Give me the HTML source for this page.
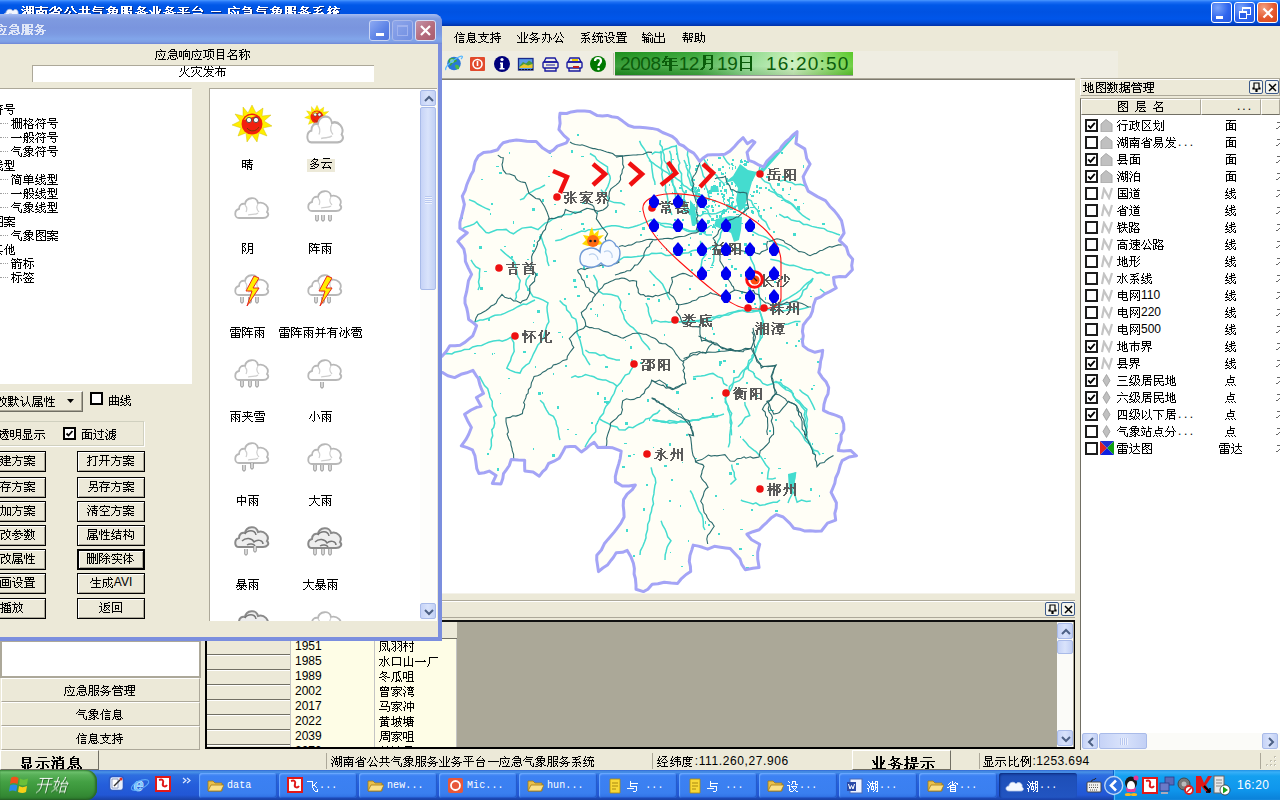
<!DOCTYPE html>
<html><head><meta charset="utf-8">
<style>
*{margin:0;padding:0;box-sizing:border-box}
html,body{width:1280px;height:800px;overflow:hidden;background:#ECE9D8;font-family:"Liberation Sans",sans-serif;font-size:12px;color:#000}
.a{position:absolute}
.t{white-space:nowrap;line-height:14px}
/* main title */
#mtitle{left:0;top:0;width:1280px;height:26px;background:linear-gradient(#4a98ff 0px,#1e70f4 2px,#0058e8 5px,#0052e2 12px,#0056ea 19px,#0048d0 23px,#0030a8 26px)}
#mtitle .tx .g{filter:drop-shadow(1px 1px 0 #0a2a80)}
.xpbtn{width:21px;height:21px;border:1px solid #fff;border-radius:3px;background:radial-gradient(circle at 30% 25%,#7aa4fa,#2f66ee 55%,#2358e0)}
.xpclose{background:radial-gradient(circle at 30% 25%,#f4a080,#e45a30 55%,#d44418)}
#menubar{left:442px;top:26px;width:838px;height:25px;background:#ECE9D8}
#toolbar{left:442px;top:51px;width:676px;height:27px;background:#EFEDE2}
#map{left:442px;top:79px;width:633px;height:515px;background:#fff;border-top:1px solid #7d7a6e;border-bottom:1px solid #f4f2ea}
#rpanel{left:1080px;top:78px;width:200px;height:672px;background:#ECE9D8}
#status{left:0;top:750px;width:1280px;height:20px;background:#ECE9D8}
#taskbar{left:0;top:770px;width:1280px;height:30px;background:linear-gradient(#3168d5 0px,#4993e6 2px,#2e6ee0 5px,#245edb 15px,#2257d5 25px,#1941a5 30px)}
/* dialog */
#dlg{left:-4px;top:14px;width:446px;height:627px;background:#7e96db;border-radius:7px 7px 0 0}
#dlgtitle{left:0;top:14px;width:442px;height:30px;background:linear-gradient(#a6bcf2 0px,#94adea 2px,#7e9ae0 5px,#7a95de 14px,#7c9ae2 20px,#82a6ea 25px,#7e9ee4 28px,#6e86d6 30px);border-radius:0 8px 0 0}
#dlgbody{left:0;top:44px;width:438px;height:593px;background:#ECE9D8}
.btn{border:1px solid #000;background:#ECE9D8;text-align:center;line-height:14px;padding-top:1px;font-size:12px;box-shadow:inset 1px 1px #fff,inset -1px -1px #aca899}
.sbbtn{background:linear-gradient(90deg,#c6d3f7,#d9e3fb 50%,#c2d0f5);border:1px solid #a9bbe9;border-radius:2px}
.pinb{width:14px;height:14px;border:1px solid #3c5a8a;border-radius:2px;background:#f4f4ee}
.hdr{background:#ECE9D8;border:1px solid;border-color:#fff #aca899 #716f64 #fff}
.cb{width:13px;height:13px;border:2px solid #1c1c1c;background:#fff}
.lbtn{width:199px;height:24px;border:1px solid;border-color:#fff #aca899 #aca899 #fff;text-align:center;line-height:14px;padding-top:4px;padding-right:2px}
.sunk{border-top:1px solid #aca899;border-left:1px solid #aca899;border-right:1px solid #fff;border-bottom:1px solid #fff}
.g{display:inline-block;vertical-align:top;fill:currentColor;overflow:visible}
</style></head><body>
<svg width="0" height="0" style="position:absolute;left:0;top:0"><defs><path id="g0" d="M1 2h2v1h-2zM8 2h5v1h-5zM2 3h2v1h-2zM5 2h2v3h-2zM8 3h2v2h-2zM11 3h2v2h-2zM0 5h2v1h-2zM3 5h10v1h-10zM1 6h2v1h-2zM5 6h2v1h-2zM8 6h2v1h-2zM3 7h7v1h-7zM11 6h2v2h-2zM2 8h3v1h-3zM6 8h7v1h-7zM1 9h4v1h-4zM6 9h4v1h-4zM0 10h10v1h-10zM1 11h4v1h-4zM6 11h4v1h-4zM7 12h2v1h-2zM11 9h2v4h-2zM1 12h2v2h-2zM6 13h2v1h-2zM10 13h3v1h-3z"/><path id="g1" d="M5 2h2v1h-2zM0 3h13v1h-13zM5 4h2v2h-2zM1 6h11v1h-11zM1 7h4v1h-4zM7 7h2v1h-2zM1 8h2v1h-2zM4 8h4v1h-4zM1 9h8v1h-8zM1 10h2v1h-2zM5 10h2v1h-2zM1 11h8v1h-8zM10 7h2v6h-2zM1 12h2v2h-2zM5 12h2v2h-2zM8 13h4v1h-4z"/><path id="g2" d="M5 2h2v1h-2zM3 3h4v1h-4zM9 3h2v1h-2zM2 4h2v1h-2zM5 4h2v1h-2zM8 4h4v1h-4zM1 5h2v1h-2zM5 5h4v1h-4zM0 6h2v1h-2zM5 6h3v1h-3zM11 5h2v2h-2zM4 7h7v1h-7zM2 8h3v1h-3zM9 8h2v1h-2zM0 9h11v1h-11zM3 10h2v1h-2zM9 10h2v1h-2zM3 11h8v1h-8zM3 12h2v1h-2zM9 12h2v1h-2zM3 13h8v1h-8z"/><path id="g3" d="M7 2h2v2h-2zM3 3h2v2h-2zM8 4h2v2h-2zM2 5h2v2h-2zM9 6h2v1h-2zM1 7h2v1h-2zM10 7h2v1h-2zM0 8h2v1h-2zM5 7h2v2h-2zM11 8h2v1h-2zM4 9h2v2h-2zM7 10h2v1h-2zM3 11h2v1h-2zM8 11h2v1h-2zM2 12h9v1h-9zM3 13h2v1h-2zM9 13h2v1h-2z"/><path id="g4" d="M4 2h2v3h-2zM8 2h2v3h-2zM1 5h11v1h-11zM4 6h2v3h-2zM8 6h2v3h-2zM0 9h13v1h-13zM4 11h2v1h-2zM8 11h2v1h-2zM3 12h2v1h-2zM9 12h2v1h-2zM1 13h3v1h-3zM10 13h3v1h-3z"/><path id="g5" d="M2 2h2v1h-2zM2 3h10v1h-10zM1 4h2v1h-2zM1 5h9v1h-9zM0 6h2v1h-2zM1 7h9v1h-9zM8 8h2v3h-2zM11 10h2v1h-2zM9 11h4v2h-4zM10 13h3v1h-3z"/><path id="g6" d="M4 2h2v1h-2zM3 3h7v1h-7zM2 4h2v1h-2zM7 4h2v1h-2zM0 5h12v1h-12zM2 6h2v1h-2zM6 6h2v1h-2zM10 6h2v1h-2zM2 7h10v1h-10zM3 8h2v1h-2zM6 8h2v1h-2zM10 8h2v1h-2zM1 9h3v1h-3zM5 9h6v1h-6zM3 10h7v1h-7zM1 11h3v1h-3zM5 11h6v1h-6zM3 12h3v1h-3zM7 12h2v1h-2zM10 12h3v1h-3zM0 13h4v1h-4zM5 13h3v1h-3z"/><path id="g7" d="M1 2h11v1h-11zM1 3h2v2h-2zM4 3h4v2h-4zM10 3h2v2h-2zM1 5h7v1h-7zM9 5h3v1h-3zM4 6h4v1h-4zM1 6h2v2h-2zM4 7h8v1h-8zM1 8h7v1h-7zM4 9h5v1h-5zM10 8h2v2h-2zM4 10h8v1h-8zM1 9h2v3h-2zM4 11h4v1h-4zM9 11h2v1h-2zM4 12h8v1h-8zM0 12h2v2h-2zM3 13h6v1h-6zM11 13h2v1h-2z"/><path id="g8" d="M4 2h2v1h-2zM3 3h8v1h-8zM3 4h2v1h-2zM8 4h2v1h-2zM2 5h4v1h-4zM7 5h2v1h-2zM5 6h3v1h-3zM3 7h3v1h-3zM7 7h3v1h-3zM0 8h4v1h-4zM5 8h2v1h-2zM9 8h4v1h-4zM2 9h9v1h-9zM5 10h2v1h-2zM4 11h2v1h-2zM9 10h2v2h-2zM3 12h2v1h-2zM7 12h4v1h-4zM2 13h2v1h-2zM8 13h2v1h-2z"/><path id="g9" d="M0 6h2v1h-2zM7 2h2v5h-2zM10 5h2v2h-2zM1 7h2v1h-2zM4 2h2v6h-2zM7 7h4v2h-4zM2 8h4v2h-4zM7 9h3v1h-3zM4 10h2v3h-2zM7 10h2v3h-2zM0 13h13v1h-13z"/><path id="g10" d="M1 3h11v1h-11zM2 5h2v1h-2zM5 4h2v2h-2zM9 5h2v1h-2zM3 6h4v1h-4zM8 6h2v1h-2zM5 7h2v1h-2zM0 8h13v1h-13zM5 9h2v5h-2z"/><path id="g11" d="M5 2h2v1h-2zM4 3h2v1h-2zM3 4h2v1h-2zM8 4h2v1h-2zM2 5h2v1h-2zM9 5h2v1h-2zM1 6h11v1h-11zM10 7h2v1h-2zM2 9h9v1h-9zM2 10h2v2h-2zM9 10h2v2h-2zM2 12h9v1h-9zM2 13h2v1h-2zM9 13h2v1h-2z"/><path id="g12" d="M2 7h10v1h-10z"/><path id="g13" d="M6 2h2v1h-2zM7 3h2v1h-2zM1 4h12v1h-12zM5 6h2v1h-2zM1 5h2v3h-2zM6 7h2v1h-2zM1 8h4v1h-4zM4 9h2v1h-2zM7 8h2v2h-2zM10 7h2v3h-2zM1 9h2v3h-2zM5 10h2v2h-2zM9 10h2v2h-2zM0 12h2v1h-2zM8 12h2v1h-2zM0 13h13v1h-13z"/><path id="g14" d="M3 2h2v1h-2zM3 3h7v1h-7zM2 4h2v1h-2zM7 4h2v1h-2zM1 5h10v1h-10zM9 6h2v1h-2zM3 7h8v1h-8zM9 8h2v1h-2zM3 9h8v1h-8zM5 10h2v1h-2zM6 11h2v1h-2zM9 11h2v1h-2zM1 11h4v2h-4zM8 12h4v1h-4zM0 13h2v1h-2zM4 13h8v1h-8z"/><path id="g15" d="M7 2h5v1h-5zM1 3h7v1h-7zM5 4h2v1h-2zM4 5h2v1h-2zM8 5h2v1h-2zM2 6h7v1h-7zM5 7h2v1h-2zM4 8h2v1h-2zM9 8h2v1h-2zM1 9h11v1h-11zM6 10h2v1h-2zM10 10h2v1h-2zM3 11h2v1h-2zM6 11h4v1h-4zM2 12h2v1h-2zM6 12h2v1h-2zM9 12h2v1h-2zM1 13h2v1h-2zM5 13h3v1h-3zM10 13h2v1h-2z"/><path id="g16" d="M7 2h2v1h-2zM2 2h2v2h-2zM8 3h2v1h-2zM1 4h2v1h-2zM4 4h9v1h-9zM1 5h4v1h-4zM7 5h2v1h-2zM0 6h4v1h-4zM6 6h2v1h-2zM9 6h2v1h-2zM2 7h2v1h-2zM5 7h7v1h-7zM1 8h4v1h-4zM6 8h6v1h-6zM0 9h4v1h-4zM6 9h4v2h-4zM2 11h5v1h-5zM0 12h3v1h-3zM5 12h2v1h-2zM8 11h2v2h-2zM11 11h2v2h-2zM4 13h2v1h-2zM9 13h4v1h-4z"/><path id="g17" d="M6 2h1v1h-1zM3 2h1v2h-1zM7 3h1v1h-1zM4 4h7v1h-7zM2 4h1v2h-1zM1 6h2v1h-2zM5 6h5v1h-5zM0 7h1v1h-1zM5 8h5v1h-5zM5 10h5v1h-5zM5 11h1v1h-1zM9 11h1v1h-1zM2 7h1v6h-1zM5 12h5v1h-5z"/><path id="g18" d="M4 2h1v1h-1zM2 3h7v1h-7zM2 4h1v1h-1zM8 4h1v1h-1zM2 5h7v1h-7zM2 6h1v1h-1zM8 6h1v1h-1zM2 7h7v1h-7zM2 8h1v1h-1zM8 8h1v1h-1zM2 9h7v1h-7zM5 10h1v1h-1zM9 10h1v1h-1zM1 10h1v2h-1zM3 10h1v2h-1zM6 11h1v1h-1zM8 11h1v1h-1zM10 11h1v1h-1zM0 12h1v1h-1zM4 12h5v1h-5z"/><path id="g19" d="M5 2h1v2h-1zM0 4h11v1h-11zM5 5h1v1h-1zM2 6h7v1h-7zM3 7h1v2h-1zM7 7h1v2h-1zM4 9h1v1h-1zM6 9h1v1h-1zM5 10h1v1h-1zM3 11h2v1h-2zM6 11h2v1h-2zM0 12h3v1h-3zM8 12h3v1h-3z"/><path id="g20" d="M7 2h1v1h-1zM2 2h1v2h-1zM5 3h5v1h-5zM0 4h5v1h-5zM7 4h1v2h-1zM2 5h1v2h-1zM4 6h7v1h-7zM2 7h2v1h-2zM8 7h1v1h-1zM1 8h2v1h-2zM4 8h7v1h-7zM0 9h1v1h-1zM5 9h1v1h-1zM6 10h1v1h-1zM2 9h1v3h-1zM8 9h1v3h-1zM0 12h3v1h-3zM7 12h2v1h-2z"/><path id="g21" d="M0 5h1v1h-1zM10 4h1v2h-1zM1 6h1v1h-1zM7 2h1v6h-1zM9 6h1v2h-1zM2 7h1v2h-1zM7 8h2v1h-2zM4 2h1v10h-1zM7 9h1v3h-1zM0 12h11v1h-11z"/><path id="g22" d="M3 2h1v1h-1zM3 3h6v1h-6zM2 4h2v1h-2zM7 4h1v1h-1zM1 5h1v1h-1zM4 5h1v1h-1zM6 5h1v1h-1zM5 6h1v1h-1zM3 7h2v1h-2zM6 7h2v1h-2zM0 8h3v1h-3zM5 8h1v1h-1zM8 8h3v1h-3zM2 9h7v1h-7zM4 10h1v1h-1zM3 11h1v1h-1zM8 10h1v2h-1zM1 12h2v1h-2zM6 12h2v1h-2z"/><path id="g23" d="M4 2h1v2h-1zM1 4h8v1h-8zM8 5h1v2h-1zM8 7h2v1h-2zM2 7h1v2h-1zM4 5h1v4h-1zM1 9h1v1h-1zM10 8h1v2h-1zM3 9h1v2h-1zM2 11h1v1h-1zM6 11h1v1h-1zM8 8h1v4h-1zM1 12h1v1h-1zM7 12h1v1h-1z"/><path id="g24" d="M7 2h1v2h-1zM3 3h1v2h-1zM8 4h1v2h-1zM2 5h1v2h-1zM9 6h1v1h-1zM1 7h1v1h-1zM5 6h1v2h-1zM10 7h1v1h-1zM0 8h1v1h-1zM4 8h1v2h-1zM7 9h1v1h-1zM3 10h1v1h-1zM8 10h1v1h-1zM2 11h8v1h-8zM3 12h1v1h-1zM9 12h1v1h-1z"/><path id="g25" d="M7 2h3v1h-3zM1 3h6v1h-6zM4 4h1v1h-1zM8 4h1v1h-1zM2 5h6v1h-6zM5 6h1v1h-1zM4 7h1v1h-1zM8 7h1v1h-1zM1 8h9v1h-9zM9 9h1v1h-1zM3 10h1v1h-1zM7 10h1v1h-1zM2 11h1v1h-1zM5 9h1v3h-1zM8 11h1v1h-1zM1 12h1v1h-1zM4 12h2v1h-2zM9 12h1v1h-1z"/><path id="g26" d="M7 2h1v1h-1zM2 2h1v2h-1zM4 3h7v1h-7zM6 4h1v1h-1zM1 4h1v2h-1zM3 5h1v1h-1zM5 5h1v1h-1zM9 5h1v1h-1zM0 6h3v1h-3zM4 6h7v1h-7zM2 7h1v1h-1zM10 7h1v1h-1zM1 8h1v1h-1zM0 9h4v1h-4zM6 7h1v4h-1zM2 11h2v1h-2zM5 11h1v1h-1zM8 7h1v5h-1zM10 10h1v2h-1zM0 12h2v1h-2zM4 12h1v1h-1zM8 12h3v1h-3z"/><path id="g27" d="M1 2h1v1h-1zM5 2h4v1h-4zM2 3h1v1h-1zM5 3h1v2h-1zM8 3h1v2h-1zM4 5h1v1h-1zM8 5h3v1h-3zM0 6h3v1h-3zM4 7h6v1h-6zM5 8h1v1h-1zM9 8h1v1h-1zM2 7h1v3h-1zM6 9h1v1h-1zM8 9h1v1h-1zM2 10h2v1h-2zM7 10h1v1h-1zM2 11h1v1h-1zM6 11h1v1h-1zM8 11h1v1h-1zM3 12h3v1h-3zM9 12h2v1h-2z"/><path id="g28" d="M1 2h9v1h-9zM1 3h1v1h-1zM4 3h1v1h-1zM6 3h1v1h-1zM9 3h1v1h-1zM1 4h9v1h-9zM5 5h1v1h-1zM0 6h11v1h-11zM2 7h1v1h-1zM8 7h1v1h-1zM2 8h7v1h-7zM2 9h1v1h-1zM8 9h1v1h-1zM2 10h7v1h-7zM2 11h1v1h-1zM8 11h1v1h-1zM0 12h11v1h-11z"/><path id="g29" d="M7 2h1v1h-1zM1 2h1v2h-1zM6 3h1v1h-1zM8 3h1v1h-1zM0 4h4v1h-4zM5 4h1v1h-1zM9 4h1v1h-1zM1 5h1v1h-1zM4 5h1v1h-1zM6 5h3v1h-3zM10 5h1v1h-1zM0 6h1v1h-1zM2 6h1v1h-1zM0 7h7v1h-7zM2 8h1v1h-1zM4 8h1v1h-1zM6 8h1v1h-1zM2 9h5v1h-5zM0 10h3v1h-3zM4 10h1v1h-1zM6 10h1v1h-1zM4 11h3v1h-3zM8 8h1v4h-1zM10 7h1v5h-1zM2 11h1v2h-1zM4 12h1v1h-1zM6 12h1v1h-1zM9 12h2v1h-2z"/><path id="g30" d="M1 3h1v3h-1zM5 2h1v4h-1zM9 3h1v3h-1zM1 6h9v1h-9zM0 8h1v4h-1zM5 7h1v5h-1zM10 8h1v4h-1zM0 12h11v1h-11z"/><path id="g31" d="M3 2h1v1h-1zM1 3h5v1h-5zM7 3h4v1h-4zM3 4h1v1h-1zM10 4h1v1h-1zM1 5h5v1h-5zM9 5h1v1h-1zM3 6h1v1h-1zM7 4h1v3h-1zM10 6h1v1h-1zM0 7h6v1h-6zM7 7h4v1h-4zM2 8h1v1h-1zM5 8h1v1h-1zM7 8h1v1h-1zM1 9h9v1h-9zM9 10h1v1h-1zM2 10h1v2h-1zM8 11h2v1h-2zM5 10h1v3h-1z"/><path id="g32" d="M1 3h4v1h-4zM7 2h1v3h-1zM1 4h1v2h-1zM4 4h1v2h-1zM6 5h5v1h-5zM1 6h4v1h-4zM1 7h1v1h-1zM4 7h1v1h-1zM1 8h4v1h-4zM4 9h1v1h-1zM7 6h1v4h-1zM1 9h1v2h-1zM3 10h4v1h-4zM0 11h3v1h-3zM6 11h1v1h-1zM8 11h1v1h-1zM10 6h1v6h-1zM5 12h1v1h-1zM9 12h1v1h-1z"/><path id="g33" d="M4 4h3v1h-3zM4 5h2v1h-2zM3 6h13v1h-13zM3 7h2v1h-2zM2 8h2v1h-2zM8 7h3v2h-3zM1 9h15v1h-15zM1 10h2v1h-2zM4 10h2v3h-2zM8 10h3v3h-3zM1 13h16v1h-16zM8 14h3v5h-3z"/><path id="g34" d="M4 3h10v1h-10zM4 4h3v3h-3zM12 4h2v3h-2zM4 7h10v1h-10zM4 8h3v3h-3zM12 8h2v3h-2zM4 11h10v1h-10zM4 12h3v1h-3zM4 13h2v2h-2zM3 15h3v1h-3zM12 12h2v4h-2zM2 16h3v1h-3zM11 16h3v1h-3zM1 17h3v1h-3zM10 17h3v1h-3z"/><path id="g35" d="M3 4h12v1h-12zM3 5h2v5h-2zM13 5h2v5h-2zM3 10h12v1h-12zM3 11h2v5h-2zM13 11h2v5h-2zM3 16h12v1h-12zM3 17h2v2h-2zM13 17h2v2h-2z"/><path id="g36" d="M2 2h1v3h-1zM7 2h1v3h-1zM9 4h1v1h-1zM0 5h4v1h-4zM5 3h1v3h-1zM7 5h3v1h-3zM5 6h3v1h-3zM4 7h2v1h-2zM7 7h1v2h-1zM9 6h1v3h-1zM2 6h1v4h-1zM7 9h3v1h-3zM2 10h2v1h-2zM7 10h1v1h-1zM0 11h2v1h-2zM5 8h1v4h-1zM10 10h1v2h-1zM6 12h5v1h-5z"/><path id="g37" d="M1 2h10v1h-10zM4 3h1v1h-1zM4 4h5v1h-5zM1 3h1v3h-1zM3 5h2v1h-2zM7 5h1v1h-1zM1 6h2v1h-2zM5 6h2v1h-2zM1 7h1v1h-1zM4 7h1v1h-1zM7 7h1v1h-1zM10 3h1v5h-1zM1 8h3v1h-3zM5 8h1v1h-1zM8 8h3v1h-3zM6 9h1v1h-1zM5 10h1v1h-1zM1 9h1v3h-1zM6 11h1v1h-1zM10 9h1v3h-1zM1 12h10v1h-10z"/><path id="g38" d="M0 2h1v1h-1zM3 2h1v1h-1zM5 2h1v1h-1zM1 3h1v1h-1zM3 3h2v1h-2zM7 2h1v2h-1zM0 4h6v1h-6zM7 4h4v1h-4zM2 5h2v1h-2zM6 5h2v1h-2zM1 6h1v1h-1zM3 6h2v1h-2zM0 7h1v1h-1zM3 7h1v1h-1zM5 7h1v1h-1zM0 8h6v1h-6zM2 9h1v1h-1zM7 6h1v4h-1zM9 5h1v5h-1zM1 10h2v1h-2zM4 9h1v2h-1zM8 10h1v1h-1zM3 11h1v1h-1zM7 11h1v1h-1zM9 11h1v1h-1zM0 12h3v1h-3zM4 12h3v1h-3zM10 12h1v1h-1z"/><path id="g39" d="M5 2h6v1h-6zM2 2h1v2h-1zM5 3h1v1h-1zM0 4h6v1h-6zM10 3h1v2h-1zM5 5h6v1h-6zM2 5h1v2h-1zM4 6h2v1h-2zM8 6h1v1h-1zM2 7h2v1h-2zM5 7h6v1h-6zM1 8h2v1h-2zM5 8h1v1h-1zM8 8h1v1h-1zM0 9h1v1h-1zM5 9h6v1h-6zM4 10h3v1h-3zM0 11h1v1h-1zM2 9h1v3h-1zM4 11h1v1h-1zM6 11h1v1h-1zM10 10h1v2h-1zM1 12h1v1h-1zM3 12h1v1h-1zM6 12h5v1h-5z"/><path id="g40" d="M2 2h1v1h-1zM7 2h1v1h-1zM2 3h4v1h-4zM7 3h4v1h-4zM1 4h1v1h-1zM3 4h1v1h-1zM6 4h1v1h-1zM8 4h1v1h-1zM0 5h11v1h-11zM0 6h1v1h-1zM10 6h1v1h-1zM2 7h7v1h-7zM2 8h1v1h-1zM8 8h1v1h-1zM2 9h8v1h-8zM2 10h1v2h-1zM9 10h1v2h-1zM2 12h8v1h-8z"/><path id="g41" d="M4 2h7v1h-7zM0 3h5v1h-5zM7 3h1v1h-1zM10 3h1v1h-1zM4 4h7v1h-7zM2 4h1v3h-1zM4 5h1v2h-1zM7 5h1v2h-1zM10 5h1v2h-1zM0 7h11v1h-11zM7 8h1v1h-1zM2 8h1v2h-1zM5 9h5v1h-5zM2 10h2v1h-2zM0 11h2v1h-2zM7 10h1v2h-1zM4 12h7v1h-7z"/><path id="g42" d="M2 2h8v1h-8zM2 3h1v1h-1zM9 3h1v1h-1zM2 4h8v1h-8zM4 6h6v1h-6zM2 5h1v3h-1zM2 8h9v1h-9zM6 9h1v1h-1zM2 9h1v2h-1zM5 10h1v1h-1zM8 10h1v1h-1zM1 11h1v1h-1zM4 11h1v1h-1zM9 11h1v1h-1zM0 12h1v1h-1zM4 12h7v1h-7z"/><path id="g43" d="M3 2h1v1h-1zM3 3h7v1h-7zM3 4h1v1h-1zM8 4h1v1h-1zM2 5h1v1h-1zM4 5h1v1h-1zM7 5h1v1h-1zM1 6h1v1h-1zM5 6h2v1h-2zM5 7h1v1h-1zM3 8h7v1h-7zM0 9h4v1h-4zM3 10h1v2h-1zM9 9h1v3h-1zM3 12h7v1h-7z"/><path id="g44" d="M2 2h1v1h-1zM5 2h5v1h-5zM1 3h1v1h-1zM0 4h1v1h-1zM3 5h1v1h-1zM2 6h1v1h-1zM4 6h7v1h-7zM1 7h2v1h-2zM0 8h1v1h-1zM8 7h1v5h-1zM2 8h1v5h-1zM6 12h3v1h-3z"/><path id="g45" d="M0 3h6v1h-6zM7 2h1v2h-1zM7 4h4v1h-4zM3 4h1v2h-1zM6 5h2v1h-2zM3 6h3v1h-3zM7 6h1v3h-1zM9 5h1v4h-1zM3 7h1v3h-1zM1 6h1v5h-1zM3 10h3v1h-3zM8 9h1v2h-1zM0 11h3v1h-3zM7 11h1v1h-1zM9 11h1v1h-1zM5 12h2v1h-2zM10 12h1v1h-1z"/><path id="g46" d="M1 2h9v1h-9zM3 4h1v1h-1zM4 5h1v1h-1zM8 4h1v2h-1zM5 6h1v1h-1zM7 6h1v1h-1zM6 7h1v1h-1zM5 8h1v1h-1zM7 8h1v1h-1zM4 9h1v1h-1zM3 10h1v1h-1zM8 9h1v2h-1zM1 3h1v9h-1zM1 12h10v1h-10z"/><path id="g47" d="M4 2h1v1h-1zM5 3h1v1h-1zM2 2h1v3h-1zM0 5h7v1h-7zM5 7h1v1h-1zM2 6h1v3h-1zM4 8h1v1h-1zM3 9h1v1h-1zM8 4h1v6h-1zM2 10h2v1h-2zM1 11h1v1h-1zM4 11h1v1h-1zM6 10h1v2h-1zM10 2h1v10h-1zM0 12h1v1h-1zM5 12h2v1h-2zM8 12h3v1h-3z"/><path id="g48" d="M1 2h10v1h-10zM5 3h1v1h-1zM4 4h1v1h-1zM1 5h10v1h-10zM4 6h1v1h-1zM7 6h1v1h-1zM4 7h4v1h-4zM4 8h1v1h-1zM7 8h1v1h-1zM4 9h4v1h-4zM1 6h1v5h-1zM4 10h1v1h-1zM7 10h1v1h-1zM10 6h1v5h-1zM1 11h10v1h-10zM1 12h1v1h-1zM10 12h1v1h-1z"/><path id="g49" d="M7 2h1v2h-1zM1 4h10v1h-10zM6 5h2v1h-2zM5 6h1v1h-1zM4 7h1v1h-1zM3 8h1v1h-1zM2 9h1v1h-1zM0 10h2v1h-2zM5 11h1v1h-1zM7 6h1v6h-1zM6 12h1v1h-1z"/><path id="g50" d="M1 2h1v1h-1zM8 2h3v1h-3zM2 3h1v1h-1zM5 2h1v2h-1zM8 3h1v1h-1zM3 4h6v1h-6zM10 3h1v2h-1zM0 5h1v1h-1zM8 5h3v1h-3zM1 6h1v1h-1zM3 5h1v2h-1zM5 5h1v2h-1zM4 7h3v1h-3zM8 6h1v2h-1zM10 6h1v2h-1zM2 7h1v2h-1zM8 8h3v1h-3zM0 9h2v1h-2zM4 8h1v2h-1zM6 8h1v2h-1zM4 10h3v1h-3zM8 9h1v2h-1zM7 11h1v1h-1zM10 9h1v3h-1zM1 10h1v3h-1zM6 12h1v1h-1zM9 12h2v1h-2z"/><path id="g51" d="M5 2h1v1h-1zM0 3h11v1h-11zM5 4h1v1h-1zM1 5h9v1h-9zM3 6h1v1h-1zM7 6h1v1h-1zM1 6h1v2h-1zM4 7h1v1h-1zM6 7h1v1h-1zM9 6h1v2h-1zM1 8h9v1h-9zM1 9h1v1h-1zM5 9h1v1h-1zM9 9h1v1h-1zM1 10h9v1h-9zM9 11h1v1h-1zM1 11h1v2h-1zM5 11h1v2h-1zM8 12h2v1h-2z"/><path id="g52" d="M3 3h1v1h-1zM8 3h1v1h-1zM2 4h1v1h-1zM5 2h1v3h-1zM7 4h1v1h-1zM9 4h2v1h-2zM1 5h1v1h-1zM5 5h2v1h-2zM10 5h1v1h-1zM3 6h6v1h-6zM2 7h2v1h-2zM8 7h1v1h-1zM0 8h2v1h-2zM3 8h6v1h-6zM3 9h1v1h-1zM8 9h1v1h-1zM3 10h6v1h-6zM3 11h1v1h-1zM8 11h1v1h-1zM3 12h6v1h-6z"/><path id="g53" d="M2 2h7v1h-7zM2 3h1v1h-1zM8 3h1v1h-1zM2 4h7v1h-7zM2 5h1v1h-1zM8 5h1v1h-1zM2 6h7v1h-7zM2 7h1v1h-1zM2 8h8v1h-8zM1 9h1v1h-1zM4 9h1v1h-1zM0 10h1v1h-1zM3 10h1v1h-1zM6 9h1v2h-1zM2 11h1v1h-1zM5 11h1v1h-1zM9 9h1v3h-1zM1 12h1v1h-1zM4 12h1v1h-1zM7 12h2v1h-2z"/><path id="g54" d="M8 2h1v1h-1zM2 2h1v2h-1zM9 3h1v1h-1zM1 4h1v1h-1zM5 2h1v3h-1zM1 5h10v1h-10zM4 6h1v1h-1zM4 7h5v1h-5zM4 8h1v1h-1zM8 8h1v1h-1zM3 9h1v1h-1zM5 9h1v1h-1zM7 9h1v1h-1zM2 10h1v1h-1zM6 10h1v1h-1zM1 11h1v1h-1zM5 11h1v1h-1zM7 11h2v1h-2zM0 12h1v1h-1zM3 12h2v1h-2zM9 12h2v1h-2z"/><path id="g55" d="M2 2h7v1h-7zM2 3h1v1h-1zM8 3h1v1h-1zM2 4h7v1h-7zM2 5h1v1h-1zM8 5h1v1h-1zM2 6h7v1h-7zM2 7h1v1h-1zM8 7h1v1h-1zM0 8h11v1h-11zM4 9h1v1h-1zM3 10h1v1h-1zM8 10h1v1h-1zM1 11h9v1h-9zM2 12h1v1h-1zM9 12h1v1h-1z"/><path id="g56" d="M1 2h1v1h-1zM7 2h1v1h-1zM2 3h1v1h-1zM6 3h1v1h-1zM0 4h1v1h-1zM5 4h6v1h-6zM1 5h1v1h-1zM3 5h1v2h-1zM5 5h1v2h-1zM10 5h1v2h-1zM5 7h6v1h-6zM2 7h1v2h-1zM0 9h2v1h-2zM5 8h1v3h-1zM10 8h1v3h-1zM5 11h6v1h-6zM1 10h1v3h-1zM5 12h1v1h-1zM10 12h1v1h-1z"/><path id="g57" d="M1 2h10v1h-10zM3 4h6v1h-6zM5 5h1v2h-1zM3 7h6v1h-6zM7 8h1v1h-1zM1 3h1v7h-1zM5 8h1v2h-1zM8 9h1v1h-1zM10 3h1v7h-1zM1 10h10v1h-10zM1 11h1v1h-1zM10 11h1v1h-1zM1 12h10v1h-10z"/><path id="g58" d="M1 2h1v1h-1zM5 2h1v1h-1zM9 2h1v1h-1zM6 3h1v1h-1zM8 3h1v1h-1zM2 3h1v2h-1zM4 4h7v1h-7zM7 5h1v1h-1zM0 6h3v1h-3zM5 6h5v1h-5zM5 7h1v1h-1zM9 7h1v1h-1zM5 8h5v1h-5zM5 9h1v1h-1zM9 9h1v1h-1zM2 7h1v4h-1zM5 10h5v1h-5zM1 11h1v1h-1zM3 11h1v1h-1zM0 12h1v1h-1zM4 12h7v1h-7z"/><path id="g59" d="M8 2h1v1h-1zM2 2h1v2h-1zM6 2h1v2h-1zM9 3h1v1h-1zM6 4h4v1h-4zM1 4h1v2h-1zM4 5h3v1h-3zM0 6h3v1h-3zM6 6h5v1h-5zM2 7h1v1h-1zM4 7h3v1h-3zM1 8h1v1h-1zM9 8h1v1h-1zM0 9h4v1h-4zM6 8h1v2h-1zM8 9h1v1h-1zM4 10h1v1h-1zM7 10h1v1h-1zM2 11h2v1h-2zM6 11h1v1h-1zM8 11h1v1h-1zM10 10h1v2h-1zM0 12h2v1h-2zM4 12h2v1h-2zM9 12h2v1h-2z"/><path id="g60" d="M1 2h1v1h-1zM1 3h3v1h-3zM5 2h1v2h-1zM7 2h1v2h-1zM1 4h1v1h-1zM5 4h5v1h-5zM1 5h4v1h-4zM0 6h1v1h-1zM7 5h1v2h-1zM2 6h1v2h-1zM4 7h7v1h-7zM0 8h4v1h-4zM7 8h1v1h-1zM2 9h1v2h-1zM4 10h1v1h-1zM6 9h1v2h-1zM8 9h1v2h-1zM2 11h2v1h-2zM5 11h1v1h-1zM9 11h1v1h-1zM2 12h1v1h-1zM4 12h1v1h-1zM10 12h1v1h-1z"/><path id="g61" d="M0 2h4v1h-4zM5 2h1v1h-1zM5 3h5v1h-5zM3 3h1v2h-1zM5 4h1v1h-1zM9 4h1v1h-1zM0 3h1v3h-1zM3 5h2v1h-2zM6 5h1v1h-1zM8 5h1v1h-1zM0 6h4v1h-4zM7 6h1v1h-1zM2 7h1v1h-1zM6 7h1v1h-1zM8 7h1v1h-1zM2 8h2v1h-2zM5 8h1v1h-1zM9 8h1v1h-1zM4 9h7v1h-7zM2 9h1v2h-1zM0 8h1v4h-1zM2 11h2v1h-2zM5 10h1v2h-1zM9 10h1v2h-1zM0 12h2v1h-2zM5 12h5v1h-5z"/><path id="g62" d="M5 2h1v1h-1zM0 3h11v1h-11zM3 5h5v1h-5zM3 6h1v1h-1zM7 6h1v1h-1zM1 7h9v1h-9zM3 9h5v1h-5zM3 10h1v1h-1zM7 10h1v1h-1zM3 11h5v1h-5zM9 8h1v4h-1zM1 8h1v5h-1zM8 12h2v1h-2z"/><path id="g63" d="M1 2h1v1h-1zM7 2h1v1h-1zM2 3h9v1h-9zM2 4h1v1h-1zM7 4h1v1h-1zM4 5h7v1h-7zM0 6h3v1h-3zM4 6h1v1h-1zM7 6h1v1h-1zM10 6h1v1h-1zM4 7h7v1h-7zM6 8h3v1h-3zM5 9h1v1h-1zM9 9h1v1h-1zM2 7h1v4h-1zM4 10h1v1h-1zM10 10h1v1h-1zM1 11h1v1h-1zM3 11h1v1h-1zM7 9h1v3h-1zM0 12h1v1h-1zM4 12h7v1h-7z"/><path id="g64" d="M1 2h6v1h-6zM10 2h1v1h-1zM9 3h1v1h-1zM8 4h1v1h-1zM2 3h1v3h-1zM5 3h1v3h-1zM10 5h1v1h-1zM0 6h7v1h-7zM9 6h1v1h-1zM8 7h1v1h-1zM7 8h1v1h-1zM10 9h1v1h-1zM2 7h1v4h-1zM9 10h1v1h-1zM1 11h1v1h-1zM5 7h1v5h-1zM8 11h1v1h-1zM0 12h1v1h-1zM5 12h3v1h-3z"/><path id="g65" d="M5 2h1v3h-1zM9 4h1v1h-1zM0 5h4v1h-4zM5 5h2v1h-2zM8 5h1v1h-1zM3 6h1v2h-1zM7 6h1v2h-1zM2 8h1v2h-1zM8 8h1v2h-1zM1 10h1v1h-1zM9 10h1v1h-1zM0 11h1v1h-1zM3 11h1v1h-1zM5 6h1v6h-1zM10 11h1v1h-1zM4 12h1v1h-1z"/><path id="g66" d="M5 2h1v2h-1zM1 4h9v1h-9zM1 5h1v1h-1zM5 5h1v1h-1zM9 5h1v1h-1zM1 6h9v1h-9zM1 7h1v2h-1zM5 7h1v2h-1zM9 7h1v2h-1zM1 9h9v1h-9zM5 10h1v2h-1zM10 10h1v2h-1zM6 12h5v1h-5z"/><path id="g67" d="M1 2h10v1h-10zM1 3h1v2h-1zM1 5h2v1h-2zM4 4h1v2h-1zM6 5h1v1h-1zM8 4h1v2h-1zM3 6h1v1h-1zM4 7h1v1h-1zM7 6h1v2h-1zM1 6h1v3h-1zM3 8h1v1h-1zM5 8h2v1h-2zM1 9h2v1h-2zM6 9h1v1h-1zM8 8h1v2h-1zM5 10h1v1h-1zM10 3h1v9h-1zM1 10h1v3h-1zM8 12h3v1h-3z"/><path id="g68" d="M5 2h1v2h-1zM0 4h11v1h-11zM5 5h1v1h-1zM2 6h8v1h-8zM7 10h1v1h-1zM9 7h1v4h-1zM2 7h1v5h-1zM8 11h1v1h-1zM5 7h1v6h-1z"/><path id="g69" d="M1 2h9v1h-9zM1 3h1v1h-1zM5 3h1v1h-1zM9 3h1v1h-1zM1 4h9v1h-9zM1 5h1v1h-1zM5 5h1v1h-1zM9 5h1v1h-1zM1 6h9v1h-9zM4 7h1v1h-1zM6 7h1v1h-1zM2 8h2v1h-2zM7 8h2v1h-2zM0 9h2v1h-2zM9 9h2v1h-2zM3 9h1v2h-1zM2 11h1v1h-1zM1 12h1v1h-1zM7 9h1v4h-1z"/><path id="g70" d="M1 3h9v1h-9zM2 7h7v1h-7zM0 12h11v1h-11z"/><path id="g71" d="M4 2h6v1h-6zM2 2h1v2h-1zM4 4h1v1h-1zM9 3h1v2h-1zM1 4h1v2h-1zM3 5h1v1h-1zM8 5h1v1h-1zM0 6h3v1h-3zM8 6h3v1h-3zM2 7h1v1h-1zM1 8h1v1h-1zM6 3h1v6h-1zM10 7h1v2h-1zM0 9h4v1h-4zM5 9h1v1h-1zM7 9h1v1h-1zM9 9h1v1h-1zM4 10h2v1h-2zM8 10h1v1h-1zM2 11h2v1h-2zM5 11h1v1h-1zM7 11h1v1h-1zM9 11h1v1h-1zM0 12h2v1h-2zM4 12h1v1h-1zM6 12h1v1h-1zM10 12h1v1h-1z"/><path id="g72" d="M2 2h8v1h-8zM2 3h1v1h-1zM9 3h1v1h-1zM2 4h8v1h-8zM2 5h1v1h-1zM6 5h1v1h-1zM2 6h9v1h-9zM6 7h1v1h-1zM4 8h6v1h-6zM2 7h1v4h-1zM4 9h1v2h-1zM9 9h1v2h-1zM1 11h1v1h-1zM4 11h6v1h-6zM0 12h1v1h-1zM4 12h1v1h-1zM9 12h1v1h-1z"/><path id="g73" d="M1 2h9v1h-9zM1 3h1v2h-1zM9 3h1v2h-1zM1 5h9v1h-9zM1 6h1v2h-1zM5 6h1v2h-1zM1 8h10v1h-10zM4 10h1v1h-1zM6 9h1v2h-1zM1 9h1v3h-1zM3 11h1v1h-1zM7 11h1v1h-1zM10 10h1v2h-1zM1 12h2v1h-2zM8 12h3v1h-3z"/><path id="g74" d="M5 2h1v2h-1zM5 4h5v1h-5zM5 5h1v1h-1zM2 6h7v1h-7zM2 7h1v2h-1zM8 7h1v2h-1zM2 9h7v1h-7zM1 11h1v1h-1zM3 11h1v1h-1zM6 11h1v1h-1zM9 11h1v1h-1zM0 12h1v1h-1zM4 12h1v1h-1zM7 12h1v1h-1zM10 12h1v1h-1z"/><path id="g75" d="M4 2h1v1h-1zM5 3h1v1h-1zM0 5h11v1h-11zM7 8h1v1h-1zM3 8h1v2h-1zM8 9h1v1h-1zM2 10h1v1h-1zM9 10h1v1h-1zM1 11h1v1h-1zM0 12h1v1h-1zM10 11h1v2h-1z"/><path id="g76" d="M1 3h9v1h-9zM4 4h1v4h-1zM6 4h1v4h-1zM9 4h1v4h-1zM1 4h1v5h-1zM3 8h1v1h-1zM6 8h4v1h-4zM1 9h2v1h-2zM1 10h1v1h-1zM9 9h1v2h-1zM1 11h9v1h-9zM1 12h1v1h-1zM9 12h1v1h-1z"/><path id="g77" d="M4 4h1v1h-1zM5 5h1v2h-1zM4 8h1v1h-1zM1 3h1v7h-1zM3 9h1v1h-1zM8 2h1v8h-1zM1 10h2v1h-2zM7 10h1v1h-1zM9 10h1v1h-1zM1 11h1v1h-1zM6 11h1v1h-1zM4 12h2v1h-2zM10 11h1v2h-1z"/><path id="g78" d="M0 3h11v1h-11zM5 4h1v2h-1zM5 6h2v1h-2zM7 7h1v1h-1zM8 8h1v2h-1zM5 7h1v6h-1z"/><path id="g79" d="M3 2h1v1h-1zM3 3h7v1h-7zM2 4h1v1h-1zM1 5h1v1h-1zM3 5h6v1h-6zM0 6h1v1h-1zM2 7h6v1h-6zM7 8h1v3h-1zM8 11h1v1h-1zM10 9h1v3h-1zM9 12h2v1h-2z"/><path id="g80" d="M3 2h5v1h-5zM2 3h1v1h-1zM6 3h1v1h-1zM1 4h9v1h-9zM0 5h1v1h-1zM2 5h1v1h-1zM5 5h1v1h-1zM9 5h1v1h-1zM2 6h8v1h-8zM3 7h1v1h-1zM5 7h1v1h-1zM9 7h1v1h-1zM1 8h2v1h-2zM4 8h3v1h-3zM8 8h1v1h-1zM3 9h1v1h-1zM6 9h2v1h-2zM1 10h2v1h-2zM5 10h2v1h-2zM8 10h1v1h-1zM3 11h2v1h-2zM6 11h1v1h-1zM9 11h2v1h-2zM0 12h3v1h-3zM5 12h2v1h-2z"/><path id="g81" d="M1 2h1v1h-1zM2 3h1v1h-1zM7 2h1v2h-1zM0 4h5v1h-5zM7 4h4v1h-4zM0 6h1v1h-1zM7 5h1v2h-1zM5 7h5v1h-5zM1 7h1v2h-1zM3 6h1v3h-1zM2 9h1v1h-1zM2 10h2v1h-2zM0 11h2v1h-2zM5 8h1v4h-1zM9 8h1v4h-1zM5 12h5v1h-5z"/><path id="g82" d="M3 2h1v2h-1zM7 2h1v2h-1zM2 4h1v2h-1zM8 4h1v2h-1zM1 6h1v1h-1zM9 6h1v1h-1zM0 7h1v1h-1zM2 7h7v1h-7zM10 7h1v1h-1zM4 8h1v2h-1zM3 10h1v1h-1zM2 11h1v1h-1zM8 8h1v4h-1zM0 12h2v1h-2zM6 12h2v1h-2z"/><path id="g83" d="M1 2h9v1h-9zM5 3h1v1h-1zM0 4h11v1h-11zM0 5h1v2h-1zM2 6h2v1h-2zM7 6h2v1h-2zM10 5h1v2h-1zM5 5h1v3h-1zM1 8h9v1h-9zM1 9h1v1h-1zM5 9h1v1h-1zM9 9h1v1h-1zM1 10h9v1h-9zM1 11h1v1h-1zM5 11h1v1h-1zM9 11h1v1h-1zM1 12h9v1h-9z"/><path id="g84" d="M1 2h1v1h-1zM2 3h1v2h-1zM7 2h1v3h-1zM4 5h7v1h-7zM0 6h3v1h-3zM7 6h1v2h-1zM6 8h1v1h-1zM8 8h1v1h-1zM5 9h1v1h-1zM9 9h1v1h-1zM2 7h1v4h-1zM4 10h1v1h-1zM10 10h1v1h-1zM1 11h1v1h-1zM3 11h1v1h-1zM0 12h1v1h-1zM4 12h7v1h-7z"/><path id="g85" d="M1 2h8v1h-8zM3 4h4v1h-4zM3 6h1v1h-1zM4 7h1v1h-1zM6 5h1v3h-1zM5 8h1v2h-1zM4 10h1v1h-1zM8 3h1v8h-1zM10 9h1v2h-1zM1 3h1v9h-1zM3 11h1v1h-1zM6 10h1v2h-1zM9 11h2v1h-2zM0 12h1v1h-1zM10 12h1v1h-1z"/><path id="g86" d="M0 2h5v1h-5zM6 2h5v1h-5zM1 4h1v1h-1zM7 4h1v1h-1zM2 5h1v1h-1zM8 5h1v1h-1zM10 3h1v3h-1zM4 3h1v4h-1zM9 6h2v1h-2zM3 7h2v1h-2zM8 7h1v1h-1zM2 8h1v1h-1zM7 8h1v1h-1zM1 9h1v1h-1zM6 9h1v1h-1zM0 10h1v1h-1zM2 11h1v1h-1zM4 8h1v4h-1zM8 11h1v1h-1zM10 7h1v5h-1zM3 12h1v1h-1zM9 12h1v1h-1z"/><path id="g87" d="M2 2h1v2h-1zM9 2h1v2h-1zM0 4h5v1h-5zM6 4h5v1h-5zM2 5h1v1h-1zM1 6h3v1h-3zM6 6h1v1h-1zM1 7h2v1h-2zM4 7h1v1h-1zM0 8h1v1h-1zM7 7h1v2h-1zM9 5h1v7h-1zM2 8h1v5h-1zM7 12h3v1h-3z"/><path id="g88" d="M1 3h9v1h-9zM1 4h1v6h-1zM9 4h1v6h-1zM1 10h9v1h-9zM1 11h1v1h-1zM9 11h1v1h-1z"/><path id="g89" d="M1 4h1v7h-1zM5 2h1v9h-1zM9 4h1v7h-1zM1 11h9v1h-9zM1 12h1v1h-1zM9 12h1v1h-1z"/><path id="g90" d="M9 6h1v1h-1zM0 7h11v1h-11z"/><path id="g91" d="M2 3h9v1h-9zM2 4h1v6h-1zM1 10h1v2h-1zM0 12h1v1h-1z"/><path id="g92" d="M3 2h1v1h-1zM3 3h5v1h-5zM2 4h2v1h-2zM7 4h1v1h-1zM1 5h1v1h-1zM4 5h1v1h-1zM6 5h1v1h-1zM5 6h1v1h-1zM3 7h2v1h-2zM6 7h2v1h-2zM0 8h3v1h-3zM5 8h1v1h-1zM8 8h3v1h-3zM6 9h1v1h-1zM3 10h2v1h-2zM5 11h1v1h-1zM6 12h1v1h-1z"/><path id="g93" d="M7 2h3v1h-3zM2 3h6v1h-6zM7 4h1v3h-1zM8 7h1v2h-1zM2 4h1v6h-1zM5 4h1v7h-1zM7 10h1v1h-1zM9 9h1v2h-1zM1 10h1v2h-1zM5 11h4v1h-4zM0 12h1v1h-1zM4 12h2v1h-2zM8 12h1v1h-1zM10 11h1v2h-1z"/><path id="g94" d="M5 2h5v1h-5zM0 3h4v1h-4zM5 3h1v2h-1zM9 3h1v2h-1zM5 5h5v1h-5zM0 4h1v4h-1zM3 4h1v4h-1zM5 6h1v2h-1zM9 6h1v2h-1zM0 8h4v1h-4zM5 8h5v1h-5zM0 9h1v1h-1zM3 9h1v1h-1zM5 9h1v3h-1zM9 9h1v3h-1zM3 12h8v1h-8z"/><path id="g95" d="M3 2h1v1h-1zM6 2h1v1h-1zM1 3h9v1h-9zM1 4h2v1h-2zM8 4h2v1h-2zM1 5h1v1h-1zM3 5h1v1h-1zM5 4h1v2h-1zM7 5h1v1h-1zM9 5h1v1h-1zM1 6h9v1h-9zM2 8h7v1h-7zM2 9h1v1h-1zM8 9h1v1h-1zM2 10h7v1h-7zM2 11h1v1h-1zM8 11h1v1h-1zM2 12h7v1h-7z"/><path id="g96" d="M5 2h1v1h-1zM0 3h11v1h-11zM0 4h1v2h-1zM2 5h7v1h-7zM10 4h1v2h-1zM3 6h1v1h-1zM5 6h1v1h-1zM9 6h1v1h-1zM2 7h1v1h-1zM4 7h1v1h-1zM6 7h1v1h-1zM8 7h1v1h-1zM3 8h1v1h-1zM6 8h2v1h-2zM1 9h2v1h-2zM4 9h3v1h-3zM8 9h1v1h-1zM3 10h1v1h-1zM9 10h1v1h-1zM1 11h2v1h-2zM6 10h1v2h-1zM10 11h1v1h-1zM4 12h2v1h-2z"/><path id="g97" d="M1 2h1v1h-1zM7 2h1v1h-1zM2 3h1v1h-1zM4 3h7v1h-7zM5 4h2v1h-2zM8 4h2v1h-2zM0 5h1v1h-1zM4 5h1v1h-1zM6 5h1v1h-1zM8 5h1v1h-1zM10 5h1v1h-1zM1 6h1v1h-1zM5 6h5v1h-5zM9 7h1v1h-1zM2 7h1v2h-1zM5 8h5v1h-5zM0 9h2v1h-2zM5 9h1v1h-1zM5 10h6v1h-6zM10 11h1v1h-1zM1 10h1v3h-1zM8 12h2v1h-2z"/><path id="g98" d="M1 2h8v1h-8zM8 3h1v2h-1zM3 4h1v2h-1zM2 6h1v1h-1zM7 5h1v2h-1zM2 7h9v1h-9zM0 10h8v1h-8zM10 8h1v4h-1zM8 12h2v1h-2z"/><path id="g99" d="M1 2h1v1h-1zM7 2h1v2h-1zM2 3h1v2h-1zM4 4h7v1h-7zM2 6h1v2h-1zM4 5h1v3h-1zM7 5h1v3h-1zM10 5h1v3h-1zM0 8h2v1h-2zM4 8h7v1h-7zM4 9h1v1h-1zM10 9h1v1h-1zM1 9h1v3h-1zM7 9h1v4h-1z"/><path id="g100" d="M3 2h1v1h-1zM7 2h1v1h-1zM1 3h9v1h-9zM3 4h1v1h-1zM7 4h1v1h-1zM0 5h11v1h-11zM5 6h1v1h-1zM2 7h7v1h-7zM2 8h1v1h-1zM5 8h1v1h-1zM8 8h1v1h-1zM2 9h7v1h-7zM2 10h1v1h-1zM5 10h1v1h-1zM8 10h1v1h-1zM2 11h7v1h-7zM1 12h2v1h-2zM8 12h2v1h-2z"/><path id="g101" d="M8 2h1v2h-1zM2 2h1v3h-1zM5 4h6v1h-6zM0 5h6v1h-6zM10 5h1v1h-1zM5 6h1v1h-1zM8 5h1v2h-1zM5 7h5v1h-5zM2 6h1v3h-1zM4 8h2v1h-2zM2 9h2v1h-2zM7 8h1v2h-1zM9 8h1v2h-1zM0 10h3v1h-3zM5 9h1v2h-1zM8 10h1v1h-1zM4 11h1v1h-1zM7 11h1v1h-1zM9 11h1v1h-1zM3 12h1v1h-1zM5 12h2v1h-2zM10 12h1v1h-1z"/><path id="g102" d="M7 2h1v1h-1zM4 3h7v1h-7zM1 2h1v3h-1zM4 4h1v1h-1zM7 4h1v1h-1zM0 5h10v1h-10zM4 6h1v1h-1zM7 6h1v1h-1zM9 6h1v1h-1zM1 6h1v2h-1zM4 7h7v1h-7zM1 8h4v1h-4zM7 8h1v1h-1zM9 8h1v1h-1zM0 9h2v1h-2zM4 9h6v1h-6zM4 10h2v1h-2zM9 10h1v1h-1zM3 11h1v1h-1zM5 11h5v1h-5zM2 12h1v1h-1zM5 12h1v1h-1zM9 12h1v1h-1z"/><path id="g103" d="M2 2h9v1h-9zM6 3h1v1h-1zM4 4h5v1h-5zM2 3h1v3h-1zM6 5h1v1h-1zM10 3h1v3h-1zM2 6h9v1h-9zM4 8h5v1h-5zM2 7h1v3h-1zM4 9h1v1h-1zM8 9h1v1h-1zM4 10h5v1h-5zM1 10h1v2h-1zM10 7h1v5h-1zM0 12h1v1h-1zM9 12h2v1h-2z"/><path id="g104" d="M8 2h1v1h-1zM7 3h1v1h-1zM6 4h1v1h-1zM3 2h1v4h-1zM5 5h1v1h-1zM3 6h2v1h-2zM1 7h10v1h-10zM5 8h1v1h-1zM6 9h1v1h-1zM7 10h1v1h-1zM3 8h1v4h-1zM5 11h1v1h-1zM8 11h1v1h-1zM3 12h2v1h-2zM9 12h2v1h-2z"/><path id="g105" d="M2 2h7v1h-7zM7 3h1v1h-1zM6 4h1v1h-1zM5 5h1v2h-1zM0 7h11v1h-11zM3 11h1v1h-1zM5 8h1v4h-1zM4 12h1v1h-1z"/><path id="g106" d="M5 2h1v1h-1zM6 3h1v1h-1zM1 4h10v1h-10zM5 6h1v1h-1zM3 7h1v1h-1zM6 7h1v2h-1zM9 6h1v3h-1zM4 8h1v2h-1zM1 5h1v6h-1zM8 9h1v2h-1zM7 11h1v1h-1zM0 11h1v2h-1zM3 12h8v1h-8z"/><path id="g107" d="M4 2h4v1h-4zM3 3h1v1h-1zM7 3h1v1h-1zM2 4h8v1h-8zM1 5h1v1h-1zM9 5h1v1h-1zM3 6h7v1h-7zM9 7h1v1h-1zM2 8h8v1h-8zM5 9h1v1h-1zM9 9h1v1h-1zM6 10h1v1h-1zM1 10h1v2h-1zM3 9h1v3h-1zM8 11h1v1h-1zM10 10h1v2h-1zM0 12h1v1h-1zM4 12h5v1h-5z"/><path id="g108" d="M1 2h4v1h-4zM6 2h5v1h-5zM1 3h1v2h-1zM4 3h1v2h-1zM10 3h1v2h-1zM1 5h4v1h-4zM8 5h3v1h-3zM6 3h1v4h-1zM1 6h1v2h-1zM4 6h1v2h-1zM6 7h5v1h-5zM1 8h4v1h-4zM10 8h1v1h-1zM8 9h2v1h-2zM1 9h1v2h-1zM9 10h1v1h-1zM4 9h1v3h-1zM6 8h1v4h-1zM8 11h1v1h-1zM0 11h1v2h-1zM3 12h2v1h-2zM6 12h2v1h-2zM10 11h1v2h-1z"/><path id="g109" d="M3 3h9v1h-9zM3 4h2v1h-2zM10 4h2v1h-2zM3 5h9v1h-9zM3 6h2v2h-2zM10 6h2v2h-2zM3 8h9v1h-9zM3 9h2v1h-2zM10 9h2v1h-2zM2 11h2v1h-2zM5 10h2v2h-2zM8 10h2v3h-2zM11 11h2v2h-2zM3 12h4v2h-4zM8 13h4v1h-4zM5 14h2v1h-2zM8 14h2v1h-2zM0 15h15v1h-15z"/><path id="g110" d="M3 3h9v1h-9zM0 7h15v1h-15zM10 10h2v1h-2zM3 10h2v2h-2zM11 11h2v1h-2zM2 12h2v1h-2zM1 13h2v1h-2zM7 8h2v6h-2zM12 12h2v2h-2zM5 14h4v1h-4zM6 15h2v1h-2z"/><path id="g111" d="M1 2h2v1h-2zM5 3h2v1h-2zM8 2h2v2h-2zM11 3h2v1h-2zM2 3h2v2h-2zM6 4h6v1h-6zM8 5h2v1h-2zM0 6h2v1h-2zM3 6h10v1h-10zM1 7h6v1h-6zM5 8h2v1h-2zM11 7h2v2h-2zM5 9h8v1h-8zM2 8h2v3h-2zM5 10h2v1h-2zM11 10h2v1h-2zM0 11h3v1h-3zM5 11h8v1h-8zM11 12h2v2h-2zM9 14h4v1h-4zM1 12h2v4h-2zM5 12h2v4h-2zM10 15h2v1h-2z"/><path id="g112" d="M6 2h2v1h-2zM5 3h2v1h-2zM3 4h9v1h-9zM3 5h2v1h-2zM10 5h2v1h-2zM3 6h9v1h-9zM3 7h2v1h-2zM10 7h2v1h-2zM3 8h9v1h-9zM3 9h2v1h-2zM10 9h2v1h-2zM3 10h9v1h-9zM6 11h2v1h-2zM11 11h2v1h-2zM2 12h4v1h-4zM12 12h2v1h-2zM1 13h2v1h-2zM7 12h2v2h-2zM0 14h2v1h-2zM4 13h2v2h-2zM10 13h2v2h-2zM13 13h2v2h-2zM5 15h7v1h-7z"/><path id="g113" d="M3 2h1v2h-1zM7 2h1v2h-1zM1 4h9v1h-9zM3 5h1v3h-1zM7 5h1v3h-1zM0 8h11v1h-11zM3 10h1v1h-1zM7 10h1v1h-1zM2 11h1v1h-1zM8 11h1v1h-1zM1 12h1v1h-1zM9 12h1v1h-1z"/><path id="g114" d="M1 2h9v1h-9zM2 4h1v1h-1zM8 4h1v1h-1zM3 5h1v1h-1zM7 5h1v1h-1zM5 3h1v4h-1zM0 7h11v1h-11zM5 8h1v5h-1z"/><path id="g115" d="M5 2h1v1h-1zM4 3h1v1h-1zM3 4h1v1h-1zM7 4h1v1h-1zM2 5h1v1h-1zM8 5h1v1h-1zM1 6h9v1h-9zM9 7h1v1h-1zM2 8h7v1h-7zM2 9h1v3h-1zM8 9h1v3h-1zM2 12h7v1h-7z"/><path id="g116" d="M1 7h11v1h-11z"/><path id="g117" d="M5 2h5v1h-5zM2 2h1v2h-1zM8 3h1v1h-1zM4 4h1v1h-1zM7 4h1v1h-1zM1 4h1v2h-1zM3 5h1v1h-1zM6 5h1v1h-1zM8 5h1v1h-1zM0 6h3v1h-3zM5 6h1v1h-1zM9 6h1v1h-1zM2 7h1v1h-1zM4 7h1v1h-1zM10 7h1v1h-1zM1 8h1v1h-1zM5 8h5v1h-5zM0 9h4v1h-4zM2 11h2v1h-2zM7 9h1v3h-1zM0 12h2v1h-2zM4 12h7v1h-7z"/><path id="g118" d="M7 2h1v1h-1zM2 2h1v2h-1zM5 3h6v1h-6zM4 4h1v1h-1zM7 4h1v1h-1zM1 4h1v2h-1zM3 5h1v1h-1zM5 5h5v1h-5zM0 6h3v1h-3zM7 6h1v1h-1zM2 7h1v1h-1zM4 7h7v1h-7zM1 8h1v1h-1zM0 9h4v1h-4zM10 8h1v2h-1zM4 10h1v1h-1zM9 10h2v1h-2zM2 11h2v1h-2zM0 12h2v1h-2zM7 8h1v5h-1z"/><path id="g119" d="M5 2h1v1h-1zM1 3h10v1h-10zM1 4h1v1h-1zM4 4h1v1h-1zM7 4h1v1h-1zM1 5h9v1h-9zM4 6h1v1h-1zM7 6h1v1h-1zM4 7h4v1h-4zM3 9h6v1h-6zM1 6h1v5h-1zM4 10h1v1h-1zM7 10h1v1h-1zM5 11h2v1h-2zM0 11h1v2h-1zM2 12h3v1h-3zM7 12h3v1h-3z"/><path id="g120" d="M0 6h2v1h-2zM8 2h2v6h-2zM11 6h2v2h-2zM1 7h2v2h-2zM4 2h2v7h-2zM8 8h4v2h-4zM2 9h4v2h-4zM8 10h3v1h-3zM4 11h2v3h-2zM8 11h2v3h-2zM0 14h14v1h-14z"/><path id="g121" d="M4 2h2v2h-2zM4 4h8v1h-8zM3 5h3v1h-3zM9 5h2v1h-2zM2 6h2v1h-2zM5 6h2v1h-2zM8 6h2v1h-2zM6 7h3v1h-3zM5 8h2v1h-2zM8 8h3v1h-3zM3 9h5v1h-5zM10 9h3v1h-3zM0 10h4v1h-4zM6 10h2v1h-2zM12 10h3v1h-3zM3 11h9v1h-9zM5 12h2v2h-2zM10 12h2v2h-2zM4 14h2v1h-2zM8 14h4v1h-4zM2 15h3v1h-3zM9 15h2v1h-2z"/><path id="g122" d="M7 3h6v1h-6zM2 2h2v3h-2zM7 4h2v1h-2zM11 4h2v1h-2zM0 5h6v1h-6zM7 5h6v1h-6zM7 6h2v1h-2zM11 6h2v1h-2zM2 6h2v2h-2zM7 7h6v1h-6zM2 8h3v1h-3zM2 9h13v1h-13zM1 10h3v1h-3zM0 11h4v1h-4zM9 10h2v2h-2zM6 11h2v2h-2zM9 12h5v1h-5zM2 12h2v2h-2zM6 13h5v1h-5zM0 14h4v1h-4zM5 14h2v1h-2zM8 14h3v1h-3zM1 15h2v1h-2zM4 15h2v1h-2zM9 15h6v1h-6z"/><path id="g123" d="M2 2h7v1h-7zM2 3h1v1h-1zM8 3h1v1h-1zM2 4h7v1h-7zM2 5h1v1h-1zM8 5h1v1h-1zM2 6h7v1h-7zM1 8h1v1h-1zM9 8h1v2h-1zM2 9h1v2h-1zM8 10h1v1h-1zM4 7h1v5h-1zM6 7h1v5h-1zM0 12h11v1h-11z"/><path id="g124" d="M1 3h9v1h-9zM0 6h11v1h-11zM8 8h1v1h-1zM2 8h1v2h-1zM9 9h1v1h-1zM1 10h1v1h-1zM0 11h1v1h-1zM5 7h1v5h-1zM10 10h1v2h-1zM4 12h2v1h-2z"/><path id="g125" d="M9 4h1v1h-1zM1 2h1v4h-1zM6 2h1v4h-1zM8 5h1v1h-1zM1 6h4v1h-4zM6 6h2v1h-2zM1 7h1v4h-1zM3 10h2v1h-2zM1 11h2v1h-2zM6 7h1v5h-1zM10 10h1v2h-1zM1 12h1v1h-1zM7 12h4v1h-4z"/><path id="g126" d="M2 2h6v1h-6zM2 3h1v2h-1zM5 3h1v2h-1zM8 4h1v1h-1zM6 5h3v1h-3zM1 5h2v2h-2zM4 5h1v2h-1zM7 6h2v1h-2zM0 7h1v1h-1zM2 7h3v1h-3zM6 7h1v1h-1zM5 8h2v1h-2zM6 9h1v1h-1zM8 7h1v3h-1zM5 10h1v1h-1zM2 8h1v4h-1zM4 11h1v1h-1zM10 2h1v10h-1zM2 12h2v1h-2zM9 12h2v1h-2z"/><path id="g127" d="M1 3h13v1h-13zM4 4h1v5h-1zM10 4h1v5h-1zM0 9h15v1h-15zM4 10h1v4h-1zM3 14h1v2h-1zM2 16h1v1h-1zM1 17h1v1h-1zM10 10h1v8h-1z"/><path id="g128" d="M10 2h1v3h-1zM3 2h1v4h-1zM0 6h6v1h-6zM9 5h1v2h-1zM12 6h1v1h-1zM8 7h1v1h-1zM13 7h1v1h-1zM7 8h8v1h-8zM8 9h1v1h-1zM14 9h1v1h-1zM2 7h1v4h-1zM5 7h1v4h-1zM1 11h1v1h-1zM8 11h6v1h-6zM2 12h1v1h-1zM4 11h1v2h-1zM3 13h1v1h-1zM2 14h1v1h-1zM4 14h1v1h-1zM1 15h1v1h-1zM5 15h1v1h-1zM8 12h1v4h-1zM13 12h1v4h-1zM0 16h1v1h-1zM8 16h6v1h-6zM8 17h1v1h-1zM13 17h1v1h-1z"/><path id="g129" d="M0 2h6v1h-6zM9 3h1v1h-1zM8 4h1v1h-1zM5 3h1v3h-1zM7 5h1v1h-1zM5 6h3v1h-3zM8 7h1v1h-1zM5 7h1v2h-1zM9 8h1v1h-1zM6 9h1v2h-1zM7 11h1v1h-1zM10 10h1v2h-1zM8 12h3v1h-3z"/><path id="g130" d="M3 2h1v2h-1zM3 4h8v1h-8zM3 5h1v2h-1zM3 7h7v1h-7zM0 9h7v1h-7zM9 8h1v4h-1zM6 12h3v1h-3z"/><path id="g131" d="M5 2h2v1h-2zM6 3h2v1h-2zM1 4h11v1h-11zM1 5h2v2h-2zM5 6h2v1h-2zM1 7h4v1h-4zM6 7h2v1h-2zM4 8h4v1h-4zM9 6h2v3h-2zM4 9h2v1h-2zM1 8h2v3h-2zM8 9h2v2h-2zM7 11h2v1h-2zM0 11h2v2h-2zM3 12h9v1h-9z"/><path id="g132" d="M4 2h5v1h-5zM3 3h2v1h-2zM7 3h2v1h-2zM2 4h9v1h-9zM1 5h2v1h-2zM9 5h2v1h-2zM3 6h8v1h-8zM9 7h2v1h-2zM2 8h9v1h-9zM3 9h4v1h-4zM9 9h2v1h-2zM6 10h2v1h-2zM10 10h2v1h-2zM1 10h4v2h-4zM8 11h4v1h-4zM0 12h2v1h-2zM4 12h6v1h-6z"/><path id="g133" d="M1 2h11v1h-11zM1 3h2v2h-2zM4 3h4v2h-4zM10 3h2v2h-2zM1 5h11v1h-11zM4 6h4v1h-4zM1 6h2v2h-2zM4 7h8v1h-8zM1 8h7v1h-7zM10 8h2v1h-2zM4 9h7v1h-7zM1 9h2v2h-2zM4 10h4v1h-4zM9 10h2v1h-2zM4 11h8v1h-8zM0 11h2v2h-2zM3 12h6v1h-6zM10 12h2v1h-2z"/><path id="g134" d="M3 2h2v1h-2zM3 3h7v1h-7zM2 4h3v1h-3zM7 4h2v1h-2zM1 5h2v1h-2zM4 5h4v1h-4zM5 6h2v1h-2zM3 7h6v1h-6zM0 8h4v1h-4zM5 8h2v1h-2zM8 8h4v1h-4zM2 9h8v1h-8zM4 10h2v1h-2zM3 11h2v1h-2zM8 10h2v2h-2zM1 12h3v1h-3zM6 12h3v1h-3z"/><path id="g135" d="M7 2h1v1h-1zM6 3h1v1h-1zM0 4h3v1h-3zM4 4h7v1h-7zM6 6h3v1h-3zM0 5h1v4h-1zM2 5h1v4h-1zM6 7h1v2h-1zM8 7h1v2h-1zM0 9h3v1h-3zM6 9h3v1h-3zM10 5h1v7h-1zM4 5h1v8h-1zM9 12h2v1h-2z"/><path id="g136" d="M5 2h6v1h-6zM0 3h5v1h-5zM7 3h1v1h-1zM5 4h6v1h-6zM2 4h1v5h-1zM5 5h1v4h-1zM2 9h4v1h-4zM7 6h1v4h-1zM10 5h1v5h-1zM0 10h2v1h-2zM7 10h2v1h-2zM6 11h1v1h-1zM9 11h1v1h-1zM4 12h2v1h-2zM10 12h1v1h-1z"/><path id="g137" d="M2 2h7v1h-7zM2 3h1v2h-1zM8 3h1v2h-1zM2 5h7v1h-7zM2 6h1v2h-1zM8 6h1v2h-1zM2 8h7v1h-7zM2 9h1v2h-1zM8 9h1v2h-1zM2 11h7v1h-7zM2 12h1v1h-1zM8 12h1v1h-1z"/><path id="g138" d="M3 2h2v1h-2zM0 3h3v1h-3zM6 2h1v2h-1zM2 4h1v1h-1zM5 4h6v1h-6zM0 5h5v1h-5zM10 5h1v1h-1zM2 6h1v1h-1zM1 7h3v1h-3zM1 8h2v1h-2zM5 7h1v2h-1zM9 7h1v2h-1zM0 9h1v1h-1zM2 9h1v1h-1zM4 9h1v1h-1zM2 10h2v1h-2zM10 9h1v2h-1zM7 5h1v7h-1zM2 11h1v2h-1zM6 12h2v1h-2z"/><path id="g139" d="M9 4h1v1h-1zM8 5h1v1h-1zM2 4h1v3h-1zM7 6h1v1h-1zM1 7h1v1h-1zM5 2h1v6h-1zM4 8h1v2h-1zM6 8h1v2h-1zM3 10h1v1h-1zM7 10h1v1h-1zM2 11h1v1h-1zM8 11h1v1h-1zM0 12h2v1h-2zM9 12h2v1h-2z"/><path id="g140" d="M5 2h1v1h-1zM0 3h11v1h-11zM0 4h1v1h-1zM10 4h1v1h-1zM2 6h1v2h-1zM8 6h1v2h-1zM1 8h1v1h-1zM5 5h1v4h-1zM7 8h1v1h-1zM4 9h1v1h-1zM6 9h1v1h-1zM3 10h1v1h-1zM7 10h1v1h-1zM2 11h1v1h-1zM8 11h1v1h-1zM0 12h2v1h-2zM9 12h2v1h-2z"/><path id="g141" d="M4 2h1v2h-1zM0 4h11v1h-11zM3 5h1v2h-1zM6 5h1v2h-1zM2 7h8v1h-8zM1 8h1v1h-1zM0 9h1v1h-1zM9 8h1v3h-1zM3 8h1v4h-1zM8 11h2v1h-2zM6 8h1v5h-1z"/><path id="g142" d="M2 2h1v1h-1zM7 2h1v1h-1zM2 3h4v1h-4zM7 3h4v1h-4zM1 4h1v1h-1zM3 4h1v1h-1zM6 4h1v1h-1zM8 4h1v1h-1zM0 5h1v1h-1zM5 5h1v1h-1zM9 5h1v1h-1zM3 6h1v1h-1zM8 6h1v1h-1zM2 7h1v1h-1zM4 7h7v1h-7zM1 8h2v1h-2zM0 9h1v1h-1zM5 9h1v1h-1zM6 10h1v1h-1zM8 8h1v4h-1zM2 9h1v4h-1zM7 12h2v1h-2z"/><path id="g143" d="M2 2h7v1h-7zM2 3h1v1h-1zM8 3h1v1h-1zM2 4h7v1h-7zM0 6h11v1h-11zM4 7h1v1h-1zM3 8h6v1h-6zM5 11h1v1h-1zM8 9h1v3h-1zM6 12h2v1h-2z"/><path id="g144" d="M4 2h3v1h-3zM8 2h3v1h-3zM2 2h1v2h-1zM4 3h1v1h-1zM0 4h5v1h-5zM2 5h1v1h-1zM4 5h1v1h-1zM6 3h1v3h-1zM8 3h1v3h-1zM10 3h1v3h-1zM2 6h9v1h-9zM2 7h1v1h-1zM1 8h2v1h-2zM0 9h1v1h-1zM2 9h1v3h-1zM4 7h1v5h-1zM6 7h1v5h-1zM8 7h1v5h-1zM10 7h1v5h-1zM2 12h2v1h-2zM5 12h1v1h-1zM7 12h1v1h-1zM9 12h2v1h-2z"/><path id="g145" d="M6 2h1v1h-1zM2 2h1v2h-1zM6 3h4v1h-4zM0 4h4v1h-4zM5 4h1v1h-1zM9 4h1v1h-1zM4 5h1v1h-1zM6 5h1v1h-1zM8 5h1v1h-1zM2 5h1v2h-1zM7 6h1v1h-1zM1 7h3v1h-3zM6 7h1v1h-1zM8 7h1v1h-1zM1 8h2v1h-2zM4 8h2v1h-2zM9 8h2v1h-2zM0 9h1v1h-1zM5 9h5v1h-5zM5 10h1v2h-1zM9 10h1v2h-1zM2 9h1v4h-1zM5 12h5v1h-5z"/><path id="g146" d="M3 2h1v1h-1zM6 2h4v1h-4zM1 3h4v1h-4zM1 4h1v1h-1zM9 3h1v2h-1zM1 5h2v1h-2zM4 4h1v2h-1zM6 3h1v3h-1zM9 5h2v1h-2zM1 6h1v1h-1zM3 6h3v1h-3zM0 7h5v1h-5zM6 7h5v1h-5zM1 8h1v1h-1zM6 8h1v1h-1zM10 8h1v1h-1zM1 9h2v1h-2zM4 8h1v2h-1zM7 9h1v1h-1zM9 9h1v1h-1zM3 10h2v1h-2zM8 10h1v1h-1zM1 10h1v2h-1zM4 11h1v1h-1zM7 11h1v1h-1zM9 11h1v1h-1zM0 12h1v1h-1zM3 12h2v1h-2zM6 12h1v1h-1zM10 12h1v1h-1z"/><path id="g147" d="M1 2h6v1h-6zM2 3h1v2h-1zM4 3h1v2h-1zM7 3h1v2h-1zM0 5h8v1h-8zM7 6h1v1h-1zM2 6h1v2h-1zM4 6h1v2h-1zM9 2h1v6h-1zM1 8h1v1h-1zM4 8h2v1h-2zM8 8h2v1h-2zM5 9h1v1h-1zM2 10h7v1h-7zM5 11h1v1h-1zM0 12h11v1h-11z"/><path id="g148" d="M1 2h1v1h-1zM6 2h1v1h-1zM1 3h4v1h-4zM6 3h5v1h-5zM0 4h1v1h-1zM3 4h1v1h-1zM5 4h1v1h-1zM8 4h1v1h-1zM2 5h1v1h-1zM5 5h5v1h-5zM3 6h1v1h-1zM4 7h4v1h-4zM4 8h1v1h-1zM7 8h1v1h-1zM4 9h4v1h-4zM4 10h1v1h-1zM7 10h1v1h-1zM4 11h4v1h-4zM9 6h1v6h-1zM1 6h1v7h-1zM8 12h2v1h-2z"/><path id="g149" d="M3 2h1v1h-1zM7 2h1v1h-1zM4 3h1v1h-1zM6 3h1v1h-1zM1 4h9v1h-9zM1 5h1v1h-1zM5 5h1v1h-1zM9 5h1v1h-1zM1 6h9v1h-9zM1 7h1v1h-1zM5 7h1v1h-1zM9 7h1v1h-1zM1 8h9v1h-9zM5 9h1v1h-1zM0 10h11v1h-11zM5 11h1v2h-1z"/><path id="g150" d="M5 2h1v1h-1zM0 3h11v1h-11zM0 4h1v1h-1zM4 4h1v1h-1zM10 4h1v1h-1zM0 5h11v1h-11zM3 6h1v1h-1zM6 6h1v1h-1zM4 7h4v1h-4zM0 8h5v1h-5zM8 8h3v1h-3zM5 9h1v1h-1zM0 10h11v1h-11zM3 11h1v1h-1zM7 11h1v1h-1zM0 12h3v1h-3zM5 11h1v2h-1zM8 12h3v1h-3z"/><path id="g151" d="M3 2h1v1h-1zM7 2h1v1h-1zM1 3h9v1h-9zM3 4h1v1h-1zM7 4h1v1h-1zM3 5h5v1h-5zM3 6h1v1h-1zM7 6h1v1h-1zM3 7h5v1h-5zM3 8h1v1h-1zM7 8h1v1h-1zM0 9h11v1h-11zM3 10h1v1h-1zM7 10h1v1h-1zM2 11h1v1h-1zM8 11h1v1h-1zM0 12h2v1h-2zM9 12h1v1h-1z"/><path id="g152" d="M3 2h1v2h-1zM7 2h1v3h-1zM9 4h1v1h-1zM2 4h1v2h-1zM5 4h1v2h-1zM7 5h3v1h-3zM1 6h2v1h-2zM4 6h4v1h-4zM0 7h1v1h-1zM7 7h1v2h-1zM9 6h1v3h-1zM7 9h2v1h-2zM7 10h1v1h-1zM5 7h1v5h-1zM10 10h1v2h-1zM2 7h1v6h-1zM6 12h5v1h-5z"/><path id="g153" d="M1 2h1v1h-1zM6 2h1v1h-1zM1 3h4v1h-4zM6 3h5v1h-5zM0 4h1v1h-1zM3 4h1v1h-1zM5 4h1v1h-1zM8 4h1v1h-1zM4 5h1v1h-1zM6 5h1v1h-1zM0 6h11v1h-11zM1 7h1v1h-1zM4 7h1v1h-1zM1 8h4v1h-4zM1 9h1v1h-1zM4 9h1v1h-1zM1 10h4v1h-4zM7 8h1v3h-1zM4 11h1v1h-1zM9 7h1v5h-1zM1 11h1v2h-1zM3 12h2v1h-2zM7 12h3v1h-3z"/><path id="g154" d="M5 2h5v1h-5zM2 2h1v2h-1zM0 4h5v1h-5zM4 5h7v1h-7zM2 5h1v2h-1zM1 7h3v1h-3zM1 8h2v1h-2zM9 8h1v1h-1zM0 9h1v1h-1zM5 8h1v2h-1zM4 10h1v1h-1zM10 9h1v2h-1zM7 6h1v6h-1zM2 9h1v4h-1zM6 12h2v1h-2z"/><path id="g155" d="M1 2h1v1h-1zM6 2h1v1h-1zM1 3h4v1h-4zM6 3h5v1h-5zM1 4h1v1h-1zM3 4h1v1h-1zM8 4h1v1h-1zM0 5h1v1h-1zM5 4h1v2h-1zM9 5h1v1h-1zM4 6h1v1h-1zM6 6h1v1h-1zM2 7h2v1h-2zM7 7h2v1h-2zM0 8h2v1h-2zM3 8h5v1h-5zM9 8h2v1h-2zM8 9h1v1h-1zM2 9h1v2h-1zM5 9h1v2h-1zM3 11h1v1h-1zM7 10h1v2h-1zM1 12h10v1h-10z"/><path id="g156" d="M7 2h1v1h-1zM0 3h11v1h-11zM7 4h1v1h-1zM0 4h1v2h-1zM3 4h1v2h-1zM5 5h5v1h-5zM0 6h4v1h-4zM7 6h1v1h-1zM3 7h8v1h-8zM0 7h1v2h-1zM3 8h1v1h-1zM5 8h1v1h-1zM0 9h4v1h-4zM5 9h3v1h-3zM9 8h1v2h-1zM0 10h1v1h-1zM3 10h1v1h-1zM7 10h3v1h-3zM9 11h1v1h-1zM5 10h1v3h-1zM8 12h2v1h-2z"/><path id="g157" d="M0 2h4v1h-4zM6 2h5v1h-5zM3 3h1v1h-1zM0 3h1v2h-1zM2 4h1v1h-1zM6 3h1v2h-1zM10 3h1v2h-1zM0 5h2v1h-2zM6 5h5v1h-5zM2 6h1v1h-1zM6 6h1v2h-1zM10 6h1v2h-1zM0 6h1v3h-1zM6 8h5v1h-5zM0 9h2v1h-2zM3 7h1v3h-1zM2 10h1v1h-1zM6 9h1v2h-1zM5 11h1v1h-1zM10 9h1v3h-1zM0 10h1v3h-1zM4 12h1v1h-1zM8 12h3v1h-3z"/><path id="g158" d="M0 2h4v1h-4zM6 2h1v1h-1zM3 3h8v1h-8zM0 3h1v2h-1zM2 4h1v1h-1zM0 5h2v1h-2zM5 4h1v2h-1zM7 5h1v1h-1zM2 6h1v1h-1zM4 6h6v1h-6zM0 6h1v3h-1zM3 7h1v2h-1zM7 7h1v2h-1zM0 9h2v1h-2zM3 9h8v1h-8zM2 10h1v1h-1zM0 10h1v3h-1zM7 10h1v3h-1z"/><path id="g159" d="M0 2h11v1h-11zM5 3h1v2h-1zM1 5h9v1h-9zM3 7h1v1h-1zM5 6h1v2h-1zM7 7h1v1h-1zM9 6h1v2h-1zM1 6h1v3h-1zM4 8h2v1h-2zM8 8h2v1h-2zM1 9h2v1h-2zM5 9h2v1h-2zM3 10h1v1h-1zM7 10h1v1h-1zM9 9h1v3h-1zM1 10h1v3h-1zM5 10h1v3h-1zM8 12h2v1h-2z"/><path id="g160" d="M2 2h1v1h-1zM8 2h1v1h-1zM3 3h1v1h-1zM7 3h1v1h-1zM1 4h9v1h-9zM3 5h1v3h-1zM7 5h1v3h-1zM0 8h11v1h-11zM3 9h1v2h-1zM2 11h1v1h-1zM1 12h1v1h-1zM7 9h1v4h-1z"/><path id="g161" d="M4 2h1v1h-1zM0 3h11v1h-11zM3 4h1v1h-1zM3 5h6v1h-6zM2 6h2v1h-2zM8 6h1v1h-1zM1 7h1v1h-1zM3 7h6v1h-6zM0 8h1v1h-1zM3 8h1v1h-1zM8 8h1v1h-1zM3 9h6v1h-6zM8 10h1v2h-1zM3 10h1v3h-1zM7 12h2v1h-2z"/><path id="g162" d="M1 2h1v1h-1zM2 3h1v1h-1zM10 4h1v1h-1zM4 5h2v1h-2zM7 2h1v4h-1zM9 5h1v1h-1zM2 5h1v2h-1zM1 7h1v1h-1zM5 6h1v2h-1zM7 6h2v2h-2zM0 8h2v1h-2zM4 8h1v2h-1zM9 8h1v2h-1zM3 10h1v1h-1zM10 10h1v1h-1zM1 9h1v3h-1zM7 8h1v4h-1zM5 12h3v1h-3z"/><path id="g163" d="M1 2h9v1h-9zM5 3h1v1h-1zM0 4h11v1h-11zM0 5h1v1h-1zM3 5h1v1h-1zM5 5h1v1h-1zM7 5h1v1h-1zM10 5h1v1h-1zM2 6h8v1h-8zM1 7h1v1h-1zM0 8h1v1h-1zM2 8h5v1h-5zM2 9h1v1h-1zM6 9h1v1h-1zM9 7h1v3h-1zM2 10h5v1h-5zM8 10h1v1h-1zM2 11h1v1h-1zM10 10h1v2h-1zM3 12h8v1h-8z"/><path id="g164" d="M5 2h1v1h-1zM1 3h9v1h-9zM2 5h1v1h-1zM8 5h1v1h-1zM3 6h1v1h-1zM5 4h1v3h-1zM7 6h1v1h-1zM0 7h11v1h-11zM5 8h1v1h-1zM4 9h1v1h-1zM6 9h1v1h-1zM3 10h1v1h-1zM7 10h1v1h-1zM2 11h1v1h-1zM8 11h1v1h-1zM0 12h2v1h-2zM9 12h2v1h-2z"/><path id="g165" d="M1 2h9v1h-9zM5 3h1v1h-1zM0 4h11v1h-11zM0 5h1v2h-1zM2 6h2v1h-2zM5 5h1v2h-1zM7 6h2v1h-2zM10 5h1v2h-1zM1 8h9v1h-9zM9 9h1v1h-1zM2 10h8v1h-8zM9 11h1v1h-1zM1 12h9v1h-9z"/><path id="g166" d="M8 5h1v1h-1zM2 5h1v2h-1zM9 6h1v2h-1zM1 7h1v2h-1zM0 9h1v1h-1zM10 8h1v2h-1zM3 11h1v1h-1zM5 2h1v10h-1zM4 12h1v1h-1z"/><path id="g167" d="M5 2h1v2h-1zM1 4h9v1h-9zM1 5h1v3h-1zM5 5h1v3h-1zM9 5h1v3h-1zM1 8h9v1h-9zM1 9h1v1h-1zM9 9h1v1h-1zM5 9h1v4h-1z"/><path id="g168" d="M5 2h1v3h-1zM0 5h11v1h-11zM5 6h1v2h-1zM4 8h1v2h-1zM6 8h1v2h-1zM3 10h1v1h-1zM7 10h1v1h-1zM2 11h1v1h-1zM8 11h1v1h-1zM0 12h2v1h-2zM9 12h2v1h-2z"/><path id="g169" d="M2 2h7v1h-7zM2 3h1v1h-1zM8 3h1v1h-1zM2 4h7v1h-7zM2 5h1v1h-1zM8 5h1v1h-1zM1 6h9v1h-9zM3 7h1v1h-1zM7 7h1v1h-1zM0 8h11v1h-11zM1 9h1v1h-1zM3 9h1v1h-1zM5 9h1v1h-1zM7 9h1v1h-1zM9 9h1v1h-1zM0 10h1v1h-1zM4 10h3v1h-3zM10 10h1v1h-1zM3 11h1v1h-1zM5 11h1v1h-1zM7 11h1v1h-1zM1 12h2v1h-2zM4 12h2v1h-2zM8 12h2v1h-2z"/><path id="g170" d="M0 3h5v1h-5zM7 2h1v2h-1zM4 4h1v1h-1zM6 4h5v1h-5zM4 5h2v1h-2zM1 6h4v1h-4zM6 6h1v3h-1zM9 5h1v4h-1zM1 7h1v4h-1zM3 10h1v1h-1zM7 9h2v2h-2zM1 11h2v1h-2zM6 11h1v1h-1zM9 11h1v1h-1zM1 12h1v1h-1zM4 12h2v1h-2zM10 12h1v1h-1z"/><path id="g171" d="M0 2h5v1h-5zM7 2h1v1h-1zM0 3h1v1h-1zM2 3h1v1h-1zM4 3h1v1h-1zM7 3h2v1h-2zM0 4h5v1h-5zM7 4h1v1h-1zM9 4h1v1h-1zM0 5h1v1h-1zM2 5h1v1h-1zM4 5h7v1h-7zM0 6h5v1h-5zM2 7h1v1h-1zM0 8h5v1h-5zM7 6h1v3h-1zM2 9h1v1h-1zM0 10h5v1h-5zM6 9h1v2h-1zM8 9h1v2h-1zM1 11h1v1h-1zM3 11h1v1h-1zM5 11h1v1h-1zM9 11h1v1h-1zM0 12h1v1h-1zM2 12h1v1h-1zM4 12h1v1h-1zM10 12h1v1h-1z"/><path id="g172" d="M1 2h1v1h-1zM2 3h1v1h-1zM0 6h3v1h-3zM7 2h1v6h-1zM2 7h1v3h-1zM4 9h1v1h-1zM6 8h1v2h-1zM8 8h1v2h-1zM2 10h2v1h-2zM5 10h1v1h-1zM2 11h1v1h-1zM4 11h1v1h-1zM9 10h1v2h-1zM3 12h1v1h-1zM10 12h1v1h-1z"/><path id="g173" d="M1 2h9v1h-9zM1 3h1v1h-1zM9 3h1v1h-1zM1 4h9v1h-9zM9 5h1v1h-1zM3 6h6v1h-6zM6 7h1v1h-1zM3 8h7v1h-7zM1 5h1v5h-1zM3 9h1v1h-1zM6 9h1v1h-1zM9 9h1v1h-1zM2 10h9v1h-9zM6 11h1v1h-1zM10 11h1v1h-1zM0 10h1v3h-1zM2 11h1v2h-1zM4 12h4v1h-4zM9 12h2v1h-2z"/><path id="g174" d="M2 2h1v2h-1zM2 4h2v1h-2zM5 3h1v2h-1zM7 2h1v3h-1zM4 5h7v1h-7zM2 5h1v2h-1zM4 6h1v1h-1zM0 4h1v4h-1zM2 7h2v1h-2zM7 6h1v2h-1zM5 8h5v1h-5zM7 9h1v3h-1zM2 8h1v5h-1zM4 12h7v1h-7z"/><path id="g175" d="M4 2h1v2h-1zM7 2h1v2h-1zM1 4h10v1h-10zM1 5h1v3h-1zM4 5h1v3h-1zM7 5h1v3h-1zM10 5h1v3h-1zM1 8h10v1h-10zM1 9h1v2h-1zM4 9h1v2h-1zM7 9h1v2h-1zM10 9h1v2h-1zM1 11h10v1h-10zM1 12h1v1h-1zM10 12h1v1h-1z"/><path id="g176" d="M1 2h1v1h-1zM5 2h5v1h-5zM2 3h1v1h-1zM7 3h1v1h-1zM2 4h9v1h-9zM5 5h1v1h-1zM7 5h1v1h-1zM9 5h1v1h-1zM0 6h3v1h-3zM4 6h5v1h-5zM10 6h1v1h-1zM2 7h2v1h-2zM8 7h1v1h-1zM6 7h1v2h-1zM8 8h2v1h-2zM5 9h1v1h-1zM2 8h1v3h-1zM4 10h1v1h-1zM7 10h1v1h-1zM9 9h1v2h-1zM1 11h1v1h-1zM3 11h1v1h-1zM8 11h1v1h-1zM0 12h1v1h-1zM4 12h7v1h-7z"/><path id="g177" d="M6 2h5v1h-5zM0 3h4v1h-4zM6 3h1v2h-1zM10 3h1v2h-1zM0 4h1v2h-1zM3 4h1v2h-1zM6 5h5v1h-5zM0 6h4v1h-4zM6 6h1v2h-1zM10 6h1v2h-1zM0 7h1v2h-1zM3 7h1v2h-1zM6 8h5v1h-5zM0 9h4v1h-4zM6 9h1v1h-1zM5 10h1v1h-1zM4 11h1v1h-1zM8 11h1v1h-1zM10 9h1v3h-1zM2 12h2v1h-2zM9 12h1v1h-1z"/><path id="g178" d="M1 2h1v1h-1zM8 2h1v2h-1zM2 3h1v2h-1zM4 4h7v1h-7zM0 6h3v1h-3zM5 6h1v1h-1zM6 7h1v1h-1zM8 5h1v5h-1zM2 7h1v4h-1zM7 10h2v1h-2zM1 11h1v1h-1zM3 11h1v1h-1zM0 12h1v1h-1zM4 12h7v1h-7z"/><path id="g179" d="M1 2h1v1h-1zM7 2h4v1h-4zM2 3h1v1h-1zM7 3h1v1h-1zM4 4h7v1h-7zM0 5h1v1h-1zM4 5h1v1h-1zM7 5h1v1h-1zM10 5h1v1h-1zM1 6h1v1h-1zM4 6h6v1h-6zM7 7h1v1h-1zM10 7h1v1h-1zM2 7h1v2h-1zM7 8h4v1h-4zM0 9h2v1h-2zM6 9h2v1h-2zM9 9h1v1h-1zM4 7h1v4h-1zM6 10h1v1h-1zM8 10h1v1h-1zM10 10h1v1h-1zM1 10h1v2h-1zM3 11h1v1h-1zM5 11h2v1h-2zM9 11h1v1h-1zM1 12h2v1h-2zM4 12h1v1h-1zM7 12h3v1h-3z"/><path id="g180" d="M6 2h1v1h-1zM0 3h3v1h-3zM4 3h6v1h-6zM2 4h1v1h-1zM6 4h1v1h-1zM9 4h1v1h-1zM1 5h1v1h-1zM3 5h8v1h-8zM0 6h3v1h-3zM6 6h1v1h-1zM9 6h1v1h-1zM4 7h6v1h-6zM0 8h1v1h-1zM2 7h1v2h-1zM6 8h1v1h-1zM1 9h2v1h-2zM4 9h7v1h-7zM2 10h1v1h-1zM1 11h1v1h-1zM3 11h1v1h-1zM6 10h1v2h-1zM0 12h1v1h-1zM4 12h7v1h-7z"/><path id="g181" d="M4 2h1v1h-1zM5 3h1v1h-1zM0 4h11v1h-11zM4 5h1v2h-1zM4 7h5v1h-5zM3 8h1v2h-1zM2 10h1v1h-1zM1 11h1v1h-1zM8 8h1v4h-1zM0 12h1v1h-1zM5 12h3v1h-3z"/><path id="g182" d="M2 2h1v2h-1zM5 3h6v1h-6zM0 4h5v1h-5zM2 5h1v2h-1zM4 6h1v1h-1zM2 7h2v1h-2zM1 8h2v1h-2zM0 9h1v1h-1zM2 9h1v3h-1zM8 4h1v8h-1zM0 12h3v1h-3zM6 12h3v1h-3z"/><path id="g183" d="M1 2h9v1h-9zM3 3h1v4h-1zM7 3h1v4h-1zM0 7h11v1h-11zM3 8h1v1h-1zM2 9h1v2h-1zM1 11h1v1h-1zM0 12h1v1h-1zM7 8h1v5h-1z"/><path id="g184" d="M4 2h1v1h-1zM0 3h11v1h-11zM3 4h1v1h-1zM4 5h6v1h-6zM2 5h1v2h-1zM8 6h1v1h-1zM1 7h2v1h-2zM7 7h1v1h-1zM0 8h1v1h-1zM2 8h9v1h-9zM7 9h1v3h-1zM2 9h1v4h-1zM5 12h3v1h-3z"/><path id="g185" d="M3 2h7v1h-7zM3 3h1v2h-1zM9 3h1v2h-1zM3 5h7v1h-7zM3 6h1v1h-1zM9 6h1v1h-1zM6 6h1v2h-1zM2 8h9v1h-9zM5 9h1v1h-1zM4 10h1v1h-1zM3 11h1v1h-1zM10 9h1v3h-1zM1 12h2v1h-2zM7 12h3v1h-3z"/><path id="g186" d="M2 2h1v2h-1zM0 4h6v1h-6zM7 4h4v1h-4zM2 5h1v5h-1zM7 5h1v6h-1zM10 5h1v6h-1zM1 10h1v2h-1zM3 11h1v1h-1zM5 5h1v7h-1zM7 11h4v1h-4zM0 12h1v1h-1zM4 12h1v1h-1zM7 12h1v1h-1zM10 12h1v1h-1z"/><path id="g187" d="M1 2h1v1h-1zM7 2h1v1h-1zM2 3h1v1h-1zM4 3h7v1h-7zM7 4h1v1h-1zM0 5h1v1h-1zM5 5h5v1h-5zM1 6h1v1h-1zM3 5h1v2h-1zM7 6h1v1h-1zM4 7h7v1h-7zM2 7h1v2h-1zM5 8h1v1h-1zM0 9h2v1h-2zM5 9h3v1h-3zM9 8h1v2h-1zM7 10h3v1h-3zM9 11h1v1h-1zM1 10h1v3h-1zM5 10h1v3h-1zM8 12h2v1h-2z"/><path id="g188" d="M5 2h1v1h-1zM1 3h10v1h-10zM1 4h1v1h-1zM10 4h1v1h-1zM0 5h1v1h-1zM4 5h1v1h-1zM7 5h1v1h-1zM3 6h1v1h-1zM8 6h1v1h-1zM1 7h2v1h-2zM9 7h1v1h-1zM3 8h6v1h-6zM5 9h1v3h-1zM1 12h10v1h-10z"/><path id="g189" d="M4 2h1v1h-1zM3 3h1v1h-1zM7 3h1v1h-1zM2 4h7v1h-7zM4 5h1v1h-1zM0 6h11v1h-11zM2 7h1v1h-1zM5 7h1v1h-1zM8 7h1v1h-1zM0 8h2v1h-2zM3 8h2v1h-2zM9 8h2v1h-2zM5 9h2v1h-2zM3 10h2v1h-2zM8 10h1v1h-1zM6 11h2v1h-2zM2 12h4v1h-4z"/><path id="g190" d="M2 2h1v2h-1zM7 2h1v2h-1zM4 4h7v1h-7zM1 4h1v2h-1zM3 5h1v1h-1zM7 5h1v1h-1zM0 6h3v1h-3zM5 6h5v1h-5zM2 7h1v1h-1zM1 8h1v1h-1zM5 8h5v1h-5zM0 9h4v1h-4zM5 9h1v1h-1zM4 10h2v1h-2zM9 9h1v2h-1zM2 11h2v1h-2zM5 11h5v1h-5zM0 12h2v1h-2zM5 12h1v1h-1zM9 12h1v1h-1z"/><path id="g191" d="M2 2h1v2h-1zM6 2h1v2h-1zM0 4h5v1h-5zM6 4h5v1h-5zM5 5h1v1h-1zM2 5h1v2h-1zM1 7h3v1h-3zM6 6h1v2h-1zM1 8h2v1h-2zM4 8h2v1h-2zM8 8h1v1h-1zM0 9h1v1h-1zM5 9h4v1h-4zM8 10h1v1h-1zM10 5h1v7h-1zM2 9h1v4h-1zM8 12h2v1h-2z"/><path id="g192" d="M0 2h3v1h-3zM4 2h3v1h-3zM0 3h1v3h-1zM2 3h1v3h-1zM4 3h1v3h-1zM6 3h1v3h-1zM8 3h1v3h-1zM0 6h9v1h-9zM8 7h1v3h-1zM2 7h1v5h-1zM4 7h1v5h-1zM6 7h1v5h-1zM10 2h1v10h-1zM0 7h1v6h-1zM2 12h2v1h-2zM5 12h2v1h-2zM8 12h3v1h-3z"/><path id="g193" d="M0 2h4v1h-4zM7 2h1v1h-1zM3 3h1v1h-1zM6 3h1v1h-1zM8 3h1v1h-1zM0 3h1v2h-1zM2 4h1v1h-1zM5 4h1v1h-1zM9 4h1v1h-1zM0 5h2v1h-2zM4 5h1v1h-1zM6 5h3v1h-3zM10 5h1v1h-1zM2 6h1v1h-1zM7 6h1v1h-1zM3 7h8v1h-8zM0 6h1v3h-1zM3 8h1v1h-1zM0 9h3v1h-3zM5 9h1v1h-1zM9 9h1v1h-1zM4 10h1v1h-1zM3 11h1v1h-1zM7 8h1v4h-1zM10 10h1v2h-1zM0 10h1v3h-1zM6 12h2v1h-2z"/><path id="g194" d="M6 2h1v1h-1zM1 3h10v1h-10zM1 4h1v1h-1zM3 4h1v1h-1zM10 4h1v1h-1zM0 5h1v1h-1zM4 5h1v1h-1zM9 5h1v1h-1zM2 6h1v1h-1zM3 7h1v1h-1zM6 5h1v3h-1zM1 8h10v1h-10zM6 9h1v1h-1zM5 10h1v1h-1zM7 10h1v1h-1zM4 11h1v1h-1zM8 11h1v1h-1zM1 12h3v1h-3zM9 12h2v1h-2z"/><path id="g195" d="M2 2h1v2h-1zM6 2h1v2h-1zM3 4h7v1h-7zM1 4h1v2h-1zM6 5h1v1h-1zM0 6h2v1h-2zM5 6h3v1h-3zM4 7h1v1h-1zM8 7h1v1h-1zM1 7h1v2h-1zM3 8h1v1h-1zM9 8h1v1h-1zM1 9h2v1h-2zM6 7h1v3h-1zM10 9h1v1h-1zM4 10h5v1h-5zM1 10h1v3h-1zM6 11h1v2h-1z"/><path id="g196" d="M0 2h11v1h-11zM2 4h7v1h-7zM2 5h1v2h-1zM5 5h1v2h-1zM8 5h1v2h-1zM2 7h7v1h-7zM2 8h1v2h-1zM5 8h1v2h-1zM8 8h1v2h-1zM2 10h7v1h-7zM0 5h1v7h-1zM10 5h1v7h-1zM0 12h11v1h-11z"/><path id="g197" d="M2 3h1v2h-1zM6 2h1v3h-1zM2 5h9v1h-9zM1 6h1v1h-1zM0 7h1v1h-1zM6 6h1v2h-1zM3 8h7v1h-7zM6 9h1v3h-1zM1 12h10v1h-10z"/><path id="g198" d="M8 2h1v1h-1zM6 2h1v2h-1zM9 3h1v1h-1zM1 4h10v1h-10zM1 5h1v2h-1zM1 7h4v1h-4zM9 7h1v2h-1zM6 5h1v5h-1zM8 9h1v1h-1zM4 8h1v3h-1zM7 10h1v1h-1zM1 8h1v4h-1zM3 11h1v1h-1zM6 11h1v1h-1zM8 11h1v1h-1zM10 10h1v2h-1zM0 12h1v1h-1zM5 12h1v1h-1zM9 12h2v1h-2z"/><path id="g199" d="M8 2h3v1h-3zM2 2h1v2h-1zM4 3h4v1h-4zM0 4h4v1h-4zM5 4h1v1h-1zM7 4h1v1h-1zM9 4h1v1h-1zM4 5h7v1h-7zM2 5h1v2h-1zM5 6h1v1h-1zM9 6h1v1h-1zM2 7h3v1h-3zM7 6h1v2h-1zM10 7h1v1h-1zM0 8h3v1h-3zM4 8h7v1h-7zM4 9h1v1h-1zM7 9h1v1h-1zM10 9h1v1h-1zM4 10h7v1h-7zM2 9h1v3h-1zM4 11h1v1h-1zM7 11h1v1h-1zM10 11h1v1h-1zM1 12h2v1h-2zM4 12h7v1h-7z"/><path id="g200" d="M2 2h1v1h-1zM3 3h1v1h-1zM7 2h1v2h-1zM0 4h6v1h-6zM7 4h4v1h-4zM6 5h1v1h-1zM2 5h1v2h-1zM5 6h1v1h-1zM2 7h3v1h-3zM7 6h1v3h-1zM9 5h1v4h-1zM2 8h1v2h-1zM8 9h1v1h-1zM7 10h2v1h-2zM1 10h1v2h-1zM4 8h1v4h-1zM6 11h1v1h-1zM9 11h1v1h-1zM0 12h1v1h-1zM3 12h1v1h-1zM5 12h1v1h-1zM10 12h1v1h-1z"/><path id="g201" d="M1 2h1v1h-1zM9 2h2v1h-2zM5 3h4v1h-4zM2 3h1v2h-1zM5 4h1v1h-1zM5 5h6v1h-6zM0 6h3v1h-3zM5 6h2v1h-2zM10 6h1v1h-1zM7 7h1v1h-1zM9 7h1v1h-1zM5 7h1v2h-1zM8 8h1v1h-1zM4 9h1v1h-1zM7 9h1v1h-1zM9 9h1v1h-1zM2 7h1v4h-1zM5 10h2v1h-2zM10 10h1v1h-1zM1 11h1v1h-1zM3 11h1v1h-1zM0 12h1v1h-1zM4 12h7v1h-7z"/><path id="g202" d="M1 2h10v1h-10zM4 5h4v1h-4zM4 6h1v2h-1zM7 6h1v2h-1zM4 8h4v1h-4zM4 9h1v1h-1zM7 9h1v1h-1zM1 3h1v8h-1zM10 3h1v8h-1zM1 11h10v1h-10zM1 12h1v1h-1zM10 12h1v1h-1z"/><path id="g203" d="M5 2h1v1h-1zM4 3h5v1h-5zM3 4h1v1h-1zM8 4h1v1h-1zM2 5h1v1h-1zM4 5h1v1h-1zM7 5h1v1h-1zM5 6h2v1h-2zM3 7h2v1h-2zM6 7h1v1h-1zM1 8h2v1h-2zM5 8h5v1h-5zM4 9h1v1h-1zM9 9h1v1h-1zM2 10h2v1h-2zM5 10h1v1h-1zM8 10h1v1h-1zM6 11h2v1h-2zM1 12h5v1h-5z"/><path id="g204" d="M2 2h7v1h-7zM0 6h11v1h-11zM4 7h1v1h-1zM3 8h1v2h-1zM7 9h1v1h-1zM2 10h1v1h-1zM8 10h1v1h-1zM1 11h9v1h-9zM2 12h1v1h-1zM9 12h1v1h-1z"/><path id="g205" d="M0 3h6v1h-6zM11 3h2v1h-2zM7 2h2v3h-2zM10 4h2v1h-2zM4 4h2v2h-2zM7 5h4v1h-4zM1 6h5v1h-5zM7 6h3v1h-3zM7 7h2v1h-2zM1 7h2v2h-2zM5 8h9v1h-9zM1 9h5v1h-5zM7 9h4v1h-4zM10 10h2v2h-2zM4 10h2v3h-2zM7 10h2v3h-2zM11 12h2v1h-2zM1 13h4v1h-4zM7 13h3v1h-3zM12 13h2v1h-2zM2 14h2v1h-2zM7 14h2v1h-2z"/><path id="g206" d="M6 2h2v1h-2zM1 3h13v1h-13zM1 4h2v1h-2zM12 4h2v1h-2zM0 5h13v1h-13zM5 6h2v1h-2zM4 7h4v1h-4zM10 7h2v1h-2zM2 8h9v1h-9zM4 9h2v1h-2zM7 9h3v1h-3zM3 10h2v1h-2zM6 10h4v1h-4zM1 11h3v1h-3zM5 11h6v1h-6zM4 12h2v1h-2zM10 12h2v1h-2zM1 13h4v1h-4zM7 12h2v2h-2zM11 13h3v1h-3zM5 14h3v1h-3z"/><path id="g207" d="M2 3h10v1h-10zM2 4h2v1h-2zM6 4h2v1h-2zM10 4h2v1h-2zM2 5h10v1h-10zM2 6h2v1h-2zM6 6h2v1h-2zM10 6h2v1h-2zM2 7h10v1h-10zM4 8h2v1h-2zM8 8h2v1h-2zM3 9h2v1h-2zM9 9h2v1h-2zM2 10h4v1h-4zM8 10h4v1h-4zM0 11h3v1h-3zM11 11h3v1h-3zM4 11h2v2h-2zM3 13h2v1h-2zM2 14h2v1h-2zM8 11h2v4h-2z"/><path id="g208" d="M7 2h5v1h-5zM2 3h6v1h-6zM2 4h2v1h-2zM2 5h11v1h-11zM2 6h2v2h-2zM7 6h2v2h-2zM0 8h14v1h-14zM1 10h2v3h-2zM6 9h2v4h-2zM11 10h2v3h-2zM1 13h12v1h-12zM1 14h2v1h-2zM11 14h2v1h-2z"/><path id="g209" d="M1 3h12v1h-12zM1 4h2v1h-2zM4 4h4v1h-4zM1 5h4v1h-4zM1 6h3v1h-3zM1 7h4v1h-4zM6 5h2v3h-2zM11 4h2v4h-2zM4 8h9v1h-9zM1 8h2v2h-2zM4 9h4v1h-4zM1 10h7v1h-7zM1 11h4v1h-4zM6 11h2v2h-2zM11 9h2v4h-2zM6 13h7v1h-7zM1 12h2v3h-2zM6 14h2v1h-2zM11 14h2v1h-2z"/><path id="g210" d="M2 2h2v1h-2zM10 2h2v1h-2zM3 3h2v1h-2zM6 2h2v2h-2zM9 3h2v1h-2zM0 4h14v1h-14zM0 5h2v1h-2zM12 5h2v1h-2zM3 6h8v1h-8zM3 7h2v1h-2zM9 7h2v1h-2zM3 8h8v1h-8zM6 9h2v1h-2zM2 10h10v1h-10zM10 11h2v2h-2zM2 11h2v3h-2zM9 13h3v1h-3zM6 11h2v4h-2z"/><path id="g211" d="M3 2h2v1h-2zM8 2h2v1h-2zM3 3h11v1h-11zM2 4h2v1h-2zM8 4h2v1h-2zM1 5h12v1h-12zM0 6h2v1h-2zM3 6h10v1h-10zM2 7h2v1h-2zM5 7h8v1h-8zM1 8h3v1h-3zM0 9h14v1h-14zM8 10h2v1h-2zM2 10h2v2h-2zM6 11h2v1h-2zM9 11h4v1h-4zM12 12h2v1h-2zM2 12h6v2h-6zM10 13h4v1h-4zM2 14h2v1h-2zM7 14h5v1h-5z"/><path id="g212" d="M6 2h2v2h-2zM0 4h14v1h-14zM6 5h2v2h-2zM2 7h10v1h-10zM3 9h8v1h-8zM3 10h2v3h-2zM9 10h2v3h-2zM3 13h8v1h-8zM3 14h2v1h-2zM9 14h2v1h-2z"/><path id="g213" d="M3 2h2v1h-2zM9 2h2v1h-2zM4 3h2v1h-2zM8 3h2v1h-2zM0 4h14v1h-14zM5 5h2v1h-2zM2 6h10v1h-10zM2 7h2v1h-2zM10 7h2v1h-2zM2 8h10v1h-10zM2 9h2v1h-2zM10 9h2v1h-2zM2 10h10v1h-10zM2 11h2v2h-2zM10 11h2v2h-2zM2 13h10v1h-10zM2 14h2v1h-2zM10 14h2v1h-2z"/><path id="g214" d="M2 2h2v1h-2zM2 3h12v1h-12zM2 4h2v1h-2zM9 4h2v1h-2zM0 5h5v1h-5zM8 5h2v1h-2zM8 6h3v1h-3zM0 6h6v2h-6zM7 7h5v1h-5zM6 8h4v1h-4zM11 8h2v1h-2zM2 8h2v2h-2zM5 9h2v1h-2zM2 10h4v1h-4zM12 9h2v2h-2zM2 11h2v4h-2zM8 9h2v6h-2z"/><path id="g215" d="M3 2h2v2h-2zM2 4h2v2h-2zM7 2h2v4h-2zM10 4h2v2h-2zM1 6h3v1h-3zM7 6h4v1h-4zM0 7h4v1h-4zM7 7h3v1h-3zM7 8h2v1h-2zM2 8h2v2h-2zM6 9h3v1h-3zM2 10h7v1h-7zM7 11h2v3h-2zM12 12h2v2h-2zM2 11h2v4h-2zM8 14h6v1h-6z"/><path id="g216" d="M2 2h2v1h-2zM10 2h2v1h-2zM3 3h2v1h-2zM6 2h2v2h-2zM9 3h2v1h-2zM4 4h6v1h-6zM0 5h14v1h-14zM4 6h6v1h-6zM3 7h2v1h-2zM9 7h2v1h-2zM1 8h3v1h-3zM6 7h2v2h-2zM10 8h3v1h-3zM5 9h2v1h-2zM0 10h14v1h-14zM4 11h2v1h-2zM8 11h2v1h-2zM3 12h3v1h-3zM7 12h2v1h-2zM5 13h4v1h-4zM1 14h5v1h-5zM8 14h5v1h-5z"/><path id="g217" d="M7 2h2v1h-2zM2 3h12v1h-12zM2 4h2v2h-2zM8 5h5v1h-5zM2 6h8v1h-8zM2 7h4v2h-4zM8 7h2v2h-2zM2 9h12v1h-12zM8 10h2v1h-2zM2 10h4v2h-4zM4 12h4v1h-4zM9 11h2v2h-2zM12 11h2v2h-2zM1 12h2v2h-2zM4 13h5v1h-5zM10 13h4v1h-4zM0 14h2v1h-2zM4 14h2v1h-2zM7 14h2v1h-2zM11 14h3v1h-3z"/><path id="g218" d="M5 3h2v1h-2zM8 2h2v2h-2zM2 2h2v3h-2zM5 4h8v1h-8zM0 5h6v1h-6zM2 6h2v1h-2zM8 5h2v2h-2zM1 7h13v1h-13zM1 8h4v1h-4zM8 8h2v1h-2zM0 9h6v1h-6zM7 9h4v1h-4zM0 10h4v1h-4zM6 10h6v1h-6zM2 11h2v1h-2zM5 11h2v1h-2zM11 11h2v1h-2zM2 12h4v1h-4zM12 12h2v1h-2zM2 13h2v2h-2zM8 11h2v4h-2z"/><path id="g219" d="M3 2h2v4h-2zM7 3h2v3h-2zM11 2h2v4h-2zM1 6h5v1h-5zM7 6h6v1h-6zM1 7h8v1h-8zM10 7h3v1h-3zM0 8h2v1h-2zM3 8h2v3h-2zM2 11h2v2h-2zM7 8h2v5h-2zM1 13h2v1h-2zM0 14h2v1h-2zM11 8h2v7h-2z"/><path id="g220" d="M1 2h2v1h-2zM2 3h2v1h-2zM8 3h6v1h-6zM5 2h2v3h-2zM8 4h2v1h-2zM0 5h2v1h-2zM3 5h7v1h-7zM12 4h2v2h-2zM1 6h2v1h-2zM5 6h2v1h-2zM8 6h6v1h-6zM3 7h7v1h-7zM2 8h8v1h-8zM12 7h2v2h-2zM2 9h5v1h-5zM8 9h6v1h-6zM0 10h3v1h-3zM8 10h2v3h-2zM12 10h2v3h-2zM8 13h6v1h-6zM1 11h2v4h-2zM5 10h2v5h-2zM8 14h2v1h-2zM12 14h2v1h-2z"/><path id="g221" d="M1 2h2v1h-2zM2 3h12v1h-12zM7 4h4v1h-4zM0 5h2v1h-2zM1 6h2v1h-2zM5 5h8v2h-8zM3 7h10v1h-10zM6 8h2v1h-2zM10 8h2v1h-2zM2 8h2v2h-2zM6 9h6v1h-6zM0 10h3v1h-3zM6 10h2v1h-2zM10 10h2v1h-2zM6 11h6v1h-6zM8 12h2v1h-2zM4 13h10v1h-10zM1 11h2v4h-2zM8 14h2v1h-2z"/><path id="g222" d="M0 3h14v1h-14zM12 4h2v1h-2zM2 4h2v2h-2zM6 4h4v2h-4zM11 5h2v1h-2zM1 6h2v1h-2zM6 6h6v1h-6zM0 7h2v1h-2zM4 7h3v1h-3zM11 7h2v1h-2zM8 7h2v2h-2zM1 9h9v1h-9zM6 10h4v1h-4zM12 8h2v3h-2zM6 11h8v1h-8zM1 10h2v3h-2zM6 12h4v1h-4zM11 12h2v1h-2zM1 13h9v1h-9zM1 14h2v1h-2zM6 14h4v1h-4z"/><path id="g223" d="M5 2h2v1h-2zM2 2h2v2h-2zM5 3h9v1h-9zM1 4h2v1h-2zM4 4h4v1h-4zM0 5h2v1h-2zM3 5h7v1h-7zM2 6h12v1h-12zM1 7h9v1h-9zM0 8h10v1h-10zM2 9h8v1h-8zM2 10h2v1h-2zM6 10h2v1h-2zM2 11h8v1h-8zM2 12h2v1h-2zM5 12h4v1h-4zM2 13h4v1h-4zM8 13h2v1h-2zM11 7h2v7h-2zM2 14h3v1h-3zM10 14h3v1h-3z"/><path id="g224" d="M6 2h2v1h-2zM7 3h2v1h-2zM3 4h5v1h-5zM6 5h2v1h-2zM10 5h2v1h-2zM1 6h7v1h-7zM9 6h2v1h-2zM4 7h6v1h-6zM4 8h5v1h-5zM6 9h4v1h-4zM3 9h2v2h-2zM9 10h2v1h-2zM2 11h2v1h-2zM10 11h2v1h-2zM0 12h3v1h-3zM6 10h2v3h-2zM11 12h3v1h-3zM4 13h4v1h-4zM5 14h2v1h-2z"/><path id="g225" d="M9 3h5v1h-5zM2 2h2v3h-2zM6 2h2v3h-2zM9 4h2v1h-2zM12 4h2v1h-2zM0 5h13v1h-13zM2 6h2v1h-2zM6 6h2v1h-2zM9 6h3v1h-3zM1 7h7v1h-7zM9 7h4v1h-4zM1 8h10v1h-10zM0 9h5v1h-5zM6 9h5v1h-5zM12 8h2v2h-2zM9 10h5v1h-5zM9 11h4v1h-4zM2 10h2v5h-2zM6 10h2v5h-2zM9 12h2v3h-2z"/><path id="g226" d="M2 2h2v1h-2zM10 2h2v1h-2zM3 3h2v1h-2zM9 3h2v1h-2zM4 4h2v1h-2zM8 4h2v1h-2zM0 5h14v1h-14zM3 6h2v1h-2zM9 6h2v1h-2zM2 7h2v1h-2zM10 7h2v1h-2zM1 8h2v1h-2zM11 8h2v1h-2zM0 9h14v1h-14zM2 10h2v4h-2zM5 10h4v4h-4zM10 10h2v4h-2zM0 14h14v1h-14z"/><path id="g227" d="M9 2h2v2h-2zM8 4h2v1h-2zM7 5h2v1h-2zM3 2h2v5h-2zM6 6h2v1h-2zM3 7h4v1h-4zM0 8h14v1h-14zM6 9h2v1h-2zM7 10h2v1h-2zM8 11h2v1h-2zM3 9h2v4h-2zM6 12h2v1h-2zM9 12h2v1h-2zM3 13h4v1h-4zM10 13h2v1h-2zM3 14h3v1h-3zM11 14h3v1h-3z"/><path id="g228" d="M1 2h2v1h-2zM2 3h2v1h-2zM8 2h2v2h-2zM8 4h4v1h-4zM0 5h2v1h-2zM11 5h2v1h-2zM1 6h2v1h-2zM5 4h2v3h-2zM3 7h3v1h-3zM12 6h2v2h-2zM2 8h2v2h-2zM8 5h2v5h-2zM11 9h2v1h-2zM0 10h3v1h-3zM10 10h2v1h-2zM9 11h2v1h-2zM8 12h2v1h-2zM7 13h2v1h-2zM1 11h2v4h-2zM4 14h4v1h-4z"/></defs></svg>

<!-- main title bar -->
<div id="mtitle" class="a">
  <div class="a t tx" style="left:21px;top:4px;color:#fff;font-weight:bold;font-size:13px;letter-spacing:0.2px"><svg class="g" width="14.2" height="17"><use href="#g0"/></svg><svg class="g" width="14.2" height="17"><use href="#g1"/></svg><svg class="g" width="14.2" height="17"><use href="#g2"/></svg><svg class="g" width="14.2" height="17"><use href="#g3"/></svg><svg class="g" width="14.2" height="17"><use href="#g4"/></svg><svg class="g" width="14.2" height="17"><use href="#g5"/></svg><svg class="g" width="14.2" height="17"><use href="#g6"/></svg><svg class="g" width="14.2" height="17"><use href="#g7"/></svg><svg class="g" width="14.2" height="17"><use href="#g8"/></svg><svg class="g" width="14.2" height="17"><use href="#g9"/></svg><svg class="g" width="14.2" height="17"><use href="#g8"/></svg><svg class="g" width="14.2" height="17"><use href="#g10"/></svg><svg class="g" width="14.2" height="17"><use href="#g11"/></svg> <svg class="g" width="14.2" height="17"><use href="#g12"/></svg> <svg class="g" width="14.2" height="17"><use href="#g13"/></svg><svg class="g" width="14.2" height="17"><use href="#g14"/></svg><svg class="g" width="14.2" height="17"><use href="#g5"/></svg><svg class="g" width="14.2" height="17"><use href="#g6"/></svg><svg class="g" width="14.2" height="17"><use href="#g7"/></svg><svg class="g" width="14.2" height="17"><use href="#g8"/></svg><svg class="g" width="14.2" height="17"><use href="#g15"/></svg><svg class="g" width="14.2" height="17"><use href="#g16"/></svg></div>
    <div class="a xpbtn" style="left:1211px;top:2px"><div class="a" style="left:4px;top:13px;width:7px;height:3px;background:#fff"></div></div>
  <div class="a xpbtn" style="left:1234px;top:2px"><div class="a" style="left:7px;top:4px;width:9px;height:8px;border:1px solid #fff;border-top-width:2px"></div><div class="a" style="left:4px;top:8px;width:8px;height:8px;border:1px solid #fff;border-top-width:2px;background:#2a5ee8"></div></div>
  <div class="a xpbtn xpclose" style="left:1257px;top:2px"><svg class="a" style="left:3px;top:3px" width="14" height="14"><path d="M2.5 2.5L11.5 11.5M11.5 2.5L2.5 11.5" stroke="#fff" stroke-width="2.2"/></svg></div>
  <svg class="a" style="left:3px;top:5px" width="17" height="14"><path d="M3 12C0 12 0 8 3 8C3 4 8 3 10 6C12 3 16 5 15 9C17 9 17 12 15 12Z" fill="#f2f6ff" stroke="#a8b8d8" stroke-width="0.8"/><path d="M5 10C6 8 8 8 9 9" stroke="#c8d4ec" fill="none"/></svg>
</div>

<div id="menubar" class="a">
  <div class="a t" style="left:12px;top:4px"><svg class="g" width="12" height="16"><use href="#g17"/></svg><svg class="g" width="12" height="16"><use href="#g18"/></svg><svg class="g" width="12" height="16"><use href="#g19"/></svg><svg class="g" width="12" height="16"><use href="#g20"/></svg></div>
  <div class="a t" style="left:75px;top:4px"><svg class="g" width="12" height="16"><use href="#g21"/></svg><svg class="g" width="12" height="16"><use href="#g22"/></svg><svg class="g" width="12" height="16"><use href="#g23"/></svg><svg class="g" width="12" height="16"><use href="#g24"/></svg></div>
  <div class="a t" style="left:138px;top:4px"><svg class="g" width="12" height="16"><use href="#g25"/></svg><svg class="g" width="12" height="16"><use href="#g26"/></svg><svg class="g" width="12" height="16"><use href="#g27"/></svg><svg class="g" width="12" height="16"><use href="#g28"/></svg></div>
  <div class="a t" style="left:200px;top:4px"><svg class="g" width="12" height="16"><use href="#g29"/></svg><svg class="g" width="12" height="16"><use href="#g30"/></svg></div>
  <div class="a t" style="left:240px;top:4px"><svg class="g" width="12" height="16"><use href="#g31"/></svg><svg class="g" width="12" height="16"><use href="#g32"/></svg></div>
</div>
<div id="toolbar" class="a"></div>
<div class="a" style="left:442px;top:78px;width:633px;height:1px;background:#aca899"></div>
<svg class="a" style="left:442px;top:51px" width="420" height="27" viewBox="442 51 420 27">
 <defs><linearGradient id="gg" x1="0" x2="1" y1="0" y2="0"><stop offset="0" stop-color="#1c8f1c"/><stop offset="0.35" stop-color="#3aa83a"/><stop offset="0.55" stop-color="#8ad88a"/><stop offset="0.75" stop-color="#c8f0b8"/><stop offset="1" stop-color="#58c828"/></linearGradient>
 <linearGradient id="gg2" x1="0" x2="0" y1="0" y2="1"><stop offset="0" stop-color="#fff" stop-opacity="0"/><stop offset="0.6" stop-color="#fff" stop-opacity="0.15"/><stop offset="1" stop-color="#000" stop-opacity="0.1"/></linearGradient></defs>
 <circle cx="454" cy="63.5" r="6.8" fill="#2a78d8"/><path d="M449 59C452 57 456 58 457 61C455 63 452 62 451 66C449 65 448 62 449 59Z" fill="#3aa83a"/><path d="M455 65C458 64 460 66 459 69C457 70 455 69 455 65Z" fill="#4ab84a"/><circle cx="452" cy="61" r="2" fill="#a8e0ff" opacity="0.7"/><path d="M446 70C444 68 450 62 457 58C462 55 464 56 461 59" fill="none" stroke="#58b8ff" stroke-width="1.3"/>
 <rect x="470" y="57" width="15" height="14" rx="1" fill="#e24a2c"/><circle cx="477.5" cy="64" r="4.5" fill="none" stroke="#fff" stroke-width="1.6"/><rect x="476.7" y="61" width="1.6" height="5" fill="#fff"/>
 <circle cx="502" cy="64" r="8" fill="#00007a"/><circle cx="502" cy="59.5" r="1.6" fill="#fff"/><path d="M500 62.5H503V68H504.5V69.5H499.5V68H500.5V64H500Z" fill="#fff"/>
 <rect x="518.5" y="58.5" width="14.5" height="11.5" fill="#5a9ae8" stroke="#1a2a8a" stroke-width="1.3"/><path d="M519.5 66L523 62L526 63.5L529 60.5L532.5 63V67.5H519.5Z" fill="#4a9a3a"/><path d="M519.5 67L524 64L528 65.5L532.5 64V68H519.5Z" fill="#e8c830"/><path d="M519 69.5H533" stroke="#111" stroke-width="1.2" stroke-dasharray="2 1"/>
 <g fill="none" stroke="#1a1aa0" stroke-width="1.4"><path d="M546 58H555L557 62H544Z"/><rect x="543" y="62" width="15" height="6" rx="1"/><path d="M545 68V71H556V68"/></g><path d="M546 65H555" stroke="#1a1aa0" stroke-width="1"/>
 <g fill="none" stroke="#1a1aa0" stroke-width="1.4"><path d="M570 58H579L581 62H568Z"/><rect x="567" y="62" width="15" height="6" rx="1"/><path d="M569 68V71H580V68"/></g><rect x="572" y="59" width="6" height="2" fill="#f0d000"/><rect x="573" y="66" width="6" height="2" fill="#c02020"/>
 <circle cx="598" cy="64" r="8" fill="#007800"/><path d="M595 61C595 57 601 57 601 61C601 63 598.5 63.5 598.5 66" fill="none" stroke="#fff" stroke-width="2.2"/><circle cx="598.5" cy="69" r="1.3" fill="#fff"/>
 <rect x="613" y="53" width="1" height="22" fill="#c5c2b2"/>
 <rect x="615" y="52" width="238" height="24" fill="url(#gg)"/><rect x="615" y="52" width="238" height="24" fill="url(#gg2)"/>
 <rect x="615" y="75" width="238" height="1" fill="#9a9a9a"/>
</svg>
<div class="a t" style="left:620px;top:52px;height:24px;line-height:24px;font-size:19px;color:#0b5d0b;letter-spacing:-0.4px">2008<svg class="g" width="18" height="21" style="position:relative;top:0px"><use href="#g33"/></svg>12<svg class="g" width="18" height="21" style="position:relative;top:0px"><use href="#g34"/></svg>19<svg class="g" width="18" height="21" style="position:relative;top:0px"><use href="#g35"/></svg></div><div class="a t" style="left:766px;top:52px;height:24px;line-height:24px;font-size:19px;color:#0b5d0b;letter-spacing:1.2px">16:20:50</div>

<div id="map" class="a"></div>
<!--MAP-->
<svg class="a" style="left:442px;top:80px" width="633" height="514" viewBox="442 80 633 514">
<defs><clipPath id="prov"><polygon points="560.0,114.0 578.0,111.0 590.0,111.0 597.0,115.0 617.0,117.0 628.0,126.0 652.0,128.0 672.6,136.0 678.8,144.0 693.0,152.4 699.4,160.7 707.7,154.5 724.0,154.5 730.4,150.4 742.8,138.0 747.0,144.0 753.0,140.0 755.0,142.0 747.0,152.4 749.0,160.7 763.4,167.0 771.6,156.6 796.4,131.8 796.4,144.0 804.6,148.3 806.7,158.6 810.8,164.8 802.6,177.0 804.6,183.4 808.8,191.6 817.0,195.8 825.3,200.0 829.4,206.0 841.8,220.5 843.8,233.0 839.7,241.0 846.0,247.3 848.0,253.5 852.0,259.7 852.0,270.0 846.0,276.0 833.5,278.0 835.6,288.6 815.0,299.0 813.0,311.0 802.6,325.7 802.6,346.0 815.0,352.5 823.0,350.4 819.0,373.0 829.4,387.6 823.0,410.0 841.8,418.5 844.0,430.0 841.8,435.0 838.0,451.0 850.0,450.0 856.0,455.0 842.0,460.0 838.0,472.0 831.5,493.0 835.6,503.0 835.6,519.6 827.3,523.7 821.0,531.0 804.6,531.0 794.3,527.8 784.0,517.5 775.8,515.4 767.5,521.6 759.3,530.0 747.0,534.0 751.0,540.0 759.3,544.0 757.2,552.6 759.3,567.0 744.8,569.0 736.6,554.6 730.4,548.4 714.0,546.4 707.7,548.4 693.0,544.3 689.0,560.8 691.0,571.0 676.8,583.5 664.4,581.5 652.0,585.0 644.0,592.0 636.0,589.7 634.0,563.0 627.6,550.5 617.0,552.6 607.0,565.0 598.8,571.0 596.7,554.6 605.0,544.0 617.0,528.0 623.5,517.5 623.5,499.0 636.0,484.5 621.5,486.6 615.0,482.4 617.0,470.0 621.5,451.5 613.0,447.0 598.8,447.0 594.6,443.0 582.0,451.5 576.0,447.0 565.8,447.0 559.6,457.7 549.0,464.0 539.0,476.0 532.8,472.0 524.5,471.0 524.5,460.0 512.0,460.0 504.0,474.0 501.8,484.5 492.5,483.5 496.7,475.0 489.4,471.0 479.0,473.0 477.0,468.0 473.0,449.4 461.6,445.0 468.8,435.0 471.0,427.0 464.7,414.0 471.0,410.0 481.0,406.0 477.0,398.0 483.0,394.0 479.0,379.0 473.0,371.0 454.0,377.0 442.0,373.0 430.0,373.0 430.0,350.0 442.0,356.6 450.0,346.0 460.6,346.0 473.0,336.0 477.0,325.7 469.0,319.5 464.7,303.0 467.0,286.5 471.0,274.0 464.7,262.0 464.7,249.4 458.5,241.0 460.6,239.0 466.8,233.0 460.6,228.8 460.6,216.4 464.7,204.0 462.6,195.8 466.8,185.4 473.0,171.0 475.0,160.7 483.0,152.4 497.7,150.4 504.0,142.0 516.0,140.0 537.0,142.0 543.0,148.3 549.0,152.4 557.5,146.0 565.8,143.0 567.8,140.0 559.6,129.8 559.6,117.4"/></clipPath></defs>
<polygon points="560.0,114.0 578.0,111.0 590.0,111.0 597.0,115.0 617.0,117.0 628.0,126.0 652.0,128.0 672.6,136.0 678.8,144.0 693.0,152.4 699.4,160.7 707.7,154.5 724.0,154.5 730.4,150.4 742.8,138.0 747.0,144.0 753.0,140.0 755.0,142.0 747.0,152.4 749.0,160.7 763.4,167.0 771.6,156.6 796.4,131.8 796.4,144.0 804.6,148.3 806.7,158.6 810.8,164.8 802.6,177.0 804.6,183.4 808.8,191.6 817.0,195.8 825.3,200.0 829.4,206.0 841.8,220.5 843.8,233.0 839.7,241.0 846.0,247.3 848.0,253.5 852.0,259.7 852.0,270.0 846.0,276.0 833.5,278.0 835.6,288.6 815.0,299.0 813.0,311.0 802.6,325.7 802.6,346.0 815.0,352.5 823.0,350.4 819.0,373.0 829.4,387.6 823.0,410.0 841.8,418.5 844.0,430.0 841.8,435.0 838.0,451.0 850.0,450.0 856.0,455.0 842.0,460.0 838.0,472.0 831.5,493.0 835.6,503.0 835.6,519.6 827.3,523.7 821.0,531.0 804.6,531.0 794.3,527.8 784.0,517.5 775.8,515.4 767.5,521.6 759.3,530.0 747.0,534.0 751.0,540.0 759.3,544.0 757.2,552.6 759.3,567.0 744.8,569.0 736.6,554.6 730.4,548.4 714.0,546.4 707.7,548.4 693.0,544.3 689.0,560.8 691.0,571.0 676.8,583.5 664.4,581.5 652.0,585.0 644.0,592.0 636.0,589.7 634.0,563.0 627.6,550.5 617.0,552.6 607.0,565.0 598.8,571.0 596.7,554.6 605.0,544.0 617.0,528.0 623.5,517.5 623.5,499.0 636.0,484.5 621.5,486.6 615.0,482.4 617.0,470.0 621.5,451.5 613.0,447.0 598.8,447.0 594.6,443.0 582.0,451.5 576.0,447.0 565.8,447.0 559.6,457.7 549.0,464.0 539.0,476.0 532.8,472.0 524.5,471.0 524.5,460.0 512.0,460.0 504.0,474.0 501.8,484.5 492.5,483.5 496.7,475.0 489.4,471.0 479.0,473.0 477.0,468.0 473.0,449.4 461.6,445.0 468.8,435.0 471.0,427.0 464.7,414.0 471.0,410.0 481.0,406.0 477.0,398.0 483.0,394.0 479.0,379.0 473.0,371.0 454.0,377.0 442.0,373.0 430.0,373.0 430.0,350.0 442.0,356.6 450.0,346.0 460.6,346.0 473.0,336.0 477.0,325.7 469.0,319.5 464.7,303.0 467.0,286.5 471.0,274.0 464.7,262.0 464.7,249.4 458.5,241.0 460.6,239.0 466.8,233.0 460.6,228.8 460.6,216.4 464.7,204.0 462.6,195.8 466.8,185.4 473.0,171.0 475.0,160.7 483.0,152.4 497.7,150.4 504.0,142.0 516.0,140.0 537.0,142.0 543.0,148.3 549.0,152.4 557.5,146.0 565.8,143.0 567.8,140.0 559.6,129.8 559.6,117.4" fill="#fffef6"/>
<g clip-path="url(#prov)">
<g fill="#44dccf">
<rect x="553" y="373" width="1" height="2"/>
<rect x="604" y="401" width="3" height="2"/>
<rect x="704" y="150" width="2" height="2"/>
<rect x="465" y="509" width="3" height="1"/>
<rect x="561" y="229" width="1" height="1"/>
<rect x="848" y="339" width="2" height="1"/>
<rect x="786" y="342" width="2" height="2"/>
<rect x="709" y="190" width="3" height="3"/>
<rect x="708" y="524" width="2" height="2"/>
<rect x="664" y="465" width="3" height="2"/>
<rect x="722" y="150" width="2" height="2"/>
<rect x="756" y="395" width="2" height="2"/>
<rect x="577" y="134" width="2" height="2"/>
<rect x="798" y="340" width="2" height="2"/>
<rect x="740" y="529" width="3" height="1"/>
<rect x="739" y="548" width="3" height="2"/>
<rect x="614" y="492" width="2" height="3"/>
<rect x="633" y="555" width="2" height="2"/>
<rect x="803" y="165" width="1" height="3"/>
<rect x="513" y="221" width="1" height="3"/>
<rect x="837" y="323" width="2" height="2"/>
<rect x="704" y="260" width="2" height="1"/>
<rect x="658" y="299" width="2" height="3"/>
<rect x="597" y="392" width="2" height="3"/>
<rect x="688" y="540" width="1" height="2"/>
<rect x="726" y="552" width="3" height="2"/>
<rect x="794" y="581" width="3" height="2"/>
<rect x="722" y="196" width="2" height="2"/>
<rect x="796" y="569" width="2" height="2"/>
<rect x="813" y="385" width="2" height="1"/>
<rect x="738" y="218" width="2" height="1"/>
<rect x="784" y="387" width="2" height="2"/>
<rect x="571" y="150" width="2" height="3"/>
<rect x="793" y="580" width="2" height="2"/>
<rect x="495" y="492" width="2" height="3"/>
<rect x="620" y="190" width="2" height="2"/>
<rect x="575" y="477" width="2" height="2"/>
<rect x="800" y="141" width="2" height="3"/>
<rect x="700" y="141" width="3" height="2"/>
<rect x="740" y="274" width="2" height="3"/>
<rect x="804" y="576" width="2" height="1"/>
<rect x="657" y="584" width="1" height="3"/>
<rect x="581" y="156" width="3" height="1"/>
<rect x="694" y="135" width="2" height="2"/>
<rect x="537" y="310" width="3" height="3"/>
<rect x="698" y="193" width="2" height="3"/>
<rect x="477" y="524" width="3" height="2"/>
<rect x="582" y="566" width="3" height="3"/>
<rect x="810" y="296" width="2" height="1"/>
<rect x="640" y="362" width="3" height="2"/>
<rect x="711" y="397" width="2" height="2"/>
<rect x="678" y="408" width="1" height="2"/>
<rect x="827" y="356" width="2" height="2"/>
<rect x="628" y="455" width="3" height="2"/>
<rect x="553" y="260" width="3" height="2"/>
<rect x="841" y="362" width="3" height="1"/>
<rect x="674" y="125" width="2" height="2"/>
<rect x="622" y="390" width="1" height="2"/>
<rect x="468" y="406" width="2" height="2"/>
<rect x="707" y="148" width="3" height="2"/>
<rect x="705" y="337" width="1" height="3"/>
<rect x="725" y="284" width="2" height="3"/>
<rect x="736" y="463" width="3" height="2"/>
<rect x="469" y="148" width="2" height="2"/>
<rect x="724" y="568" width="2" height="2"/>
<rect x="558" y="332" width="3" height="1"/>
<rect x="691" y="269" width="2" height="2"/>
<rect x="602" y="265" width="2" height="3"/>
<rect x="604" y="397" width="2" height="3"/>
<rect x="577" y="295" width="3" height="2"/>
<rect x="761" y="133" width="3" height="2"/>
<rect x="682" y="462" width="1" height="1"/>
<rect x="581" y="223" width="3" height="2"/>
<rect x="773" y="231" width="2" height="2"/>
<rect x="533" y="322" width="1" height="1"/>
<rect x="732" y="167" width="1" height="3"/>
<rect x="586" y="275" width="2" height="3"/>
<rect x="785" y="324" width="2" height="1"/>
<rect x="794" y="199" width="3" height="2"/>
<rect x="591" y="422" width="2" height="2"/>
<rect x="805" y="330" width="2" height="1"/>
<rect x="548" y="176" width="2" height="1"/>
<rect x="667" y="209" width="3" height="2"/>
<rect x="775" y="510" width="3" height="2"/>
<rect x="532" y="250" width="2" height="2"/>
<rect x="775" y="419" width="2" height="2"/>
<rect x="774" y="281" width="2" height="2"/>
<rect x="511" y="256" width="2" height="2"/>
<rect x="770" y="246" width="2" height="2"/>
<rect x="595" y="314" width="1" height="1"/>
<rect x="624" y="310" width="2" height="1"/>
<rect x="819" y="193" width="2" height="3"/>
<rect x="462" y="559" width="2" height="1"/>
<rect x="803" y="579" width="2" height="2"/>
<rect x="629" y="562" width="2" height="1"/>
<rect x="822" y="223" width="3" height="2"/>
<rect x="751" y="509" width="2" height="2"/>
<rect x="719" y="361" width="3" height="3"/>
<rect x="573" y="279" width="3" height="3"/>
<rect x="549" y="152" width="2" height="2"/>
<rect x="690" y="253" width="2" height="3"/>
<rect x="776" y="141" width="2" height="1"/>
<rect x="812" y="443" width="1" height="2"/>
<rect x="820" y="537" width="3" height="1"/>
<rect x="811" y="388" width="2" height="2"/>
<rect x="465" y="467" width="2" height="2"/>
<rect x="527" y="259" width="2" height="1"/>
<rect x="719" y="364" width="2" height="2"/>
<rect x="621" y="557" width="1" height="2"/>
<rect x="699" y="279" width="2" height="1"/>
<rect x="558" y="521" width="3" height="3"/>
<rect x="646" y="484" width="2" height="2"/>
<rect x="597" y="212" width="1" height="2"/>
<rect x="669" y="500" width="2" height="2"/>
<rect x="527" y="488" width="2" height="1"/>
<rect x="819" y="495" width="1" height="2"/>
<rect x="781" y="123" width="1" height="1"/>
<rect x="705" y="521" width="1" height="3"/>
<rect x="479" y="246" width="3" height="3"/>
<rect x="565" y="365" width="2" height="2"/>
<rect x="625" y="340" width="1" height="1"/>
<rect x="763" y="121" width="2" height="3"/>
<rect x="481" y="179" width="2" height="1"/>
<rect x="509" y="152" width="1" height="2"/>
<rect x="840" y="517" width="2" height="2"/>
<rect x="494" y="353" width="1" height="1"/>
<rect x="583" y="266" width="2" height="3"/>
<rect x="597" y="421" width="1" height="3"/>
<rect x="689" y="288" width="2" height="2"/>
<rect x="535" y="273" width="3" height="3"/>
<rect x="508" y="378" width="2" height="1"/>
<rect x="739" y="297" width="2" height="2"/>
<rect x="491" y="203" width="2" height="2"/>
<rect x="606" y="401" width="3" height="3"/>
<rect x="765" y="297" width="1" height="3"/>
<rect x="772" y="410" width="2" height="1"/>
<rect x="628" y="293" width="2" height="2"/>
<rect x="653" y="447" width="1" height="1"/>
<rect x="624" y="443" width="3" height="1"/>
<rect x="640" y="234" width="2" height="2"/>
<rect x="669" y="443" width="2" height="3"/>
<rect x="488" y="318" width="2" height="3"/>
<rect x="626" y="529" width="2" height="3"/>
<rect x="825" y="294" width="2" height="1"/>
<rect x="810" y="488" width="2" height="3"/>
<rect x="562" y="336" width="1" height="2"/>
<rect x="508" y="498" width="2" height="3"/>
<rect x="718" y="533" width="2" height="2"/>
<rect x="769" y="430" width="2" height="2"/>
<rect x="746" y="382" width="2" height="2"/>
<rect x="500" y="393" width="1" height="1"/>
<rect x="462" y="187" width="3" height="1"/>
<rect x="762" y="141" width="3" height="2"/>
<rect x="496" y="166" width="3" height="1"/>
<rect x="803" y="203" width="1" height="1"/>
<rect x="469" y="511" width="3" height="1"/>
<rect x="507" y="512" width="1" height="3"/>
<rect x="723" y="509" width="1" height="1"/>
<rect x="831" y="389" width="2" height="2"/>
<rect x="772" y="137" width="2" height="3"/>
<rect x="759" y="358" width="3" height="2"/>
<rect x="739" y="170" width="2" height="2"/>
<rect x="752" y="555" width="2" height="1"/>
<rect x="484" y="271" width="3" height="1"/>
<rect x="680" y="505" width="1" height="2"/>
<rect x="554" y="204" width="2" height="1"/>
<rect x="557" y="406" width="2" height="3"/>
<rect x="754" y="303" width="2" height="2"/>
<rect x="603" y="304" width="1" height="2"/>
<rect x="597" y="314" width="1" height="3"/>
<rect x="492" y="353" width="1" height="2"/>
<rect x="839" y="312" width="3" height="1"/>
<rect x="751" y="195" width="3" height="2"/>
<rect x="729" y="472" width="3" height="3"/>
<rect x="723" y="360" width="3" height="2"/>
<rect x="649" y="419" width="1" height="2"/>
<rect x="810" y="189" width="2" height="3"/>
<rect x="497" y="468" width="2" height="3"/>
<rect x="817" y="361" width="2" height="2"/>
<rect x="633" y="454" width="2" height="1"/>
<rect x="533" y="244" width="2" height="3"/>
<rect x="538" y="392" width="3" height="3"/>
<rect x="583" y="228" width="2" height="2"/>
<rect x="730" y="563" width="1" height="2"/>
<rect x="575" y="448" width="1" height="3"/>
<rect x="621" y="517" width="2" height="3"/>
<rect x="688" y="244" width="2" height="2"/>
<rect x="545" y="131" width="1" height="2"/>
<rect x="647" y="298" width="3" height="2"/>
<rect x="527" y="288" width="3" height="3"/>
<rect x="586" y="480" width="2" height="3"/>
<rect x="516" y="581" width="3" height="1"/>
<rect x="647" y="399" width="2" height="3"/>
<rect x="643" y="508" width="2" height="3"/>
<rect x="780" y="379" width="2" height="2"/>
<rect x="648" y="455" width="2" height="2"/>
<rect x="794" y="306" width="2" height="1"/>
<rect x="746" y="567" width="3" height="1"/>
<rect x="642" y="227" width="3" height="3"/>
<rect x="552" y="454" width="3" height="3"/>
<rect x="723" y="566" width="3" height="2"/>
<rect x="793" y="233" width="3" height="3"/>
<rect x="534" y="240" width="1" height="2"/>
<rect x="533" y="448" width="1" height="2"/>
<rect x="795" y="538" width="1" height="2"/>
<rect x="559" y="522" width="3" height="1"/>
<rect x="582" y="317" width="1" height="1"/>
<rect x="744" y="160" width="2" height="2"/>
<rect x="496" y="508" width="2" height="3"/>
<rect x="574" y="286" width="3" height="2"/>
<rect x="686" y="434" width="2" height="2"/>
<rect x="463" y="276" width="3" height="3"/>
<rect x="630" y="346" width="2" height="3"/>
<rect x="542" y="392" width="1" height="2"/>
<rect x="833" y="302" width="1" height="2"/>
<rect x="672" y="175" width="2" height="3"/>
<rect x="567" y="429" width="2" height="1"/>
<rect x="504" y="533" width="2" height="2"/>
<rect x="814" y="165" width="1" height="2"/>
<rect x="827" y="294" width="3" height="2"/>
<rect x="761" y="472" width="2" height="2"/>
<rect x="575" y="434" width="2" height="1"/>
<rect x="715" y="495" width="2" height="2"/>
<rect x="564" y="471" width="2" height="2"/>
<rect x="835" y="433" width="3" height="1"/>
<rect x="669" y="173" width="2" height="2"/>
<rect x="653" y="284" width="2" height="2"/>
<rect x="740" y="436" width="1" height="2"/>
<rect x="681" y="205" width="2" height="2"/>
<rect x="712" y="413" width="2" height="2"/>
<rect x="530" y="534" width="2" height="2"/>
<rect x="716" y="177" width="2" height="1"/>
<rect x="823" y="186" width="3" height="3"/>
<rect x="589" y="455" width="2" height="1"/>
<rect x="693" y="378" width="3" height="2"/>
<rect x="713" y="333" width="2" height="2"/>
<rect x="582" y="202" width="3" height="2"/>
<rect x="487" y="453" width="2" height="2"/>
<rect x="754" y="373" width="1" height="1"/>
<rect x="748" y="287" width="3" height="3"/>
<rect x="564" y="298" width="2" height="2"/>
<rect x="800" y="140" width="2" height="1"/>
<rect x="657" y="235" width="1" height="1"/>
<rect x="760" y="285" width="2" height="2"/>
<rect x="590" y="308" width="2" height="2"/>
<rect x="671" y="479" width="2" height="2"/>
<rect x="598" y="514" width="1" height="1"/>
<rect x="504" y="246" width="2" height="1"/>
<rect x="499" y="172" width="3" height="2"/>
<rect x="764" y="458" width="2" height="1"/>
<rect x="532" y="208" width="3" height="3"/>
<rect x="622" y="466" width="3" height="2"/>
<rect x="778" y="468" width="3" height="1"/>
<rect x="691" y="188" width="1" height="2"/>
<rect x="615" y="210" width="2" height="3"/>
<rect x="666" y="384" width="2" height="3"/>
<rect x="539" y="236" width="2" height="3"/>
<rect x="765" y="134" width="3" height="3"/>
<rect x="773" y="534" width="2" height="2"/>
<rect x="830" y="298" width="1" height="2"/>
<rect x="676" y="391" width="3" height="3"/>
<rect x="707" y="574" width="3" height="1"/>
<rect x="728" y="259" width="3" height="1"/>
<rect x="795" y="345" width="2" height="2"/>
<rect x="695" y="458" width="2" height="1"/>
<rect x="461" y="478" width="2" height="2"/>
<rect x="718" y="349" width="2" height="2"/>
<rect x="664" y="334" width="1" height="2"/>
<rect x="535" y="366" width="1" height="2"/>
<rect x="474" y="353" width="2" height="1"/>
<rect x="712" y="327" width="1" height="3"/>
<rect x="681" y="566" width="2" height="1"/>
<rect x="808" y="183" width="3" height="2"/>
<rect x="769" y="410" width="3" height="1"/>
<rect x="480" y="287" width="3" height="3"/>
<rect x="551" y="156" width="1" height="1"/>
<rect x="670" y="552" width="1" height="1"/>
<rect x="586" y="525" width="2" height="1"/>
<rect x="731" y="182" width="2" height="1"/>
<rect x="795" y="400" width="2" height="1"/>
<rect x="822" y="453" width="2" height="1"/>
<rect x="748" y="280" width="3" height="1"/>
<rect x="775" y="553" width="1" height="2"/>
<rect x="796" y="323" width="2" height="3"/>
<rect x="755" y="346" width="2" height="2"/>
<rect x="503" y="140" width="1" height="2"/>
<rect x="490" y="213" width="1" height="2"/>
<rect x="523" y="351" width="3" height="2"/>
<rect x="733" y="370" width="2" height="3"/>
<rect x="625" y="422" width="3" height="3"/>
<rect x="579" y="336" width="2" height="2"/>
<rect x="755" y="307" width="2" height="1"/>
<rect x="530" y="538" width="2" height="2"/>
<rect x="741" y="291" width="2" height="3"/>
<rect x="605" y="366" width="3" height="2"/>
<rect x="693" y="224" width="2" height="2"/>
<rect x="461" y="217" width="2" height="2"/>
<rect x="765" y="187" width="2" height="2"/>
<rect x="639" y="211" width="2" height="1"/>
<rect x="542" y="199" width="2" height="3"/>
<rect x="711" y="205" width="2" height="3"/>
<rect x="738" y="197" width="3" height="3"/>
<rect x="741" y="223" width="2" height="1"/>
<rect x="731" y="197" width="2" height="1"/>
<rect x="698" y="204" width="2" height="3"/>
<rect x="722" y="186" width="1" height="3"/>
<rect x="702" y="211" width="2" height="3"/>
<rect x="797" y="207" width="3" height="2"/>
<rect x="727" y="207" width="2" height="1"/>
<rect x="708" y="198" width="1" height="3"/>
<rect x="706" y="177" width="3" height="3"/>
<rect x="732" y="201" width="2" height="2"/>
<rect x="722" y="173" width="2" height="2"/>
<rect x="732" y="165" width="2" height="1"/>
<rect x="747" y="185" width="2" height="2"/>
<rect x="725" y="217" width="2" height="3"/>
<rect x="741" y="159" width="1" height="2"/>
<rect x="718" y="205" width="2" height="2"/>
<rect x="695" y="128" width="1" height="1"/>
<rect x="723" y="194" width="2" height="3"/>
<rect x="737" y="197" width="2" height="3"/>
<rect x="729" y="202" width="1" height="2"/>
<rect x="763" y="209" width="2" height="2"/>
<rect x="740" y="184" width="3" height="3"/>
<rect x="756" y="190" width="2" height="3"/>
<rect x="746" y="136" width="2" height="2"/>
<rect x="732" y="192" width="1" height="2"/>
<rect x="712" y="231" width="1" height="2"/>
<rect x="736" y="191" width="1" height="2"/>
<rect x="710" y="248" width="1" height="2"/>
<rect x="746" y="213" width="1" height="3"/>
<rect x="704" y="231" width="2" height="2"/>
<rect x="741" y="187" width="1" height="2"/>
<rect x="722" y="150" width="2" height="2"/>
<rect x="743" y="164" width="3" height="1"/>
<rect x="749" y="183" width="1" height="2"/>
<rect x="708" y="205" width="2" height="2"/>
<rect x="731" y="163" width="2" height="2"/>
<rect x="723" y="212" width="2" height="2"/>
<rect x="718" y="157" width="3" height="2"/>
<rect x="718" y="168" width="3" height="3"/>
<rect x="709" y="196" width="3" height="1"/>
<rect x="724" y="189" width="3" height="3"/>
<rect x="679" y="205" width="1" height="1"/>
<rect x="719" y="184" width="2" height="3"/>
<rect x="729" y="249" width="2" height="2"/>
<rect x="689" y="150" width="1" height="1"/>
<rect x="746" y="173" width="2" height="1"/>
<rect x="761" y="168" width="3" height="1"/>
<rect x="711" y="218" width="3" height="3"/>
<rect x="750" y="207" width="2" height="1"/>
<rect x="738" y="191" width="3" height="1"/>
<rect x="713" y="189" width="2" height="2"/>
<rect x="760" y="215" width="2" height="3"/>
<rect x="726" y="204" width="2" height="3"/>
<rect x="748" y="228" width="1" height="2"/>
<rect x="721" y="193" width="2" height="2"/>
<rect x="734" y="268" width="3" height="2"/>
<rect x="732" y="230" width="2" height="2"/>
<rect x="682" y="219" width="2" height="2"/>
<rect x="686" y="165" width="2" height="1"/>
<rect x="707" y="191" width="2" height="2"/>
<rect x="730" y="205" width="3" height="2"/>
<rect x="731" y="183" width="2" height="2"/>
<rect x="797" y="206" width="3" height="3"/>
<rect x="744" y="251" width="2" height="3"/>
<rect x="752" y="211" width="2" height="3"/>
<rect x="734" y="247" width="3" height="1"/>
<rect x="695" y="168" width="2" height="3"/>
<rect x="729" y="138" width="1" height="2"/>
<rect x="703" y="226" width="2" height="2"/>
<rect x="712" y="200" width="2" height="2"/>
<rect x="744" y="163" width="3" height="3"/>
<rect x="733" y="178" width="2" height="2"/>
<rect x="695" y="187" width="1" height="2"/>
<rect x="723" y="184" width="2" height="2"/>
<rect x="707" y="222" width="2" height="2"/>
<rect x="757" y="210" width="3" height="2"/>
<rect x="722" y="166" width="2" height="2"/>
<rect x="702" y="164" width="2" height="2"/>
<rect x="731" y="220" width="3" height="2"/>
<rect x="750" y="194" width="1" height="1"/>
<rect x="714" y="200" width="1" height="3"/>
<rect x="728" y="211" width="1" height="2"/>
<rect x="766" y="176" width="2" height="2"/>
<rect x="783" y="137" width="2" height="2"/>
<rect x="676" y="153" width="2" height="2"/>
<rect x="697" y="189" width="3" height="3"/>
<rect x="782" y="176" width="2" height="2"/>
<rect x="756" y="185" width="2" height="3"/>
<rect x="729" y="167" width="1" height="2"/>
<rect x="788" y="194" width="2" height="1"/>
<rect x="708" y="258" width="3" height="1"/>
<rect x="730" y="207" width="3" height="3"/>
<rect x="721" y="172" width="1" height="3"/>
<rect x="685" y="190" width="2" height="3"/>
<rect x="770" y="207" width="2" height="2"/>
<rect x="720" y="224" width="3" height="1"/>
<rect x="699" y="233" width="3" height="2"/>
<rect x="725" y="172" width="1" height="2"/>
<rect x="744" y="209" width="3" height="1"/>
<rect x="715" y="201" width="2" height="1"/>
<rect x="752" y="234" width="2" height="2"/>
<rect x="702" y="122" width="2" height="2"/>
<rect x="782" y="188" width="2" height="3"/>
<rect x="713" y="207" width="1" height="1"/>
<rect x="713" y="224" width="1" height="2"/>
<rect x="690" y="189" width="2" height="2"/>
<rect x="690" y="237" width="1" height="2"/>
<rect x="718" y="225" width="2" height="2"/>
<rect x="763" y="162" width="1" height="2"/>
<rect x="719" y="215" width="3" height="3"/>
<rect x="726" y="191" width="1" height="1"/>
<rect x="748" y="220" width="2" height="2"/>
<rect x="709" y="191" width="3" height="3"/>
<rect x="743" y="201" width="2" height="1"/>
<rect x="729" y="164" width="1" height="1"/>
<rect x="774" y="189" width="1" height="2"/>
<rect x="732" y="194" width="2" height="2"/>
<rect x="727" y="199" width="3" height="2"/>
<rect x="702" y="205" width="1" height="2"/>
<rect x="758" y="206" width="1" height="3"/>
<rect x="745" y="208" width="2" height="2"/>
<rect x="726" y="245" width="2" height="2"/>
<rect x="706" y="206" width="3" height="2"/>
<rect x="754" y="203" width="3" height="1"/>
<rect x="696" y="165" width="2" height="2"/>
<rect x="768" y="168" width="2" height="1"/>
<rect x="725" y="210" width="2" height="2"/>
<rect x="728" y="146" width="1" height="3"/>
<rect x="672" y="192" width="1" height="2"/>
<rect x="704" y="188" width="1" height="2"/>
<rect x="728" y="200" width="2" height="2"/>
<rect x="688" y="148" width="2" height="3"/>
<rect x="751" y="178" width="1" height="2"/>
<rect x="692" y="140" width="1" height="3"/>
<rect x="740" y="160" width="2" height="3"/>
<rect x="696" y="212" width="2" height="1"/>
<rect x="733" y="211" width="3" height="2"/>
<rect x="690" y="115" width="2" height="2"/>
<rect x="698" y="187" width="1" height="2"/>
<rect x="707" y="220" width="3" height="3"/>
<rect x="735" y="166" width="1" height="3"/>
<rect x="741" y="191" width="1" height="2"/>
<rect x="712" y="226" width="3" height="2"/>
<rect x="679" y="224" width="1" height="1"/>
<rect x="755" y="138" width="3" height="1"/>
<rect x="720" y="190" width="2" height="2"/>
<rect x="693" y="179" width="2" height="2"/>
<rect x="702" y="197" width="3" height="3"/>
<rect x="709" y="135" width="2" height="1"/>
<rect x="758" y="220" width="1" height="2"/>
<rect x="702" y="219" width="1" height="1"/>
<rect x="781" y="152" width="2" height="2"/>
<rect x="714" y="181" width="1" height="1"/>
<rect x="741" y="187" width="2" height="2"/>
<rect x="686" y="230" width="1" height="1"/>
<rect x="716" y="215" width="2" height="3"/>
<rect x="789" y="174" width="1" height="3"/>
<rect x="714" y="220" width="3" height="1"/>
<rect x="722" y="210" width="2" height="2"/>
<rect x="725" y="273" width="2" height="2"/>
<rect x="743" y="205" width="2" height="1"/>
<rect x="729" y="206" width="2" height="2"/>
<rect x="679" y="187" width="3" height="2"/>
<rect x="746" y="161" width="3" height="2"/>
<rect x="726" y="192" width="1" height="2"/>
<rect x="711" y="265" width="3" height="1"/>
<rect x="745" y="204" width="3" height="2"/>
<rect x="703" y="197" width="1" height="2"/>
<rect x="717" y="193" width="2" height="2"/>
<rect x="731" y="265" width="2" height="3"/>
<rect x="763" y="243" width="3" height="2"/>
<rect x="763" y="274" width="2" height="2"/>
<rect x="707" y="159" width="1" height="2"/>
<rect x="731" y="202" width="2" height="3"/>
<rect x="726" y="178" width="2" height="3"/>
<rect x="744" y="243" width="3" height="3"/>
<rect x="731" y="189" width="2" height="3"/>
<rect x="759" y="187" width="3" height="2"/>
<rect x="715" y="204" width="1" height="2"/>
<rect x="661" y="248" width="1" height="1"/>
<rect x="722" y="210" width="3" height="3"/>
<rect x="734" y="207" width="2" height="3"/>
<rect x="688" y="245" width="2" height="1"/>
<rect x="741" y="204" width="2" height="3"/>
<rect x="813" y="160" width="3" height="2"/>
<rect x="746" y="192" width="1" height="3"/>
<rect x="683" y="249" width="3" height="2"/>
<rect x="682" y="199" width="3" height="2"/>
<rect x="723" y="200" width="1" height="2"/>
<rect x="699" y="233" width="2" height="1"/>
<rect x="732" y="159" width="2" height="2"/>
<rect x="691" y="203" width="1" height="1"/>
<rect x="693" y="207" width="3" height="3"/>
<rect x="734" y="179" width="3" height="3"/>
<rect x="671" y="159" width="3" height="1"/>
<rect x="735" y="181" width="2" height="1"/>
<rect x="777" y="183" width="3" height="3"/>
<rect x="736" y="214" width="3" height="1"/>
<rect x="728" y="204" width="2" height="2"/>
<rect x="753" y="191" width="2" height="2"/>
<rect x="735" y="185" width="1" height="2"/>
<rect x="781" y="200" width="2" height="1"/>
<rect x="749" y="112" width="2" height="2"/>
<rect x="712" y="164" width="1" height="2"/>
<rect x="726" y="183" width="3" height="2"/>
<rect x="696" y="187" width="1" height="2"/>
<rect x="748" y="225" width="3" height="1"/>
<rect x="710" y="225" width="2" height="1"/>
<rect x="708" y="212" width="1" height="2"/>
<rect x="701" y="224" width="2" height="3"/>
<rect x="790" y="187" width="1" height="3"/>
<rect x="759" y="154" width="3" height="1"/>
<rect x="707" y="270" width="3" height="1"/>
<rect x="723" y="209" width="2" height="3"/>
<rect x="680" y="195" width="2" height="3"/>
<rect x="703" y="229" width="2" height="2"/>
<rect x="710" y="267" width="3" height="1"/>
<rect x="694" y="204" width="1" height="1"/>
<rect x="669" y="184" width="1" height="2"/>
<rect x="759" y="192" width="1" height="2"/>
<rect x="689" y="209" width="2" height="2"/>
<rect x="752" y="207" width="3" height="1"/>
<rect x="753" y="155" width="3" height="2"/>
<rect x="776" y="215" width="1" height="2"/>
<rect x="666" y="248" width="1" height="3"/>
<rect x="712" y="209" width="2" height="3"/>
<rect x="670" y="177" width="2" height="2"/>
<rect x="674" y="219" width="2" height="2"/>
<rect x="719" y="169" width="2" height="2"/>
<rect x="715" y="227" width="1" height="2"/>
<rect x="703" y="211" width="3" height="1"/>
<rect x="692" y="148" width="2" height="2"/>
<rect x="711" y="187" width="2" height="2"/>
<rect x="730" y="221" width="1" height="2"/>
<rect x="713" y="185" width="3" height="2"/>
<rect x="746" y="207" width="3" height="2"/>
<rect x="724" y="202" width="1" height="3"/>
<rect x="664" y="180" width="1" height="2"/>
<rect x="680" y="185" width="1" height="1"/>
<rect x="750" y="148" width="2" height="2"/>
<rect x="751" y="179" width="2" height="2"/>
<rect x="719" y="182" width="2" height="2"/>
<rect x="745" y="176" width="1" height="2"/>
<rect x="667" y="204" width="2" height="2"/>
<rect x="721" y="213" width="2" height="2"/>
<rect x="742" y="161" width="1" height="2"/>
<rect x="731" y="198" width="3" height="1"/>
<rect x="723" y="198" width="2" height="2"/>
<rect x="734" y="180" width="2" height="1"/>
<rect x="721" y="222" width="2" height="3"/>
<rect x="695" y="193" width="2" height="2"/>
<rect x="697" y="165" width="2" height="2"/>
<rect x="713" y="200" width="3" height="1"/>
<rect x="768" y="189" width="2" height="2"/>
<rect x="751" y="210" width="2" height="3"/>
<rect x="727" y="108" width="2" height="3"/>
<rect x="729" y="197" width="2" height="2"/>
<rect x="696" y="199" width="2" height="1"/>
</g>
<polygon points="740.0,164.0 748.0,170.0 757.0,172.0 752.0,182.0 748.0,196.0 744.0,208.0 739.0,212.0 736.0,200.0 738.0,188.0 733.0,181.0 724.0,183.0 733.0,176.0 736.0,171.0" fill="#44dccf"/>
<polygon points="711.0,186.0 718.0,186.0 719.0,192.0 710.0,192.0" fill="#44dccf"/>
<polygon points="716.0,219.0 730.0,216.0 742.0,217.0 741.0,230.0 739.0,240.0 734.0,242.0 731.0,233.0 722.0,229.0 714.0,226.0" fill="#44dccf"/>
<polygon points="690.0,200.0 695.0,206.0 697.0,224.0 692.0,226.0 690.0,213.0" fill="#44dccf"/>
<polygon points="788.0,474.0 796.0,472.0 794.0,488.0 789.0,490.0" fill="#44dccf"/>
<polygon points="758.0,172.0 795.0,131.0 797.0,134.0 761.0,175.0" fill="#44dccf"/>
<polyline points="729.9,434.1 730.4,430.0 731.2,425.5 730.1,422.7 730.4,417.6 731.7,413.4 729.6,410.4 727.8,405.6 725.2,402.2 725.5,398.4 727.9,393.6 729.0,390.3 729.4,386.7 733.4,382.8 739.3,380.7 743.0,377.0 743.8,372.6 745.0,368.8 747.6,366.0 748.8,360.7 753.0,357.7 755.5,351.7 757.0,346.6 758.6,341.8 762.3,336.7 762.2,332.8 762.7,327.3 762.9,322.8 761.8,318.3 760.6,313.5 759.0,309.0" fill="none" stroke="#44dccf" stroke-width="1.5"/>
<polyline points="652.7,321.9 655.5,320.4 660.8,322.1 665.6,321.5 669.0,322.2 674.8,321.6 677.9,321.8 683.2,322.0 687.4,321.1 691.7,320.9 696.0,320.8 699.5,320.3 702.8,319.1 706.7,319.3 711.2,317.5 715.5,316.7 718.9,315.5 723.8,315.4 728.3,313.1 733.5,312.1 738.6,310.5 742.9,310.5 747.2,312.2 752.2,311.9 757.1,311.1 760.3,309.2 765.6,309.9 769.1,309.2 775.3,310.5 779.7,310.7 784.6,310.7 789.0,309.8 791.3,309.7 795.6,308.6 799.5,309.5 804.7,308.3 808.8,307.0" fill="none" stroke="#44dccf" stroke-width="1.5"/>
<polyline points="775.2,382.5 780.4,382.3 782.8,385.4 787.6,388.0 791.6,390.9 792.7,394.7 795.5,398.8 799.1,401.1 803.5,406.5 806.9,409.3 806.0,414.1 807.5,419.4 806.7,423.5 807.2,426.2 806.3,431.2 806.8,435.0" fill="none" stroke="#44dccf" stroke-width="1.5"/>
<polyline points="652.7,420.2 656.3,421.3 660.8,421.1 664.0,421.3 669.5,423.2 673.2,422.4 676.3,423.1 680.7,420.8 683.7,421.8 688.8,421.8 693.1,420.3 698.2,419.6 701.9,418.4 706.5,417.5 708.6,417.3 713.7,417.1 718.0,416.5" fill="none" stroke="#44dccf" stroke-width="1.5"/>
<polyline points="748.0,365.6 748.5,369.8 753.2,372.3 755.2,376.9 760.2,380.0 762.7,383.4 767.3,385.2 772.4,383.8 775.8,381.4" fill="none" stroke="#44dccf" stroke-width="1.5"/>
<polyline points="813.0,278.4 810.5,280.9 807.1,283.2 804.2,285.8 800.2,290.3 796.3,293.1 791.4,296.1 789.1,297.7 783.8,300.3 780.0,303.0" fill="none" stroke="#44dccf" stroke-width="1.5"/>
<polyline points="738.0,426.8 742.1,422.7 743.2,420.3 745.3,417.4 749.8,415.5 748.0,410.8 745.1,405.2 744.8,402.0" fill="none" stroke="#44dccf" stroke-width="1.5"/>
<polyline points="442.0,231.9 447.0,230.8 451.5,229.5 456.2,229.9 460.3,229.8 465.1,227.1 469.7,225.7 473.8,224.2 476.9,221.6 479.4,225.4 482.2,228.2 486.1,232.5 488.8,232.9 493.1,231.2 496.9,229.7 502.3,229.8 506.1,229.4 510.0,232.4 513.4,233.8 517.2,231.1 522.1,228.1 527.2,227.4 531.1,227.0 538.1,229.6 541.1,226.7 545.1,223.1 549.3,221.6 552.2,219.3 557.6,217.2 561.5,215.9 565.7,214.6 570.9,214.4 574.2,212.0 579.1,212.3 582.0,212.0" fill="none" stroke="#44dccf" stroke-width="1.5"/>
<polyline points="540.3,234.3 542.3,240.3 543.4,244.0 545.8,249.7 545.6,252.3 547.1,257.4 547.4,261.3 549.0,266.0" fill="none" stroke="#44dccf" stroke-width="1.5"/>
<polyline points="555.2,240.8 560.7,239.8 564.7,238.0 568.9,235.9 571.3,235.2 575.7,233.5 581.6,231.0 585.1,231.5 588.8,229.7 595.2,229.8 598.4,229.2 603.7,228.1 606.0,226.7 611.7,225.7 615.6,225.7 619.2,226.3 623.9,227.5 628.5,227.9 632.6,227.0 636.8,225.8 640.1,224.6 644.1,222.9 647.4,221.6 651.3,219.7 655.3,221.4 661.8,223.6 665.8,223.6 670.7,224.3 674.7,226.1 676.9,227.2 682.5,228.6 686.5,230.9 688.9,231.6 694.2,231.8 697.0,229.9 702.6,227.7 707.1,228.1 710.0,226.0" fill="none" stroke="#44dccf" stroke-width="1.5"/>
<polyline points="602.1,262.9 606.5,261.9 612.0,259.4 614.6,260.0 619.2,260.2 623.8,257.2 627.5,257.1 631.0,257.2 636.8,256.6 640.6,256.0 643.8,255.4 648.7,255.1 651.7,253.3 656.3,253.6 661.4,253.1 665.9,255.5 669.3,255.5 674.3,254.0 680.1,255.3 682.5,253.3 688.7,252.7 691.9,250.8 696.2,250.0 700.8,250.3 704.8,247.9 707.5,248.9 712.1,246.7 714.8,246.6 720.0,245.0" fill="none" stroke="#44dccf" stroke-width="1.5"/>
<polyline points="589.9,153.5 595.0,156.5 596.7,159.5 600.5,162.5 602.8,163.8 607.5,167.0 607.6,171.9 609.9,176.0 610.3,178.4 609.3,182.4 607.8,186.6 605.0,191.6" fill="none" stroke="#44dccf" stroke-width="1.5"/>
<polyline points="441.0,354.1 447.5,353.5 451.9,353.9 454.5,352.3 460.8,351.1 464.3,349.5 469.4,349.2 472.7,346.9 477.5,345.7 481.6,345.4 486.1,343.4 488.7,342.3 493.3,341.0 499.3,340.2 502.2,341.2 506.4,339.8 510.9,337.3 513.8,342.7 513.8,347.2 514.2,351.4 511.4,357.0 510.5,360.7 508.6,364.1 506.8,368.2 509.9,370.1 515.2,372.2 520.0,373.1 522.2,368.6 526.0,365.2 529.1,363.3 531.7,358.0 533.5,353.8 535.6,349.9 537.9,345.0 540.3,342.5 543.4,338.0 544.3,334.8 545.6,329.9 547.0,325.0 548.9,321.9 548.2,317.4 547.2,311.2 547.0,307.1 548.0,302.9 543.2,300.1 538.7,298.3 533.1,296.6 531.0,293.5 527.9,288.5 525.7,284.3 526.4,279.7 530.0,275.0" fill="none" stroke="#44dccf" stroke-width="1.5"/>
<polyline points="473.9,322.4 479.9,320.0 482.9,320.0 488.5,318.3 492.0,316.5 494.9,315.2 500.9,314.7 504.5,313.4 508.6,311.4 513.3,309.4 517.7,306.7 523.2,304.1 526.4,304.4 531.7,301.5 535.0,300.0" fill="none" stroke="#44dccf" stroke-width="1.5"/>
<polyline points="479.4,376.2 482.5,381.8 484.5,385.6 487.7,388.7 489.6,395.2 489.8,397.1 492.3,401.5 492.2,406.2 493.8,410.3 496.3,415.1 493.7,417.4 494.7,423.2 493.7,427.4 491.8,429.7 492.7,435.8 491.2,439.5 491.4,445.9 490.0,450.0" fill="none" stroke="#44dccf" stroke-width="1.5"/>
<polyline points="571.1,377.6 575.2,375.8 578.2,377.1 582.1,376.4 585.5,374.5 591.0,376.1 593.9,376.8 597.9,379.1 602.8,380.1 605.7,379.9 609.7,382.0 613.2,383.1 617.1,386.2 620.7,382.5 621.8,380.4 625.3,375.1 629.1,373.6 630.7,370.4 633.1,366.6 631.9,362.1 632.0,359.0" fill="none" stroke="#44dccf" stroke-width="1.5"/>
<polyline points="617.0,385.3 615.1,390.5 614.2,393.3 611.5,397.6 609.6,402.2 606.0,406.2 604.4,409.4 603.5,413.3 599.9,417.4 597.8,422.0 595.8,425.8 595.7,431.7 592.3,435.2 589.4,439.2 586.8,443.5 585.0,447.0" fill="none" stroke="#44dccf" stroke-width="1.5"/>
<polyline points="593.5,274.8 595.5,278.7 596.9,281.3 597.1,285.8 598.9,291.2 603.1,294.0 606.5,293.9 611.2,294.6 615.4,295.7 617.9,296.4 620.8,301.8 619.9,307.1 621.7,311.2 623.6,315.2 624.3,318.9 627.1,323.0 630.4,326.2 633.2,327.9 636.0,330.9 639.4,335.0 642.0,340.4 644.3,343.0 647.9,346.8 650.0,350.0" fill="none" stroke="#44dccf" stroke-width="1.5"/>
<polyline points="652.2,324.2 650.9,318.3 649.5,315.6 648.4,311.5 648.3,308.0 646.0,303.0" fill="none" stroke="#44dccf" stroke-width="1.5"/>
<polyline points="731.5,435.4 731.3,429.9 730.5,427.7 731.9,423.1 730.6,418.1 729.7,413.8 727.9,409.3 728.1,406.3 726.2,402.1 725.2,398.3 726.8,394.9 730.2,390.6 731.9,387.4 733.2,383.7 733.9,378.1 738.6,376.9 740.8,373.2 743.1,370.3 747.8,368.2 749.0,364.1 752.1,360.3 752.0,355.7 754.8,352.5 755.8,347.8 757.7,344.1 760.0,339.7 760.4,334.5 760.5,330.6 761.2,325.2 763.4,322.0 761.2,315.3 758.9,310.0 760.6,304.9 760.3,300.2 759.0,296.1 758.8,292.4 758.7,287.1 757.2,282.6 756.9,278.7 755.9,274.1 755.0,269.8 754.1,265.5 750.9,259.2 750.0,255.0" fill="none" stroke="#44dccf" stroke-width="1.5"/>
<polyline points="678.9,322.0 682.2,321.3 687.3,322.4 692.2,321.5 696.4,321.1 699.0,321.7 704.5,322.2 707.2,320.4 710.8,320.6 715.8,317.5 719.6,317.4 723.5,315.2 728.6,315.1 733.5,312.5 739.3,311.3 742.8,310.3 747.7,310.5 749.7,310.1 755.4,310.7 759.0,311.0" fill="none" stroke="#44dccf" stroke-width="1.5"/>
<polyline points="727.5,385.9 723.7,383.5 722.2,378.1 717.7,376.6 712.9,373.4 709.4,374.1 704.7,375.4 701.0,375.9 697.6,376.2 693.0,377.0" fill="none" stroke="#44dccf" stroke-width="1.5"/>
<polyline points="774.8,306.3 780.2,305.7 783.1,304.1 788.4,304.4 791.3,302.0 796.4,300.0 799.3,298.5 801.6,295.3 803.2,290.3 806.6,288.5 808.3,284.5 811.6,281.5 813.0,278.0" fill="none" stroke="#44dccf" stroke-width="1.5"/>
<polyline points="775.5,381.2 778.4,382.9 781.6,386.1 786.0,389.9 788.8,390.6 793.2,393.4 793.4,396.2 796.7,401.1 800.0,403.8 801.6,406.6 805.2,410.8 804.2,414.9 805.6,419.1 804.5,422.8 805.9,427.0 805.3,431.2 806.7,434.5 807.4,439.2 810.2,443.5 810.9,446.9 813.3,451.0 815.0,455.0" fill="none" stroke="#44dccf" stroke-width="1.5"/>
<polyline points="652.4,419.9 656.6,420.0 661.5,421.9 665.9,422.5 669.1,420.6 674.4,421.3 677.9,422.1 682.1,422.0 687.6,421.5 692.0,420.1 695.9,420.0 698.7,420.2 702.7,417.7 708.4,417.6 712.8,415.4 715.1,416.3 719.3,415.6 724.0,414.0" fill="none" stroke="#44dccf" stroke-width="1.5"/>
<polyline points="784.0,324.6 788.2,323.9 791.9,322.6 795.2,321.6 800.5,321.6" fill="none" stroke="#44dccf" stroke-width="1.5"/>
<polyline points="729.8,434.0 729.7,439.5 729.7,442.7 728.3,447.4" fill="none" stroke="#44dccf" stroke-width="1.5"/>
<polyline points="742.6,439.0 745.9,442.6 748.6,446.0 753.7,450.2 756.0,451.7 760.7,456.7 762.5,459.4 765.8,464.7 769.1,468.5 768.1,472.6 767.5,478.7 772.1,479.1 775.8,478.0" fill="none" stroke="#44dccf" stroke-width="1.5"/>
<polyline points="731.6,464.5 732.4,469.0 734.2,472.4 734.4,476.7 735.9,479.4 730.4,484.5" fill="none" stroke="#44dccf" stroke-width="1.5"/>
<polyline points="788.9,476.6 792.7,474.1 795.5,473.2 794.8,478.0 793.5,484.7 792.7,489.7 791.9,494.6 789.4,499.2 788.0,503.0" fill="none" stroke="#44dccf" stroke-width="1.5"/>
<polyline points="792.4,490.8 794.8,494.7 797.1,502.1 801.5,500.1 806.4,501.4 810.8,501.0" fill="none" stroke="#44dccf" stroke-width="1.5"/>
<polyline points="651.1,467.4 652.6,473.6 655.2,478.2 655.8,482.8 654.9,485.5 654.1,491.1 653.9,493.9 652.6,499.0 653.5,503.8 652.0,507.5 651.4,511.6 650.0,515.1 649.5,520.3 647.7,524.3 647.5,529.8 645.9,535.0 646.0,537.8 644.6,541.7 642.8,546.3 640.4,550.8 640.0,555.0" fill="none" stroke="#44dccf" stroke-width="1.5"/>
<polyline points="754.1,173.4 759.1,171.1 759.8,167.0 765.2,164.4 766.8,160.9 769.2,158.8 773.0,154.1 776.5,153.1 779.7,150.2 780.9,145.8 784.9,142.0 788.9,139.6 789.9,136.5 794.0,134.0" fill="none" stroke="#44dccf" stroke-width="1.5"/>
<polyline points="651.7,154.3 655.0,152.1 660.9,152.7 664.5,149.5 668.7,148.2 671.8,146.7 677.0,146.0" fill="none" stroke="#44dccf" stroke-width="1.5"/>
<polyline points="676.2,144.9 676.8,150.8 677.4,153.7 678.1,158.8 679.8,163.0 678.6,165.5 678.9,169.8 681.6,173.7 681.4,177.0 681.7,181.6 681.8,186.9 682.7,190.8 684.7,192.9 683.9,199.0 685.8,202.4 687.0,206.3 688.7,211.1 690.0,215.0" fill="none" stroke="#44dccf" stroke-width="1.5"/>
<polyline points="669.5,150.8 671.0,154.9 671.3,158.7 671.3,163.0 670.3,166.4 671.8,171.1 671.8,176.0 671.4,180.9 673.3,185.0 674.3,187.7 674.9,191.8 675.5,196.8 676.0,200.0" fill="none" stroke="#44dccf" stroke-width="1.5"/>
<polyline points="687.9,149.8 687.4,155.1 688.4,158.4 688.9,162.5 690.1,166.7 689.0,170.8 690.8,175.0 691.8,179.3 692.3,183.7 692.8,187.9 695.8,192.7 695.7,196.8 697.0,200.0" fill="none" stroke="#44dccf" stroke-width="1.5"/>
<polyline points="779.2,214.1 784.6,217.4 787.4,216.9 791.4,220.1 797.0,221.3 799.4,221.3 803.5,224.4 807.1,224.6 811.9,226.4 817.2,227.5 819.7,227.9 824.3,228.6 827.3,230.9 831.3,231.9 836.9,234.0 840.0,235.0" fill="none" stroke="#44dccf" stroke-width="1.5"/>
<polyline points="759.5,175.6 762.2,178.9 764.8,181.7 769.9,183.6 771.6,187.7 774.3,190.7 777.0,193.9 781.3,195.6 783.8,199.9 786.1,201.7 790.9,203.8 794.3,207.0 796.5,209.5 799.7,212.6 802.7,215.5 806.4,217.9 810.0,220.0" fill="none" stroke="#44dccf" stroke-width="1.5"/>
<polyline points="649.4,270.6 652.4,274.1 656.2,278.0 659.3,280.8 662.6,284.3 664.2,287.6 666.8,292.8 667.6,295.6 670.0,300.0" fill="none" stroke="#44dccf" stroke-width="1.5"/>
<polyline points="799.4,389.5 802.3,392.3 807.7,395.9 809.7,399.0 812.7,404.9 815.0,410.0" fill="none" stroke="#44dccf" stroke-width="1.5"/>
<polyline points="744.5,205.7 745.1,210.5 743.0,214.0" fill="none" stroke="#44dccf" stroke-width="1.5"/>
<polyline points="660.4,140.1 659.9,144.2 662.2,147.0 662.6,151.4 664.1,154.8 664.3,160.6 667.1,164.2 667.2,167.3 669.7,172.8 669.5,175.1 672.7,179.5 672.8,184.7 674.9,187.7 676.4,192.6 679.0,195.3 679.3,200.1 683.2,204.3 684.8,208.4 686.5,211.7 690.8,213.9 692.9,217.2 696.5,220.3 700.3,222.1 705.0,225.0" fill="none" stroke="#44dccf" stroke-width="1.5"/>
<polyline points="648.9,160.3 652.9,162.9 656.0,165.5 659.4,167.7 664.1,170.8 667.6,172.8 669.9,175.0 674.4,177.0 677.5,179.3 680.9,181.5 683.5,185.3 686.6,186.9 691.0,190.6 693.5,191.4 697.3,193.5 702.0,195.6 706.1,198.4 710.0,200.0" fill="none" stroke="#44dccf" stroke-width="1.5"/>
<polyline points="699.2,149.7 701.2,153.7 703.4,158.4 706.3,163.0 708.8,167.2 708.9,170.9 712.5,173.1 716.7,175.3 718.8,179.0 722.3,182.3 725.0,185.0" fill="none" stroke="#44dccf" stroke-width="1.5"/>
<polyline points="679.6,211.2 683.4,211.7 688.2,211.0 691.4,212.3 696.6,215.0 700.3,216.0 703.6,213.6 708.6,213.4 711.9,214.0 716.4,213.5 721.1,211.5 723.1,211.8 728.8,208.3 731.6,208.7 735.6,206.2 740.0,205.0" fill="none" stroke="#44dccf" stroke-width="1.5"/>
<polyline points="659.8,224.4 665.3,226.9 668.5,227.1 672.0,227.5 678.3,228.7 680.6,227.4 685.6,229.1 690.7,231.1 695.4,231.1 699.0,231.4 703.9,232.9 706.6,235.0 712.0,235.0" fill="none" stroke="#44dccf" stroke-width="1.5"/>
<polyline points="719.0,148.8 721.8,153.4 724.3,157.8 727.2,162.3 730.0,165.0" fill="none" stroke="#44dccf" stroke-width="1.5"/>
<polyline points="769.7,190.9 774.6,192.7 778.0,196.1 782.3,197.9 786.1,200.5 788.6,201.5 792.9,204.5 795.6,207.8 800.0,210.0" fill="none" stroke="#44dccf" stroke-width="1.5"/>
<polyline points="749.7,230.0 752.9,231.6 758.6,234.9 763.0,236.1 765.7,237.2 770.4,240.2 773.4,242.1 778.5,244.5 781.3,245.2 785.6,246.8 790.0,250.0" fill="none" stroke="#44dccf" stroke-width="1.5"/>
<polyline points="700.5,240.7 700.8,245.5 703.2,251.2 706.2,254.3 702.2,259.2 701.2,265.7 700.0,270.0" fill="none" stroke="#44dccf" stroke-width="1.5"/>
<polyline points="747.5,199.1 751.3,200.8 752.9,204.8 755.5,208.2 758.1,210.6 759.1,215.7 762.1,219.1 765.7,221.8 768.2,227.1 770.0,230.0" fill="none" stroke="#44dccf" stroke-width="1.5"/>
<polyline points="710.9,217.3 708.7,213.9 707.7,210.3 704.1,208.0 701.7,204.1 700.7,200.2 696.8,196.3 697.1,192.1 694.6,187.7 691.0,185.2 689.3,179.0 687.7,175.4 688.1,171.2 686.2,166.8 686.0,164.5 684.0,160.0" fill="none" stroke="#44dccf" stroke-width="1.5"/>
<polyline points="722.7,229.6 720.7,233.1 720.1,237.7 718.2,240.9 715.7,246.8 714.1,250.0 713.9,254.9 713.7,261.1 712.0,265.0" fill="none" stroke="#44dccf" stroke-width="1.5"/>
<polyline points="699.7,164.2 702.1,171.1 703.2,175.9 706.0,179.3 704.9,182.9 706.2,187.9 708.4,191.7 708.5,195.5 710.0,200.0" fill="none" stroke="#44dccf" stroke-width="1.5"/>
<polyline points="660.3,150.9 661.2,153.9 661.0,157.3 661.9,162.6 661.1,167.5 662.4,171.7 661.8,174.3 662.8,180.0 665.0,183.2 665.7,187.1 665.3,190.6 667.0,194.8 667.8,199.5 668.2,205.0 670.0,209.9 672.0,215.0" fill="none" stroke="#44dccf" stroke-width="1.5"/>
<polyline points="639.5,140.9 641.2,144.8 643.7,148.2 646.2,152.2 647.5,156.3 649.7,159.7 651.5,163.0 651.8,167.4 652.3,171.3 653.2,177.5 654.8,181.9 655.0,185.0" fill="none" stroke="#44dccf" stroke-width="1.5"/>
<polyline points="780.0,181.0 784.5,180.0 788.1,182.0 791.6,182.4 795.1,184.7 800.5,184.2 805.0,185.9 807.7,189.3 811.6,191.7 817.2,193.5 820.0,195.0" fill="none" stroke="#44dccf" stroke-width="1.5"/>
<polyline points="770.3,259.3 774.3,259.9 779.0,260.9 781.2,262.5 785.1,264.2 789.7,265.5 793.4,265.2 797.8,266.6 803.1,268.8 807.1,269.8 810.9,269.7 813.2,270.9 817.1,273.1 821.3,272.4 826.1,275.0 830.0,275.0" fill="none" stroke="#44dccf" stroke-width="1.5"/>
<polyline points="820.0,289.0 823.8,292.0 827.6,294.8 831.4,296.9 835.0,300.0" fill="none" stroke="#44dccf" stroke-width="1.5"/>
<polyline points="500.4,249.2 504.6,253.1 507.0,255.2 512.3,259.4 514.9,262.7 515.6,266.6 516.5,270.3 517.6,276.3 520.3,280.5 519.4,283.7 519.1,289.1 516.0,293.2 516.4,297.1 515.0,300.0" fill="none" stroke="#44dccf" stroke-width="1.5"/>
<polyline points="471.0,259.8 473.0,263.1 475.7,266.7 479.9,269.0 479.4,273.3 479.4,277.7 478.5,282.0 479.5,286.3 478.0,290.0" fill="none" stroke="#44dccf" stroke-width="1.5"/>
<polyline points="559.6,300.4 563.3,304.3 566.1,306.0 566.7,309.8 569.9,312.9 571.9,317.1 575.8,319.2 577.0,324.2 577.4,327.9 576.9,332.8 578.4,335.9 580.2,340.7 581.0,344.1 582.2,349.0 582.9,353.9 585.4,357.4 587.4,361.1 590.0,365.0" fill="none" stroke="#44dccf" stroke-width="1.5"/>
<polyline points="599.7,419.0 603.4,421.3 608.9,423.9 611.5,425.8 617.0,426.9 619.1,429.7 625.1,430.0 628.7,427.1 632.9,427.7 636.5,425.4 639.6,423.8 643.3,422.2 645.7,419.1 650.2,418.1 653.3,414.7 657.3,413.0 660.0,410.0" fill="none" stroke="#44dccf" stroke-width="1.5"/>
<polyline points="540.1,400.3 543.5,403.5 544.5,406.1 546.6,410.1 549.1,414.2 553.4,416.4 555.9,420.9 556.4,424.4 558.0,428.1 558.2,431.3 559.0,436.5 560.0,440.0" fill="none" stroke="#44dccf" stroke-width="1.5"/>
<polyline points="690.2,490.5 692.7,494.7 693.5,497.4 695.3,501.3 697.4,506.7 699.0,511.0 701.8,514.7 702.7,517.7 703.3,521.7 703.4,526.8 705.0,530.0" fill="none" stroke="#44dccf" stroke-width="1.5"/>
<polyline points="661.1,520.8 662.5,525.0 665.0,529.0 666.4,532.4 667.7,536.8 671.0,540.7 668.3,544.8 667.1,547.2 666.0,552.0 665.2,554.9 665.0,560.0" fill="none" stroke="#44dccf" stroke-width="1.5"/>
<polyline points="800.4,339.2 805.2,338.8 809.6,336.9 815.0,335.0" fill="none" stroke="#44dccf" stroke-width="1.5"/>
<polyline points="790.2,420.5 793.2,422.9 794.6,426.2 798.5,429.7 801.1,433.4 802.8,435.6 805.1,440.4 808.8,443.8 810.2,445.0 813.5,450.0 817.7,451.2 820.0,455.0" fill="none" stroke="#44dccf" stroke-width="1.5"/>
<polyline points="740.9,500.0 742.8,501.1 748.8,502.6 753.1,504.0 755.9,502.9 759.8,505.4 764.9,504.7 766.8,504.0 773.2,502.2 777.1,502.2 780.0,500.0" fill="none" stroke="#44dccf" stroke-width="1.5"/>
<polyline points="519.9,199.9 523.7,198.5 527.1,194.0 532.0,191.6 535.7,189.4 539.1,188.3 545.0,185.0" fill="none" stroke="#44dccf" stroke-width="1.5"/>
<polyline points="468.9,199.6 474.5,201.7 477.5,204.0 482.5,206.7 485.5,208.1 490.0,210.0" fill="none" stroke="#44dccf" stroke-width="1.5"/>
<polyline points="601.0,189.6 603.8,193.2 606.9,195.9 609.1,200.6 614.3,202.6 621.0,202.9 625.0,205.0" fill="none" stroke="#44dccf" stroke-width="1.5"/>
<polyline points="585.4,350.1 589.0,352.6 595.7,353.1 600.0,355.4 603.9,354.8 607.9,357.8 612.9,358.9 616.3,360.0 620.0,360.0" fill="none" stroke="#44dccf" stroke-width="1.5"/>
<polyline points="667.7,291.8 670.0,294.4 673.4,297.0 675.4,300.2 676.2,302.6 678.7,305.2 678.5,308.5 676.2,311.9 677.8,313.4 680.1,316.6 681.3,320.2 683.1,323.4 686.5,324.1 689.8,326.1 692.2,326.8 696.4,326.6 700.1,327.1 699.9,330.9 700.0,334.2 700.6,336.6 701.7,341.0 704.1,340.3 707.9,341.1 710.9,341.1 713.2,342.9 716.7,343.2 719.7,346.3 722.3,348.6 724.2,348.5 727.1,349.7 731.2,349.3 733.4,350.3 737.3,350.9 739.6,351.5 743.1,351.7 744.4,350.0 748.7,349.3 751.2,348.0 752.1,346.0 753.1,343.3 754.7,340.3 755.5,336.8 753.6,331.6 753.0,327.8" fill="none" stroke="#2a6a6c" stroke-width="1.1"/>
<polyline points="651.6,380.7 655.7,381.7 659.5,380.1 663.0,382.4 665.7,384.1 667.1,386.9 670.0,387.4 673.4,389.1 675.8,387.3 677.8,386.6 680.7,385.3 683.0,383.4" fill="none" stroke="#2a6a6c" stroke-width="1.1"/>
<polyline points="683.6,358.6 687.2,357.2 689.4,356.8 693.3,354.5 697.0,355.0 699.6,353.0 702.9,352.2 705.9,353.4 707.6,349.0 709.0,346.6 711.1,344.6 714.0,342.0" fill="none" stroke="#2a6a6c" stroke-width="1.1"/>
<polyline points="753.0,347.9 753.7,351.5 754.3,354.2 755.6,357.4 757.0,361.6 760.8,364.8 762.9,366.7 766.2,366.3 768.7,366.1 772.3,366.2 776.1,364.9 774.2,368.4 773.4,370.3 772.0,374.1 771.9,377.3 773.0,379.9 773.4,384.7 773.8,387.3 775.8,391.1 776.7,392.9 773.1,396.7 771.2,400.0 766.9,401.4 769.7,405.0 770.6,408.9 772.5,411.2 773.7,414.1 777.6,413.2 779.3,412.6 781.0,410.3 783.0,407.9 785.3,405.3 788.5,401.3 790.0,402.4 793.8,403.8 796.8,406.1 797.0,410.0 798.4,411.8 798.6,414.9 800.8,417.7 802.1,421.7 802.1,425.9 802.2,429.1 804.5,432.0 804.6,435.0" fill="none" stroke="#2a6a6c" stroke-width="1.1"/>
<polyline points="651.6,397.9 655.1,398.9 656.5,401.7 658.9,402.6 661.6,404.1 665.7,406.9 668.2,408.3 669.1,409.7 672.8,412.6 675.7,414.1 677.1,415.4 680.9,417.2 683.6,418.9 685.5,420.5 688.9,424.5 691.7,426.8 691.7,429.9 693.0,435.0" fill="none" stroke="#2a6a6c" stroke-width="1.1"/>
<polyline points="768.1,401.6 764.5,405.3 762.4,409.5 765.2,412.1 765.6,415.6 767.5,417.8 767.6,422.2 767.8,425.3 767.6,428.5 766.8,431.2 767.5,435.0" fill="none" stroke="#2a6a6c" stroke-width="1.1"/>
<polyline points="497.8,155.1 501.0,157.5 503.3,157.8 502.7,162.2 502.0,164.5 503.1,169.9 506.1,173.7 509.7,174.0 514.8,176.0 516.2,178.9 517.8,180.4 520.7,181.8 525.3,182.6 526.6,185.9 528.1,190.5 529.0,193.4 531.0,194.7 533.0,196.3 535.8,198.5 539.7,199.1 542.1,202.8 544.5,206.4 545.3,208.3 547.0,211.9 548.0,214.9 549.5,219.3 551.3,218.3 554.6,218.5 558.5,216.8 561.5,217.0 564.2,213.8 565.4,209.5 569.4,211.2 572.9,212.2 575.1,213.4 580.0,211.8 582.2,210.5 586.9,208.4 588.5,208.5 593.1,209.6 595.0,210.2 598.0,211.3 603.1,210.0 606.5,207.5 608.1,205.3 607.6,202.6 609.5,198.1 608.9,196.2 609.4,192.0 610.9,188.9 614.2,186.4 615.9,185.1 618.8,182.6 620.6,179.5 620.3,176.1 622.0,173.0 622.3,169.8 623.9,167.1 622.7,164.3 622.8,160.4 622.4,155.9 618.3,155.9 615.6,155.9 612.7,153.5 609.3,152.6 606.7,152.0 604.0,151.1 600.3,149.7 598.6,149.8 594.7,148.6 593.0,148.6 589.5,147.4 586.3,146.2 582.0,144.7 580.1,145.2 575.4,144.5 572.3,143.4 570.0,142.0" fill="none" stroke="#2a6a6c" stroke-width="1.1"/>
<polyline points="548.6,218.3 547.8,222.1 545.9,226.4 545.4,229.5 543.1,231.7 540.6,236.7 539.9,239.5 537.2,242.3 537.6,243.9 536.2,247.7 534.6,251.0 532.5,254.3 531.6,256.9 531.8,260.4 532.0,264.0 531.0,266.6 530.1,269.4 534.6,272.4 536.3,275.0 534.7,278.1 534.6,281.2 532.6,283.0 529.8,285.9 529.8,289.5 529.8,292.9 528.3,296.4 526.6,299.5 522.3,301.0 520.6,303.1 516.1,300.8 513.6,301.0 510.3,298.0 508.8,298.5 504.8,297.3 502.0,294.3 500.5,296.4 497.8,299.5 496.1,303.1 494.0,304.8 491.1,306.0 488.7,308.5 485.7,310.7 482.0,312.7 480.8,313.6 478.0,314.5 476.0,318.0 475.0,321.6" fill="none" stroke="#2a6a6c" stroke-width="1.1"/>
<polyline points="585.3,201.4 588.4,203.6 592.5,205.2 593.9,207.0 594.6,210.7 597.2,214.0 596.3,218.9 597.5,220.4 599.9,223.9 602.0,227.2 605.2,230.5 607.6,233.7 606.4,236.1 605.1,238.0 606.2,242.2 604.7,244.4 607.3,247.9 607.8,250.1 610.8,253.3 611.6,254.7 614.5,257.4 616.6,260.7 619.0,262.0 616.9,263.2 614.9,263.7 611.4,262.7 607.4,264.7 604.4,265.0 601.6,265.1 599.4,266.0 595.3,265.8 592.0,267.6 590.0,267.7 586.1,268.7 584.9,269.6 581.0,268.5 577.6,270.2 578.4,272.7 580.6,275.1 582.0,279.1 584.1,280.8 584.9,283.6 586.0,286.9 588.9,288.1 590.0,291.0 593.4,292.7 595.5,294.9 593.0,297.9 592.2,301.1 589.0,303.4 587.2,306.2 586.1,308.7 581.3,312.5 582.0,315.5 584.8,320.3 585.5,323.1 585.7,325.7 583.4,328.5 579.2,329.9 575.4,332.3 572.4,335.4 569.3,338.6 571.2,341.6 572.0,344.7 573.8,347.4 571.1,350.9 569.7,352.7 567.4,356.2 566.9,359.5 563.0,360.4 559.5,363.1 556.0,364.4 553.3,365.0 551.5,367.8 547.4,369.3 545.8,370.8 542.8,372.2 540.3,374.6 537.6,375.7 534.1,376.4 532.8,380.1 531.4,382.8 530.8,387.1 528.4,389.6 528.1,393.3 526.4,394.9 525.8,397.9 523.6,402.6 524.7,404.3 524.2,407.8 522.9,410.2 522.4,413.5 518.2,415.4 515.9,416.1 512.8,415.8 510.2,417.4 506.0,417.9 506.0,421.8 506.5,424.4 507.8,428.8 508.4,432.1 507.1,434.0 508.9,439.0 510.7,441.9 511.0,445.1 512.1,448.9 512.2,450.5 513.6,454.4 513.6,457.3 514.0,460.0" fill="none" stroke="#2a6a6c" stroke-width="1.1"/>
<polyline points="616.1,157.3 619.2,156.5 622.7,156.1 625.8,155.6 630.6,155.2 633.2,155.0 636.7,154.9 638.3,154.7 642.8,154.5 646.0,152.9 647.9,152.1 652.0,152.4" fill="none" stroke="#2a6a6c" stroke-width="1.1"/>
<polyline points="619.1,246.5 622.3,245.5 625.1,246.5 628.6,245.1 631.4,245.0 633.7,243.7 636.5,242.0 639.2,242.0 642.2,241.3 646.1,239.7 649.4,239.3 651.1,239.4 654.9,239.9 659.2,239.3 662.8,238.9 664.8,238.5 668.0,238.4 672.4,238.9 674.9,237.6 679.0,236.6 684.0,236.2 685.3,236.0 689.1,234.2 692.0,233.2 696.0,232.9 699.4,231.0" fill="none" stroke="#2a6a6c" stroke-width="1.1"/>
<polyline points="585.9,326.0 589.4,327.6 591.8,327.5 594.2,328.5 598.7,328.7 600.2,329.5 604.0,331.4 607.8,332.1 610.6,333.8 614.0,335.4 615.9,335.3 621.1,337.7 623.3,338.1 626.0,336.7 629.9,335.1 632.6,333.5 636.4,333.2 639.1,333.0 643.5,334.3 646.1,334.3 649.3,335.9 651.1,337.1 655.1,338.6 656.8,339.8 659.3,342.9 662.2,343.6 665.6,343.8 668.1,345.8 671.7,347.9 673.8,350.2 676.0,354.2 677.4,355.8 680.0,359.4 683.8,362.0 682.8,364.2 684.5,367.9 683.0,370.6 684.6,373.7 684.3,377.8 685.2,379.4 685.9,383.4 681.5,385.1 678.9,387.0 675.6,388.4 672.2,389.7 669.0,387.7 666.1,388.1 663.2,385.2 661.7,385.4 657.9,384.0 654.9,382.3 651.7,380.1 650.8,383.6 648.6,387.0 645.4,389.5 644.1,393.3 641.5,395.1 639.8,397.3 637.3,397.6 633.9,399.4 630.1,399.8 626.5,398.8 622.7,400.8 622.3,403.1 621.7,407.4 622.5,409.6 621.1,414.1 618.5,415.6 616.5,418.4 613.0,421.0 610.4,423.3 610.4,426.3 609.8,428.6 608.5,432.3 607.6,434.8 606.6,438.6 606.9,441.0 606.7,444.6 605.8,447.2 605.0,450.0" fill="none" stroke="#2a6a6c" stroke-width="1.1"/>
<polyline points="595.2,294.9 597.9,292.3 599.0,290.0 602.1,287.7 604.3,284.3 608.0,282.7 610.4,281.5 613.0,280.6 615.4,279.2 618.9,278.9 621.8,278.0 624.5,278.4 626.7,279.3 629.6,281.1 632.9,280.5 636.6,281.3 636.5,285.7 638.2,289.2 638.3,292.7 640.5,294.7 643.5,294.6 645.5,296.5 648.0,295.9 652.8,296.8 655.7,295.3 657.9,296.0 661.3,294.8 665.9,293.2 669.4,292.4 669.4,289.8 670.9,285.9 671.8,283.9 672.5,281.7 671.6,277.7 675.5,276.6 679.3,274.6 682.9,273.4 685.4,273.7 690.6,276.2 693.0,276.0" fill="none" stroke="#2a6a6c" stroke-width="1.1"/>
<polyline points="675.8,304.2 680.2,304.8 682.7,304.2 686.9,303.4 690.4,302.3 692.1,301.0 696.3,300.1 699.0,297.3 700.9,296.8 704.0,296.2 708.0,294.6 710.5,292.7 712.5,293.7 716.1,294.5 719.4,295.7 721.9,296.8 725.7,294.6 728.4,294.3 730.9,292.3 735.0,290.0 738.6,290.8 742.1,291.9 746.8,292.9 749.3,291.9 753.5,290.5 755.0,293.6 759.2,294.9 759.8,297.6 764.2,301.8 765.7,303.0 767.9,303.0 770.8,304.7 774.2,304.8 778.5,303.7 782.6,304.4 786.9,302.2 789.0,303.0 792.6,301.5 796.9,301.9 799.2,302.7 802.0,303.4 805.3,305.1 807.7,306.8 811.0,307.0" fill="none" stroke="#2a6a6c" stroke-width="1.1"/>
<polyline points="683.2,360.7 685.9,359.5 688.7,357.2 690.3,353.8 693.1,352.8 695.6,352.6 699.3,351.5 702.4,352.9 706.4,352.4 708.4,352.1 712.5,352.2 715.6,352.2 718.1,351.6 721.2,351.2 724.2,351.2 727.8,350.6 730.4,350.1 735.3,351.3 737.0,350.8 741.0,350.4 745.3,348.4 748.1,348.6 751.5,348.8 752.5,351.2 753.4,352.8 755.3,355.2 756.9,359.4 758.1,361.0 760.3,363.8 761.3,368.0 764.0,366.2 768.0,366.7 772.2,365.7 775.6,366.0 774.4,367.4 773.4,371.9 772.9,373.7 771.1,376.1 772.0,380.5 774.0,384.7 773.9,387.5 774.7,390.2 775.2,393.8 772.5,396.6 770.3,400.2 768.4,402.4 769.2,405.2 768.2,408.7 769.0,411.8 771.6,415.0 772.5,417.7 771.2,421.0 772.7,424.9 773.5,428.0 773.6,432.5 773.5,434.4 772.0,435.4 769.4,438.6 769.3,442.1 766.7,445.0 763.9,447.8 762.7,449.0 760.2,450.9 759.7,453.7 759.0,457.0 755.8,457.6 753.0,458.1 750.3,456.8 745.9,458.2 744.1,456.8 741.3,458.3 737.2,458.7 734.4,461.3 730.3,461.0 728.0,458.5 724.9,454.6 720.9,455.2 716.9,455.9 714.8,455.5 711.1,456.1 708.4,455.1 705.2,457.4 701.8,459.6 697.2,460.7 695.0,462.0" fill="none" stroke="#2a6a6c" stroke-width="1.1"/>
<polyline points="698.5,336.0 701.8,337.6 705.1,339.0 707.1,340.2 709.2,342.1 711.9,342.5 714.8,344.6 717.6,345.0 720.5,346.7 725.4,348.5 727.4,349.4 730.4,348.5 734.5,350.4" fill="none" stroke="#2a6a6c" stroke-width="1.1"/>
<polyline points="752.0,331.8 754.0,335.8 753.2,337.6 753.5,341.2 754.3,344.8 755.0,348.0" fill="none" stroke="#2a6a6c" stroke-width="1.1"/>
<polyline points="651.8,398.6 654.7,399.7 658.9,401.6 659.9,403.4 663.1,404.1 666.4,407.2 669.4,408.4 672.1,410.4 675.0,412.3 678.2,413.6 681.0,414.3 683.6,417.9 685.8,419.6 688.7,420.5 690.5,424.7 690.5,427.7 693.0,431.9 693.6,435.8 688.8,434.4 690.7,437.7 691.2,442.0 691.6,445.4 691.8,448.7 692.3,451.8 693.1,455.6 695.0,458.8 695.8,462.0 698.8,463.5 702.7,464.6 704.0,466.3 702.1,470.9 701.8,473.3 700.7,476.5 702.2,479.5 703.7,481.1 705.8,483.2 708.1,487.3 706.1,488.7 704.2,491.6 703.2,495.8 702.2,497.9 700.7,501.2 702.9,504.8 703.3,508.5 704.1,512.5 706.3,515.0 707.1,517.2 709.6,521.2 711.8,522.4 714.2,526.2 712.5,528.7 709.7,533.1 707.6,535.4 706.8,539.0 707.7,544.0" fill="none" stroke="#2a6a6c" stroke-width="1.1"/>
<polyline points="775.3,393.9 779.3,395.0 782.6,397.1 785.6,399.1 786.6,400.9 790.8,402.4 794.4,404.3 795.9,405.1 798.1,408.8 798.9,411.5 801.3,413.4 801.8,416.5 803.9,419.8 804.1,423.4 804.2,424.7 805.6,427.9 807.0,432.1 806.2,435.9 805.3,434.5 805.1,437.4 807.9,440.5 808.9,442.9 811.4,447.6 812.5,450.6 812.8,453.3 815.6,455.0 815.1,459.5 816.5,461.9 817.0,466.7 819.9,463.3 824.1,462.5 826.4,460.0 828.7,458.2 833.5,455.6" fill="none" stroke="#2a6a6c" stroke-width="1.1"/>
<polyline points="700.1,162.1 698.4,166.5 697.6,168.1 696.5,171.7 695.2,174.3 693.1,176.7 692.1,180.1 693.9,184.2 692.5,188.1 692.3,190.8 694.1,195.6 694.8,197.3 695.9,201.3 697.2,203.8 696.9,208.9 696.5,212.5 698.0,215.8 696.6,218.4 697.0,221.3 697.6,225.2 696.4,229.5 699.4,231.0" fill="none" stroke="#2a6a6c" stroke-width="1.1"/>
<polyline points="714.9,178.8 717.0,178.0 719.6,177.7 723.0,177.4 725.4,176.2 726.3,180.4 727.3,183.4 729.6,185.6 730.8,189.7 733.2,189.8 735.8,191.5 740.1,192.6 743.2,192.3 746.8,193.3 747.1,196.5 747.1,201.0 747.5,203.5 748.7,208.0 747.0,209.4 743.6,212.0 741.6,213.6 738.3,217.0 736.3,217.0 733.0,219.0 729.4,220.1 727.4,220.9 723.1,222.8 722.8,225.5 721.1,228.2 718.7,230.6 717.8,234.1 716.4,235.7 713.1,238.2 715.3,241.4 715.3,245.1 716.4,247.9 716.8,250.1 718.2,252.7 720.1,256.0 719.9,260.9 721.4,263.3 723.6,266.8 725.0,270.6 726.3,273.4 727.0,275.6 728.3,279.6 730.6,282.7 732.0,285.7 733.3,286.7 734.5,290.6" fill="none" stroke="#2a6a6c" stroke-width="1.1"/>
<polyline points="768.4,241.2 769.9,241.4 773.5,239.7 777.0,238.7 779.5,239.2 783.6,240.7 785.1,242.9 788.4,244.6 791.0,245.7 792.8,247.5 796.7,249.9 798.9,251.6 801.2,251.7 804.4,252.4 807.9,254.8 810.1,255.7 814.7,253.6 816.1,253.5 819.8,250.8 822.5,250.2 826.0,248.3 829.5,246.5 832.0,247.1 835.7,245.8 838.5,244.9 841.8,245.0" fill="none" stroke="#2a6a6c" stroke-width="1.1"/>
<polyline points="733.9,250.4 737.3,250.0 740.9,250.6 744.3,251.3 747.0,251.1 750.2,251.1 753.9,252.1 755.7,253.0 759.6,254.1 761.6,251.8 764.9,250.6 767.4,249.4 766.6,245.1 767.5,241.0" fill="none" stroke="#2a6a6c" stroke-width="1.1"/>
<polyline points="652.8,240.6 650.2,243.8 649.3,246.4 646.7,247.9 645.2,250.6 644.0,253.3 643.9,256.5 641.6,259.4 640.3,261.4 637.6,264.8 634.8,265.1 632.7,268.2 630.3,270.6 627.0,270.8 624.9,272.0 620.5,273.1 618.5,274.1 615.0,275.0" fill="none" stroke="#2a6a6c" stroke-width="1.1"/>
</g>
<polygon points="560.0,113.3 566.7,113.5 571.2,111.9 577.2,111.1 584.6,111.1 589.6,111.4 597.3,115.6 602.4,116.1 607.4,115.4 611.9,116.8 617.5,117.6 622.6,121.1 628.5,125.5 634.1,127.2 639.8,127.2 645.5,127.8 651.7,128.4 657.8,129.6 662.6,132.5 668.0,134.7 672.3,136.5 676.2,139.7 679.1,144.1 683.5,146.0 688.0,149.9 693.7,153.1 696.1,156.2 699.7,161.3 702.8,158.3 707.6,155.1 712.4,154.7 719.0,154.7 724.8,154.2 729.9,151.1 734.3,146.7 738.6,141.8 743.1,137.7 747.3,143.7 752.2,140.6 754.9,142.2 751.4,146.6 747.0,152.3 748.7,160.4 753.8,162.1 759.1,165.2 763.6,166.9 766.8,161.3 772.1,156.1 775.8,152.3 779.4,150.2 781.6,146.6 785.6,142.0 790.0,138.3 792.7,135.1 797.1,131.6 796.7,137.3 795.9,143.5 804.8,148.9 805.7,153.0 806.7,158.5 810.1,164.1 806.5,170.4 803.1,176.7 804.7,182.8 808.2,191.1 817.4,196.6 825.5,200.6 829.7,206.2 834.2,210.6 837.8,215.1 841.5,220.6 842.9,226.9 844.1,233.1 839.4,240.4 846.4,247.2 848.5,254.3 852.7,259.3 851.7,265.5 852.4,269.7 845.7,276.7 839.6,276.5 833.5,277.4 834.3,284.1 836.2,288.0 829.7,291.6 825.0,293.8 820.8,296.9 815.7,299.0 813.4,305.5 812.5,311.1 810.2,316.6 806.4,320.8 803.3,325.0 802.4,331.5 803.3,335.7 802.4,341.5 803.2,345.9 808.1,349.6 815.0,352.3 822.7,350.4 821.9,356.5 820.6,361.1 820.0,366.9 818.8,372.4 822.1,377.4 826.2,382.1 828.7,387.7 828.0,393.8 825.7,398.4 824.0,404.4 823.4,410.3 828.4,412.9 832.6,414.2 836.7,415.7 841.4,417.7 843.7,424.1 843.9,429.9 841.1,435.0 841.2,440.5 839.0,445.7 838.4,450.6 843.7,451.1 850.6,450.4 856.5,455.8 849.1,457.0 842.1,460.7 840.2,465.3 838.3,472.4 835.7,478.0 834.8,483.3 833.0,487.8 831.1,492.4 833.7,497.5 836.4,502.8 836.2,508.1 834.8,513.4 835.7,520.1 827.5,523.1 821.4,531.0 815.4,531.2 810.3,530.8 804.3,530.9 799.6,529.2 793.8,528.3 789.9,523.4 783.2,517.0 776.4,514.6 771.0,518.1 766.9,522.3 763.2,525.6 759.2,529.7 752.9,531.7 746.9,534.2 751.6,539.8 759.7,544.3 757.7,552.1 757.7,559.1 759.1,567.4 752.8,568.2 745.3,569.7 741.7,564.4 740.0,559.1 736.0,554.8 730.1,548.5 725.6,547.9 718.8,546.9 714.4,546.3 707.7,549.2 702.4,547.3 698.5,546.1 693.2,545.1 691.9,549.6 690.0,555.4 689.3,561.5 690.4,566.4 690.7,571.6 686.1,574.5 680.9,579.2 677.4,583.6 671.2,583.1 664.3,582.2 657.9,583.8 652.2,584.3 647.9,589.2 643.4,591.6 636.0,589.2 636.0,585.1 635.4,578.5 634.1,574.0 634.4,568.7 633.4,563.2 630.9,556.7 627.2,550.4 622.6,552.3 616.2,552.8 613.3,557.5 611.1,560.2 607.4,565.1 602.8,568.0 598.5,571.6 597.6,565.6 596.7,559.8 596.8,555.3 601.4,550.0 604.3,543.8 607.9,539.4 611.3,535.5 614.2,532.1 616.7,528.8 620.8,523.4 624.1,517.0 623.9,511.9 623.2,505.7 623.6,499.6 627.1,494.1 632.3,489.6 635.3,485.1 628.8,486.1 622.3,486.0 615.5,481.9 615.3,476.7 616.8,470.3 618.9,463.4 620.2,458.3 621.2,451.1 612.8,447.8 605.3,447.3 598.0,447.6 594.2,442.3 590.1,445.0 585.8,448.8 581.4,452.0 575.4,446.6 570.3,446.6 565.3,447.1 562.9,451.7 559.2,458.3 554.0,461.2 548.6,463.5 545.9,468.8 542.7,471.6 539.3,476.2 533.1,472.0 524.8,471.0 524.6,465.3 524.7,460.3 518.4,460.1 511.2,459.5 509.3,465.5 506.3,469.8 503.5,473.6 502.8,478.5 501.0,483.9 492.3,483.5 496.1,475.4 489.2,471.1 484.2,472.7 478.9,473.5 476.8,468.7 475.8,461.2 474.9,455.6 472.4,449.9 467.2,447.6 461.3,445.8 465.8,439.7 468.6,434.5 471.4,427.5 467.6,420.7 464.6,414.3 471.1,410.0 476.6,407.3 481.1,406.4 476.4,397.5 483.5,393.4 481.6,389.4 479.8,384.4 478.3,378.4 476.0,375.3 472.9,370.4 466.6,372.8 461.0,374.3 454.6,377.6 447.8,375.8 442.2,372.4 436.6,373.0 429.7,373.1 430.2,366.5 429.8,362.1 429.6,355.7 429.5,349.4 436.6,353.8 442.0,356.3 446.6,351.0 449.8,345.7 455.0,345.8 460.1,345.2 465.2,342.1 468.1,339.6 472.7,335.9 474.6,331.2 476.6,325.7 473.7,323.1 468.7,319.5 467.8,313.2 466.7,307.9 465.0,303.3 465.0,297.9 466.6,291.7 467.6,286.1 468.5,280.6 471.6,274.4 468.3,267.8 465.4,261.4 465.2,255.5 463.9,249.2 461.2,245.5 457.8,241.4 459.9,239.0 467.3,232.8 459.9,228.3 459.9,222.2 461.4,216.9 463.2,209.7 464.4,204.4 462.3,196.2 465.2,190.4 466.6,185.3 468.4,180.8 470.9,175.1 473.4,170.7 474.2,165.6 475.2,161.5 478.3,156.1 483.6,152.4 490.8,151.8 497.7,149.7 500.1,146.1 503.2,142.7 509.8,140.9 516.4,139.9 521.2,140.5 526.8,141.2 531.9,141.6 536.2,141.5 542.7,148.1 549.4,152.3 553.6,149.9 557.3,146.1 566.4,142.8 568.4,139.4 564.0,135.6 558.9,129.5 560.1,123.4 559.6,117.4" fill="none" stroke="#a4a4f6" stroke-width="3" stroke-linejoin="round"/>
<g fill="none" stroke="#f01010" stroke-width="4.5">
<path d="M553 171L567 177L560 193"/>
<path d="M593 164L605 174L593 185"/>
<path d="M629 163L642 174L630 185"/>
<path d="M668 162L676 173L661 185"/>
<path d="M703 164L713 173L700 187"/>
</g>
<path d="M643 210C640 190 690 188 728 206C760 220 781 240 781 262L781 298C781 310 760 310 744 308C728 305 700 280 680 262C660 244 646 228 643 210Z" fill="none" stroke="#ff1010" stroke-width="1.1"/>
<g fill="#ee1111">
<circle cx="557" cy="197" r="3.8"/>
<circle cx="760" cy="174" r="3.8"/>
<circle cx="652" cy="208" r="3.8"/>
<circle cx="499" cy="268" r="3.8"/>
<circle cx="515" cy="336" r="3.8"/>
<circle cx="675" cy="320" r="3.8"/>
<circle cx="748" cy="308" r="3.8"/>
<circle cx="764" cy="308" r="3.8"/>
<circle cx="634" cy="364" r="3.8"/>
<circle cx="726" cy="393" r="3.8"/>
<circle cx="647" cy="454" r="3.8"/>
<circle cx="760" cy="489" r="3.8"/>
</g>
<g font-family="Liberation Sans,sans-serif" font-size="14" font-weight="bold" fill="#5a5a5a" letter-spacing="1.5">
<use href="#g205" x="563" y="189"/><use href="#g206" x="579" y="189"/><use href="#g207" x="595" y="189"/>
<use href="#g208" x="767" y="166"/><use href="#g209" x="783" y="166"/>
<use href="#g210" x="659" y="199"/><use href="#g211" x="675" y="199"/>
<use href="#g212" x="506" y="260"/><use href="#g213" x="522" y="260"/>
<use href="#g214" x="522" y="328"/><use href="#g215" x="538" y="328"/>
<use href="#g216" x="682" y="312"/><use href="#g217" x="698" y="312"/>
<use href="#g218" x="770" y="300"/><use href="#g219" x="786" y="300"/>
<use href="#g220" x="755" y="320"/><use href="#g221" x="771" y="320"/>
<use href="#g222" x="641" y="356"/><use href="#g209" x="657" y="356"/>
<use href="#g223" x="733" y="385"/><use href="#g209" x="749" y="385"/>
<use href="#g224" x="654" y="446"/><use href="#g219" x="670" y="446"/>
<use href="#g225" x="767" y="481"/><use href="#g219" x="783" y="481"/>
<use href="#g226" x="712" y="240"/><use href="#g209" x="728" y="240"/>
<use href="#g227" x="760" y="272"/><use href="#g228" x="776" y="272"/>
</g>
<circle cx="754.5" cy="279.5" r="7.8" fill="#fff" stroke="#ff1010" stroke-width="3"/><circle cx="755" cy="280" r="4.6" fill="#ff4a10"/><path d="M751 275L757 281" stroke="#302010" stroke-width="1.2"/>
<g fill="#0000f0">
<path d="M654 194L659 200V204L656 208H652L649 204V200Z"/>
<path d="M678 194L683 200V204L680 208H676L673 204V200Z"/>
<path d="M702 194L707 200V204L704 208H700L697 204V200Z"/>
<path d="M654 218L659 224V228L656 232H652L649 228V224Z"/>
<path d="M678 218L683 224V228L680 232H676L673 228V224Z"/>
<path d="M702 218L707 224V228L704 232H700L697 228V224Z"/>
<path d="M726 218L731 224V228L728 232H724L721 228V224Z"/>
<path d="M750 218L755 224V228L752 232H748L745 228V224Z"/>
<path d="M678 242L683 248V252L680 256H676L673 252V248Z"/>
<path d="M702 242L707 248V252L704 256H700L697 252V248Z"/>
<path d="M726 242L731 248V252L728 256H724L721 252V248Z"/>
<path d="M750 242L755 248V252L752 256H748L745 252V248Z"/>
<path d="M774 242L779 248V252L776 256H772L769 252V248Z"/>
<path d="M702 266L707 272V276L704 280H700L697 276V272Z"/>
<path d="M726 266L731 272V276L728 280H724L721 276V272Z"/>
<path d="M750 266L755 272V276L752 280H748L745 276V272Z"/>
<path d="M774 266L779 272V276L776 280H772L769 276V272Z"/>
<path d="M726 289L731 295V299L728 303H724L721 299V295Z"/>
<path d="M750 289L755 295V299L752 303H748L745 299V295Z"/>
<path d="M774 289L779 295V299L776 303H772L769 299V295Z"/>
</g>
<path d="M592 227L594 234L599 230L598 236L604 235L599 240L603 244L597 245L588 246L582 244L586 240L583 235L589 236L590 231Z" fill="#ffd800"/><circle cx="593" cy="241" r="6" fill="#ff6a10"/><circle cx="590.5" cy="241" r="1.3" fill="#222"/><circle cx="595" cy="241" r="1.3" fill="#222"/>
<path d="M585 266C578 266 578 251 587 249C592 247 597 249 600 252C600 240 612 236 616 246C622 247 621 262 614 264C610 268 603 266 601 263C596 268 590 268 585 266Z" fill="#f8fbff" stroke="#6f9ad6" stroke-width="1.4"/><path d="M589 255C594 252 598 256 598 260M604 252C609 249 613 253 612 258" fill="none" stroke="#b8d0ee" stroke-width="1.2"/>
</svg>
<!--/MAP-->
<div id="rpanel" class="a"></div>
<div class="a" style="left:1080px;top:78px;width:200px;height:18px;border:1px solid;border-color:#aca899 #aca899 #aca899 #fff;box-shadow:inset 0 1px #fff;background:#ECE9D8"></div>
<div class="a t" style="left:1083px;top:80px"><svg class="g" width="12" height="16"><use href="#g36"/></svg><svg class="g" width="12" height="16"><use href="#g37"/></svg><svg class="g" width="12" height="16"><use href="#g38"/></svg><svg class="g" width="12" height="16"><use href="#g39"/></svg><svg class="g" width="12" height="16"><use href="#g40"/></svg><svg class="g" width="12" height="16"><use href="#g41"/></svg></div>
<div class="a pinb" style="left:1249px;top:80px"><svg class="a" style="left:2px;top:1px" width="9" height="10"><path d="M2 1H7V6H8V7H5V10H4V7H1V6H2Z" fill="none" stroke="#000" stroke-width="1.2"/></svg></div>
<div class="a pinb" style="left:1265px;top:80px"><svg class="a" style="left:2px;top:2px" width="9" height="9"><path d="M1 1L8 8M8 1L1 8" stroke="#000" stroke-width="1.5"/></svg></div>
<div class="a" style="left:1080px;top:98px;width:200px;height:652px;background:#fff;border-left:1px solid #716f64;border-top:1px solid #aca899"></div>
<div class="a hdr" style="left:1081px;top:99px;width:120px;height:16px"></div>
<div class="a hdr" style="left:1201px;top:99px;width:60px;height:16px"></div>
<div class="a hdr" style="left:1261px;top:99px;width:19px;height:16px"></div>
<div class="a t" style="left:1117px;top:99px;letter-spacing:6px"><svg class="g" width="18" height="16"><use href="#g37"/></svg><svg class="g" width="18" height="16"><use href="#g42"/></svg><svg class="g" width="18" height="16"><use href="#g43"/></svg></div>
<div class="a t" style="left:1237px;top:99px;letter-spacing:2px">...</div>
<div class="a cb" style="left:1085px;top:119px"><svg class="a" style="left:0;top:0" width="9" height="9"><path d="M1.2 4.3L3.5 6.8L7.8 1.8" stroke="#000" stroke-width="1.8" fill="none"/></svg></div><svg class="a" style="left:1100px;top:119px" width="14" height="13"><path d="M1 5L6 0.5L12 5V13H1Z" fill="#c0c0c0" stroke="#a8a8a8"/></svg><div class="a t" style="left:1117px;top:118px"><svg class="g" width="12" height="16"><use href="#g44"/></svg><svg class="g" width="12" height="16"><use href="#g45"/></svg><svg class="g" width="12" height="16"><use href="#g46"/></svg><svg class="g" width="12" height="16"><use href="#g47"/></svg></div><div class="a t" style="left:1225px;top:118px"><svg class="g" width="12" height="16"><use href="#g48"/></svg></div><div class="a t" style="left:1276px;top:118px;color:#666"><svg class="g" width="12" height="16"><use href="#g49"/></svg></div><div class="a cb" style="left:1085px;top:136px"></div><svg class="a" style="left:1100px;top:136px" width="14" height="13"><path d="M1 5L6 0.5L12 5V13H1Z" fill="#c0c0c0" stroke="#a8a8a8"/></svg><div class="a t" style="left:1117px;top:135px"><svg class="g" width="12" height="16"><use href="#g50"/></svg><svg class="g" width="12" height="16"><use href="#g51"/></svg><svg class="g" width="12" height="16"><use href="#g52"/></svg><svg class="g" width="12" height="16"><use href="#g53"/></svg><svg class="g" width="12" height="16"><use href="#g54"/></svg></div><div class="a t" style="left:1178px;top:135px;letter-spacing:2.6px">...</div><div class="a t" style="left:1225px;top:135px"><svg class="g" width="12" height="16"><use href="#g48"/></svg></div><div class="a t" style="left:1276px;top:135px;color:#666"><svg class="g" width="12" height="16"><use href="#g49"/></svg></div><div class="a cb" style="left:1085px;top:153px"><svg class="a" style="left:0;top:0" width="9" height="9"><path d="M1.2 4.3L3.5 6.8L7.8 1.8" stroke="#000" stroke-width="1.8" fill="none"/></svg></div><svg class="a" style="left:1100px;top:153px" width="14" height="13"><path d="M1 5L6 0.5L12 5V13H1Z" fill="#c0c0c0" stroke="#a8a8a8"/></svg><div class="a t" style="left:1117px;top:152px"><svg class="g" width="12" height="16"><use href="#g55"/></svg><svg class="g" width="12" height="16"><use href="#g48"/></svg></div><div class="a t" style="left:1225px;top:152px"><svg class="g" width="12" height="16"><use href="#g48"/></svg></div><div class="a t" style="left:1276px;top:152px;color:#666"><svg class="g" width="12" height="16"><use href="#g49"/></svg></div><div class="a cb" style="left:1085px;top:170px"><svg class="a" style="left:0;top:0" width="9" height="9"><path d="M1.2 4.3L3.5 6.8L7.8 1.8" stroke="#000" stroke-width="1.8" fill="none"/></svg></div><svg class="a" style="left:1100px;top:170px" width="14" height="13"><path d="M1 5L6 0.5L12 5V13H1Z" fill="#c0c0c0" stroke="#a8a8a8"/></svg><div class="a t" style="left:1117px;top:169px"><svg class="g" width="12" height="16"><use href="#g50"/></svg><svg class="g" width="12" height="16"><use href="#g56"/></svg></div><div class="a t" style="left:1225px;top:169px"><svg class="g" width="12" height="16"><use href="#g48"/></svg></div><div class="a t" style="left:1276px;top:169px;color:#666"><svg class="g" width="12" height="16"><use href="#g49"/></svg></div><div class="a cb" style="left:1085px;top:187px"></div><svg class="a" style="left:1100px;top:187px" width="14" height="13"><path d="M2 12L4 2L9 11L12 1" fill="none" stroke="#c4c4c4" stroke-width="2.2"/></svg><div class="a t" style="left:1117px;top:186px"><svg class="g" width="12" height="16"><use href="#g57"/></svg><svg class="g" width="12" height="16"><use href="#g58"/></svg></div><div class="a t" style="left:1225px;top:186px"><svg class="g" width="12" height="16"><use href="#g59"/></svg></div><div class="a t" style="left:1276px;top:186px;color:#666"><svg class="g" width="12" height="16"><use href="#g49"/></svg></div><div class="a cb" style="left:1085px;top:204px"></div><svg class="a" style="left:1100px;top:204px" width="14" height="13"><path d="M2 12L4 2L9 11L12 1" fill="none" stroke="#c4c4c4" stroke-width="2.2"/></svg><div class="a t" style="left:1117px;top:203px"><svg class="g" width="12" height="16"><use href="#g52"/></svg><svg class="g" width="12" height="16"><use href="#g58"/></svg></div><div class="a t" style="left:1225px;top:203px"><svg class="g" width="12" height="16"><use href="#g59"/></svg></div><div class="a t" style="left:1276px;top:203px;color:#666"><svg class="g" width="12" height="16"><use href="#g49"/></svg></div><div class="a cb" style="left:1085px;top:221px"></div><svg class="a" style="left:1100px;top:221px" width="14" height="13"><path d="M2 12L4 2L9 11L12 1" fill="none" stroke="#c4c4c4" stroke-width="2.2"/></svg><div class="a t" style="left:1117px;top:220px"><svg class="g" width="12" height="16"><use href="#g60"/></svg><svg class="g" width="12" height="16"><use href="#g61"/></svg></div><div class="a t" style="left:1225px;top:220px"><svg class="g" width="12" height="16"><use href="#g59"/></svg></div><div class="a t" style="left:1276px;top:220px;color:#666"><svg class="g" width="12" height="16"><use href="#g49"/></svg></div><div class="a cb" style="left:1085px;top:238px"></div><svg class="a" style="left:1100px;top:238px" width="14" height="13"><path d="M2 12L4 2L9 11L12 1" fill="none" stroke="#c4c4c4" stroke-width="2.2"/></svg><div class="a t" style="left:1117px;top:237px"><svg class="g" width="12" height="16"><use href="#g62"/></svg><svg class="g" width="12" height="16"><use href="#g63"/></svg><svg class="g" width="12" height="16"><use href="#g24"/></svg><svg class="g" width="12" height="16"><use href="#g61"/></svg></div><div class="a t" style="left:1225px;top:237px"><svg class="g" width="12" height="16"><use href="#g59"/></svg></div><div class="a t" style="left:1276px;top:237px;color:#666"><svg class="g" width="12" height="16"><use href="#g49"/></svg></div><div class="a cb" style="left:1085px;top:255px"></div><svg class="a" style="left:1100px;top:255px" width="14" height="13"><path d="M2 12L4 2L9 11L12 1" fill="none" stroke="#c4c4c4" stroke-width="2.2"/></svg><div class="a t" style="left:1117px;top:254px"><svg class="g" width="12" height="16"><use href="#g36"/></svg><svg class="g" width="12" height="16"><use href="#g64"/></svg></div><div class="a t" style="left:1225px;top:254px"><svg class="g" width="12" height="16"><use href="#g59"/></svg></div><div class="a t" style="left:1276px;top:254px;color:#666"><svg class="g" width="12" height="16"><use href="#g49"/></svg></div><div class="a cb" style="left:1085px;top:272px"></div><svg class="a" style="left:1100px;top:272px" width="14" height="13"><path d="M2 12L4 2L9 11L12 1" fill="none" stroke="#c4c4c4" stroke-width="2.2"/></svg><div class="a t" style="left:1117px;top:271px"><svg class="g" width="12" height="16"><use href="#g65"/></svg><svg class="g" width="12" height="16"><use href="#g25"/></svg><svg class="g" width="12" height="16"><use href="#g59"/></svg></div><div class="a t" style="left:1225px;top:271px"><svg class="g" width="12" height="16"><use href="#g59"/></svg></div><div class="a t" style="left:1276px;top:271px;color:#666"><svg class="g" width="12" height="16"><use href="#g49"/></svg></div><div class="a cb" style="left:1085px;top:289px"></div><svg class="a" style="left:1100px;top:289px" width="14" height="13"><path d="M2 12L4 2L9 11L12 1" fill="none" stroke="#c4c4c4" stroke-width="2.2"/></svg><div class="a t" style="left:1117px;top:288px"><svg class="g" width="12" height="16"><use href="#g66"/></svg><svg class="g" width="12" height="16"><use href="#g67"/></svg>110</div><div class="a t" style="left:1225px;top:288px"><svg class="g" width="12" height="16"><use href="#g59"/></svg></div><div class="a t" style="left:1276px;top:288px;color:#666"><svg class="g" width="12" height="16"><use href="#g49"/></svg></div><div class="a cb" style="left:1085px;top:306px"></div><svg class="a" style="left:1100px;top:306px" width="14" height="13"><path d="M2 12L4 2L9 11L12 1" fill="none" stroke="#c4c4c4" stroke-width="2.2"/></svg><div class="a t" style="left:1117px;top:305px"><svg class="g" width="12" height="16"><use href="#g66"/></svg><svg class="g" width="12" height="16"><use href="#g67"/></svg>220</div><div class="a t" style="left:1225px;top:305px"><svg class="g" width="12" height="16"><use href="#g59"/></svg></div><div class="a t" style="left:1276px;top:305px;color:#666"><svg class="g" width="12" height="16"><use href="#g49"/></svg></div><div class="a cb" style="left:1085px;top:323px"></div><svg class="a" style="left:1100px;top:323px" width="14" height="13"><path d="M2 12L4 2L9 11L12 1" fill="none" stroke="#c4c4c4" stroke-width="2.2"/></svg><div class="a t" style="left:1117px;top:322px"><svg class="g" width="12" height="16"><use href="#g66"/></svg><svg class="g" width="12" height="16"><use href="#g67"/></svg>500</div><div class="a t" style="left:1225px;top:322px"><svg class="g" width="12" height="16"><use href="#g59"/></svg></div><div class="a t" style="left:1276px;top:322px;color:#666"><svg class="g" width="12" height="16"><use href="#g49"/></svg></div><div class="a cb" style="left:1085px;top:340px"><svg class="a" style="left:0;top:0" width="9" height="9"><path d="M1.2 4.3L3.5 6.8L7.8 1.8" stroke="#000" stroke-width="1.8" fill="none"/></svg></div><svg class="a" style="left:1100px;top:340px" width="14" height="13"><path d="M2 12L4 2L9 11L12 1" fill="none" stroke="#c4c4c4" stroke-width="2.2"/></svg><div class="a t" style="left:1117px;top:339px"><svg class="g" width="12" height="16"><use href="#g36"/></svg><svg class="g" width="12" height="16"><use href="#g68"/></svg><svg class="g" width="12" height="16"><use href="#g69"/></svg></div><div class="a t" style="left:1225px;top:339px"><svg class="g" width="12" height="16"><use href="#g59"/></svg></div><div class="a t" style="left:1276px;top:339px;color:#666"><svg class="g" width="12" height="16"><use href="#g49"/></svg></div><div class="a cb" style="left:1085px;top:357px"><svg class="a" style="left:0;top:0" width="9" height="9"><path d="M1.2 4.3L3.5 6.8L7.8 1.8" stroke="#000" stroke-width="1.8" fill="none"/></svg></div><svg class="a" style="left:1100px;top:357px" width="14" height="13"><path d="M2 12L4 2L9 11L12 1" fill="none" stroke="#c4c4c4" stroke-width="2.2"/></svg><div class="a t" style="left:1117px;top:356px"><svg class="g" width="12" height="16"><use href="#g55"/></svg><svg class="g" width="12" height="16"><use href="#g69"/></svg></div><div class="a t" style="left:1225px;top:356px"><svg class="g" width="12" height="16"><use href="#g59"/></svg></div><div class="a t" style="left:1276px;top:356px;color:#666"><svg class="g" width="12" height="16"><use href="#g49"/></svg></div><div class="a cb" style="left:1085px;top:374px"><svg class="a" style="left:0;top:0" width="9" height="9"><path d="M1.2 4.3L3.5 6.8L7.8 1.8" stroke="#000" stroke-width="1.8" fill="none"/></svg></div><svg class="a" style="left:1100px;top:374px" width="14" height="13"><path d="M6.5 0.5L10 6.5L6.5 12.5L3 6.5Z" fill="#c0c0c0" stroke="#999" stroke-width="0.8"/></svg><div class="a t" style="left:1117px;top:373px"><svg class="g" width="12" height="16"><use href="#g70"/></svg><svg class="g" width="12" height="16"><use href="#g71"/></svg><svg class="g" width="12" height="16"><use href="#g72"/></svg><svg class="g" width="12" height="16"><use href="#g73"/></svg><svg class="g" width="12" height="16"><use href="#g36"/></svg></div><div class="a t" style="left:1225px;top:373px"><svg class="g" width="12" height="16"><use href="#g74"/></svg></div><div class="a t" style="left:1276px;top:373px;color:#666"><svg class="g" width="12" height="16"><use href="#g49"/></svg></div><div class="a cb" style="left:1085px;top:391px"><svg class="a" style="left:0;top:0" width="9" height="9"><path d="M1.2 4.3L3.5 6.8L7.8 1.8" stroke="#000" stroke-width="1.8" fill="none"/></svg></div><svg class="a" style="left:1100px;top:391px" width="14" height="13"><path d="M6.5 0.5L10 6.5L6.5 12.5L3 6.5Z" fill="#c0c0c0" stroke="#999" stroke-width="0.8"/></svg><div class="a t" style="left:1117px;top:390px"><svg class="g" width="12" height="16"><use href="#g75"/></svg><svg class="g" width="12" height="16"><use href="#g71"/></svg><svg class="g" width="12" height="16"><use href="#g72"/></svg><svg class="g" width="12" height="16"><use href="#g73"/></svg><svg class="g" width="12" height="16"><use href="#g36"/></svg></div><div class="a t" style="left:1225px;top:390px"><svg class="g" width="12" height="16"><use href="#g74"/></svg></div><div class="a t" style="left:1276px;top:390px;color:#666"><svg class="g" width="12" height="16"><use href="#g49"/></svg></div><div class="a cb" style="left:1085px;top:408px"><svg class="a" style="left:0;top:0" width="9" height="9"><path d="M1.2 4.3L3.5 6.8L7.8 1.8" stroke="#000" stroke-width="1.8" fill="none"/></svg></div><svg class="a" style="left:1100px;top:408px" width="14" height="13"><path d="M6.5 0.5L10 6.5L6.5 12.5L3 6.5Z" fill="#c0c0c0" stroke="#999" stroke-width="0.8"/></svg><div class="a t" style="left:1117px;top:407px"><svg class="g" width="12" height="16"><use href="#g76"/></svg><svg class="g" width="12" height="16"><use href="#g71"/></svg><svg class="g" width="12" height="16"><use href="#g77"/></svg><svg class="g" width="12" height="16"><use href="#g78"/></svg><svg class="g" width="12" height="16"><use href="#g72"/></svg></div><div class="a t" style="left:1178px;top:407px;letter-spacing:2.6px">...</div><div class="a t" style="left:1225px;top:407px"><svg class="g" width="12" height="16"><use href="#g74"/></svg></div><div class="a t" style="left:1276px;top:407px;color:#666"><svg class="g" width="12" height="16"><use href="#g49"/></svg></div><div class="a cb" style="left:1085px;top:425px"></div><svg class="a" style="left:1100px;top:425px" width="14" height="13"><path d="M6.5 0.5L10 6.5L6.5 12.5L3 6.5Z" fill="#c0c0c0" stroke="#999" stroke-width="0.8"/></svg><div class="a t" style="left:1117px;top:424px"><svg class="g" width="12" height="16"><use href="#g79"/></svg><svg class="g" width="12" height="16"><use href="#g80"/></svg><svg class="g" width="12" height="16"><use href="#g81"/></svg><svg class="g" width="12" height="16"><use href="#g74"/></svg><svg class="g" width="12" height="16"><use href="#g82"/></svg></div><div class="a t" style="left:1178px;top:424px;letter-spacing:2.6px">...</div><div class="a t" style="left:1225px;top:424px"><svg class="g" width="12" height="16"><use href="#g74"/></svg></div><div class="a t" style="left:1276px;top:424px;color:#666"><svg class="g" width="12" height="16"><use href="#g49"/></svg></div><div class="a cb" style="left:1085px;top:442px"></div><svg class="a" style="left:1100px;top:441px" width="14" height="14"><rect width="14" height="14" fill="#fff"/><path d="M0 0L7 7L0 14Z" fill="#e02020"/><path d="M14 0L7 7L14 14Z" fill="#10a010"/><path d="M0 14L7 7L14 14Z" fill="#1020e0"/><path d="M0 0L7 7L14 0" fill="#2030d0"/></svg><div class="a t" style="left:1117px;top:441px"><svg class="g" width="12" height="16"><use href="#g83"/></svg><svg class="g" width="12" height="16"><use href="#g84"/></svg><svg class="g" width="12" height="16"><use href="#g37"/></svg></div><div class="a t" style="left:1219px;top:441px"><svg class="g" width="12" height="16"><use href="#g83"/></svg><svg class="g" width="12" height="16"><use href="#g84"/></svg></div><div class="a t" style="left:1276px;top:441px;color:#666"><svg class="g" width="12" height="16"><use href="#g49"/></svg></div>
<div class="a" style="left:1081px;top:733px;width:199px;height:17px;background:#fbfbf8"></div>
<div class="a sbbtn" style="left:1082px;top:733px;width:16px;height:16px"><svg class="a" style="left:4px;top:3px" width="8" height="10"><path d="M6 1L2 5L6 9" stroke="#4d6185" stroke-width="2" fill="none"/></svg></div>
<div class="a sbbtn" style="left:1099px;top:733px;width:48px;height:16px"><div class="a" style="left:20px;top:4px;width:8px;height:7px;background:repeating-linear-gradient(90deg,#b8c8f0 0 1px,#eef2fd 1px 2px)"></div></div>
<div class="a sbbtn" style="left:1262px;top:733px;width:16px;height:16px"><svg class="a" style="left:4px;top:3px" width="8" height="10"><path d="M2 1L6 5L2 9" stroke="#4d6185" stroke-width="2" fill="none"/></svg></div>

<div id="status" class="a"></div>
<div class="a" style="left:442px;top:600px;width:633px;height:18px;border-top:1px solid #aca899;box-shadow:inset 0 1px #fff;border-bottom:1px solid #aca899"></div>
<div class="a pinb" style="left:1045px;top:602px"><svg class="a" style="left:2px;top:1px" width="9" height="10"><path d="M2 1H7V6H8V7H5V10H4V7H1V6H2Z" fill="none" stroke="#000" stroke-width="1.2"/></svg></div>
<div class="a pinb" style="left:1061px;top:602px"><svg class="a" style="left:2px;top:2px" width="9" height="9"><path d="M1 1L8 8M8 1L1 8" stroke="#000" stroke-width="1.5"/></svg></div>
<div class="a" style="left:205px;top:620px;width:870px;height:129px;background:#aba898;border:2px solid #000;border-right-width:1px;border-top-color:#111"></div>
<div class="a" style="left:1057px;top:622px;width:16px;height:125px;background:#fbfbf8"></div>
<div class="a sbbtn" style="left:1057px;top:623px;width:16px;height:16px"><svg class="a" style="left:3px;top:4px" width="10" height="8"><path d="M1 6L5 2L9 6" stroke="#4d6185" stroke-width="2" fill="none"/></svg></div>
<div class="a sbbtn" style="left:1057px;top:640px;width:16px;height:14px"></div>
<div class="a sbbtn" style="left:1057px;top:730px;width:16px;height:16px"><svg class="a" style="left:3px;top:4px" width="10" height="8"><path d="M1 2L5 6L9 2" stroke="#4d6185" stroke-width="2" fill="none"/></svg></div>
<div class="a" style="left:207px;top:622px;width:250px;height:125px;overflow:hidden"><div class="a" style="left:0;top:0;width:83px;height:17px;background:#ECE9D8;border-bottom:1px solid #716f64"></div><div class="a" style="left:83px;top:0;width:167px;height:17px;background:#ECE9D8;border-bottom:1px solid #716f64"></div><div class="a" style="left:0;top:18px;width:83px;height:15px;background:#ECE9D8;border-top:1px solid #fff;border-bottom:1px solid #716f64"></div><div class="a" style="left:83px;top:17px;width:84px;height:16px;background:#fefde6;border:1px solid #c4c4c4;border-top:none;border-right:none"></div><div class="a" style="left:167px;top:17px;width:83px;height:16px;background:#fefde6;border:1px solid #c4c4c4;border-top:none"></div><div class="a t" style="left:88px;top:17px">1951</div><div class="a t" style="left:172px;top:17px"><svg class="g" width="12" height="16"><use href="#g85"/></svg><svg class="g" width="12" height="16"><use href="#g86"/></svg><svg class="g" width="12" height="16"><use href="#g87"/></svg></div><div class="a" style="left:0;top:33px;width:83px;height:15px;background:#ECE9D8;border-top:1px solid #fff;border-bottom:1px solid #716f64"></div><div class="a" style="left:83px;top:32px;width:84px;height:16px;background:#fefde6;border:1px solid #c4c4c4;border-top:none;border-right:none"></div><div class="a" style="left:167px;top:32px;width:83px;height:16px;background:#fefde6;border:1px solid #c4c4c4;border-top:none"></div><div class="a t" style="left:88px;top:32px">1985</div><div class="a t" style="left:172px;top:32px"><svg class="g" width="12" height="16"><use href="#g65"/></svg><svg class="g" width="12" height="16"><use href="#g88"/></svg><svg class="g" width="12" height="16"><use href="#g89"/></svg><svg class="g" width="12" height="16"><use href="#g90"/></svg><svg class="g" width="12" height="16"><use href="#g91"/></svg></div><div class="a" style="left:0;top:48px;width:83px;height:15px;background:#ECE9D8;border-top:1px solid #fff;border-bottom:1px solid #716f64"></div><div class="a" style="left:83px;top:47px;width:84px;height:16px;background:#fefde6;border:1px solid #c4c4c4;border-top:none;border-right:none"></div><div class="a" style="left:167px;top:47px;width:83px;height:16px;background:#fefde6;border:1px solid #c4c4c4;border-top:none"></div><div class="a t" style="left:88px;top:47px">1989</div><div class="a t" style="left:172px;top:47px"><svg class="g" width="12" height="16"><use href="#g92"/></svg><svg class="g" width="12" height="16"><use href="#g93"/></svg><svg class="g" width="12" height="16"><use href="#g94"/></svg></div><div class="a" style="left:0;top:63px;width:83px;height:15px;background:#ECE9D8;border-top:1px solid #fff;border-bottom:1px solid #716f64"></div><div class="a" style="left:83px;top:62px;width:84px;height:16px;background:#fefde6;border:1px solid #c4c4c4;border-top:none;border-right:none"></div><div class="a" style="left:167px;top:62px;width:83px;height:16px;background:#fefde6;border:1px solid #c4c4c4;border-top:none"></div><div class="a t" style="left:88px;top:62px">2002</div><div class="a t" style="left:172px;top:62px"><svg class="g" width="12" height="16"><use href="#g95"/></svg><svg class="g" width="12" height="16"><use href="#g96"/></svg><svg class="g" width="12" height="16"><use href="#g97"/></svg></div><div class="a" style="left:0;top:78px;width:83px;height:15px;background:#ECE9D8;border-top:1px solid #fff;border-bottom:1px solid #716f64"></div><div class="a" style="left:83px;top:77px;width:84px;height:16px;background:#fefde6;border:1px solid #c4c4c4;border-top:none;border-right:none"></div><div class="a" style="left:167px;top:77px;width:83px;height:16px;background:#fefde6;border:1px solid #c4c4c4;border-top:none"></div><div class="a t" style="left:88px;top:77px">2017</div><div class="a t" style="left:172px;top:77px"><svg class="g" width="12" height="16"><use href="#g98"/></svg><svg class="g" width="12" height="16"><use href="#g96"/></svg><svg class="g" width="12" height="16"><use href="#g99"/></svg></div><div class="a" style="left:0;top:93px;width:83px;height:15px;background:#ECE9D8;border-top:1px solid #fff;border-bottom:1px solid #716f64"></div><div class="a" style="left:83px;top:92px;width:84px;height:16px;background:#fefde6;border:1px solid #c4c4c4;border-top:none;border-right:none"></div><div class="a" style="left:167px;top:92px;width:83px;height:16px;background:#fefde6;border:1px solid #c4c4c4;border-top:none"></div><div class="a t" style="left:88px;top:92px">2022</div><div class="a t" style="left:172px;top:92px"><svg class="g" width="12" height="16"><use href="#g100"/></svg><svg class="g" width="12" height="16"><use href="#g101"/></svg><svg class="g" width="12" height="16"><use href="#g102"/></svg></div><div class="a" style="left:0;top:108px;width:83px;height:15px;background:#ECE9D8;border-top:1px solid #fff;border-bottom:1px solid #716f64"></div><div class="a" style="left:83px;top:107px;width:84px;height:16px;background:#fefde6;border:1px solid #c4c4c4;border-top:none;border-right:none"></div><div class="a" style="left:167px;top:107px;width:83px;height:16px;background:#fefde6;border:1px solid #c4c4c4;border-top:none"></div><div class="a t" style="left:88px;top:107px">2039</div><div class="a t" style="left:172px;top:107px"><svg class="g" width="12" height="16"><use href="#g103"/></svg><svg class="g" width="12" height="16"><use href="#g96"/></svg><svg class="g" width="12" height="16"><use href="#g94"/></svg></div><div class="a" style="left:0;top:123px;width:83px;height:15px;background:#ECE9D8;border-top:1px solid #fff;border-bottom:1px solid #716f64"></div><div class="a" style="left:83px;top:122px;width:84px;height:16px;background:#fefde6;border:1px solid #c4c4c4;border-top:none;border-right:none"></div><div class="a" style="left:167px;top:122px;width:83px;height:16px;background:#fefde6;border:1px solid #c4c4c4;border-top:none"></div><div class="a t" style="left:88px;top:122px">2070</div><div class="a t" style="left:172px;top:122px"><svg class="g" width="12" height="16"><use href="#g104"/></svg><svg class="g" width="12" height="16"><use href="#g102"/></svg><svg class="g" width="12" height="16"><use href="#g105"/></svg></div></div>
<div class="a" style="left:0;top:640px;width:201px;height:38px;background:#fff;border:2px solid #aca899"></div>
<div class="a lbtn" style="left:1px;top:678px"><svg class="g" width="12" height="16"><use href="#g106"/></svg><svg class="g" width="12" height="16"><use href="#g107"/></svg><svg class="g" width="12" height="16"><use href="#g108"/></svg><svg class="g" width="12" height="16"><use href="#g22"/></svg><svg class="g" width="12" height="16"><use href="#g40"/></svg><svg class="g" width="12" height="16"><use href="#g41"/></svg></div>
<div class="a lbtn" style="left:1px;top:702px"><svg class="g" width="12" height="16"><use href="#g79"/></svg><svg class="g" width="12" height="16"><use href="#g80"/></svg><svg class="g" width="12" height="16"><use href="#g17"/></svg><svg class="g" width="12" height="16"><use href="#g18"/></svg></div>
<div class="a lbtn" style="left:1px;top:726px"><svg class="g" width="12" height="16"><use href="#g17"/></svg><svg class="g" width="12" height="16"><use href="#g18"/></svg><svg class="g" width="12" height="16"><use href="#g19"/></svg><svg class="g" width="12" height="16"><use href="#g20"/></svg></div>
<div class="a" style="left:0;top:750px;width:99px;height:20px;border:1px solid;border-color:#fff #716f64 #716f64 #fff;overflow:hidden"><div class="a t" style="left:18px;top:3px;font-size:15px;font-weight:bold"><svg class="g" width="16" height="19"><use href="#g109"/></svg><svg class="g" width="16" height="19"><use href="#g110"/></svg><svg class="g" width="16" height="19"><use href="#g111"/></svg><svg class="g" width="16" height="19"><use href="#g112"/></svg></div></div>
<div class="a" style="left:326px;top:753px;width:1px;height:16px;background:#aca899"></div>
<div class="a t" style="left:331px;top:754px"><svg class="g" width="12" height="16"><use href="#g50"/></svg><svg class="g" width="12" height="16"><use href="#g51"/></svg><svg class="g" width="12" height="16"><use href="#g52"/></svg><svg class="g" width="12" height="16"><use href="#g24"/></svg><svg class="g" width="12" height="16"><use href="#g113"/></svg><svg class="g" width="12" height="16"><use href="#g79"/></svg><svg class="g" width="12" height="16"><use href="#g80"/></svg><svg class="g" width="12" height="16"><use href="#g108"/></svg><svg class="g" width="12" height="16"><use href="#g22"/></svg><svg class="g" width="12" height="16"><use href="#g21"/></svg><svg class="g" width="12" height="16"><use href="#g22"/></svg><svg class="g" width="12" height="16"><use href="#g114"/></svg><svg class="g" width="12" height="16"><use href="#g115"/></svg><svg class="g" width="12" height="16"><use href="#g116"/></svg><svg class="g" width="12" height="16"><use href="#g106"/></svg><svg class="g" width="12" height="16"><use href="#g107"/></svg><svg class="g" width="12" height="16"><use href="#g79"/></svg><svg class="g" width="12" height="16"><use href="#g80"/></svg><svg class="g" width="12" height="16"><use href="#g108"/></svg><svg class="g" width="12" height="16"><use href="#g22"/></svg><svg class="g" width="12" height="16"><use href="#g25"/></svg><svg class="g" width="12" height="16"><use href="#g26"/></svg></div>
<div class="a" style="left:652px;top:753px;width:1px;height:16px;background:#aca899"></div>
<div class="a t" style="left:657px;top:754px;letter-spacing:0.6px"><svg class="g" width="12.6" height="16"><use href="#g117"/></svg><svg class="g" width="12.6" height="16"><use href="#g118"/></svg><svg class="g" width="12.6" height="16"><use href="#g119"/></svg>:111.260,27.906</div>
<div class="a" style="left:852px;top:750px;width:99px;height:20px;border:1px solid;border-color:#fff #716f64 #716f64 #fff;overflow:hidden"><div class="a t" style="left:19px;top:3px;font-size:15px;font-weight:bold"><svg class="g" width="16" height="19"><use href="#g120"/></svg><svg class="g" width="16" height="19"><use href="#g121"/></svg><svg class="g" width="16" height="19"><use href="#g122"/></svg><svg class="g" width="16" height="19"><use href="#g110"/></svg></div></div>
<div class="a" style="left:979px;top:753px;width:1px;height:16px;background:#aca899"></div>
<div class="a t" style="left:983px;top:754px;letter-spacing:0.4px"><svg class="g" width="12.4" height="16"><use href="#g123"/></svg><svg class="g" width="12.4" height="16"><use href="#g124"/></svg><svg class="g" width="12.4" height="16"><use href="#g125"/></svg><svg class="g" width="12.4" height="16"><use href="#g126"/></svg>:1253.694</div>
<div class="a" style="left:1260px;top:753px;width:1px;height:16px;background:#aca899"></div>

<svg class="a" style="left:1264px;top:754px" width="14" height="14"><g fill="#c4c1b0"><rect x="10" y="2" width="2" height="2"/><rect x="6" y="6" width="2" height="2"/><rect x="10" y="6" width="2" height="2"/><rect x="2" y="10" width="2" height="2"/><rect x="6" y="10" width="2" height="2"/><rect x="10" y="10" width="2" height="2"/></g><g fill="#fff"><rect x="11" y="3" width="1" height="1"/><rect x="7" y="7" width="1" height="1"/><rect x="11" y="7" width="1" height="1"/><rect x="3" y="11" width="1" height="1"/><rect x="7" y="11" width="1" height="1"/><rect x="11" y="11" width="1" height="1"/></g></svg>
<div id="taskbar" class="a"></div>
<div class="a" style="left:0;top:770px;width:97px;height:30px;border-radius:0 11px 11px 0;background:linear-gradient(#3f983f 0px,#6cc06c 2px,#58b058 5px,#43a043 12px,#3a943a 20px,#338833 26px,#2a722a 30px);box-shadow:inset -2px 0 2px #2a6a2a, inset 0 -1px 1px #256025"></div>
<svg class="a" style="left:9px;top:775px" width="20" height="19"><path d="M2 3C5 1 7 2 9.5 3L8.5 9C6 8 4 7.5 1 9Z" fill="#f0501a"/><path d="M11 3.5C13 5 16 5 19 3.5L18 9.5C15 11 13 10.5 10 9.5Z" fill="#6ac03a"/><path d="M1 10.5C4 9 6 9.5 8.3 10.5L7.3 16.5C5 15.5 3 15 0 16.5Z" fill="#2a8ae8"/><path d="M10 11C12 12.5 15 12.5 18 11L17 17C14 18.5 12 18 9 17Z" fill="#f8d018"/></svg>
<div class="a t" style="left:37px;top:775px;color:#fff;font-size:16px;line-height:20px;transform:skewX(-14deg);filter:drop-shadow(1px 1px 0 #2a6a2a)"><svg class="g" width="16" height="20"><use href="#g127"/></svg><svg class="g" width="16" height="20"><use href="#g128"/></svg></div>
<svg class="a" style="left:108px;top:775px" width="85" height="18">
 <rect x="1.5" y="1.5" width="14" height="14" rx="3" fill="#e8f0fc" stroke="#2a5ac8" stroke-width="1.6"/><path d="M4 4H10V13H4Z" fill="#fff" stroke="#7a8ab8" stroke-width="0.8"/><path d="M6 11L12 5" stroke="#333" stroke-width="1.4"/><circle cx="13" cy="4" r="1.5" fill="#e83020"/>
 <text x="25.5" y="15.5" font-family="Liberation Sans" font-weight="bold" font-style="italic" font-size="18" fill="#6ec0ff" stroke="#d8f0ff" stroke-width="0.6">e</text><ellipse cx="32" cy="10" rx="9.5" ry="4" transform="rotate(-25 32 10)" fill="none" stroke="#5aa8f8" stroke-width="1.1"/>
 <rect x="47" y="1" width="16" height="16" fill="#e01818"/><rect x="49" y="3" width="12" height="12" fill="#fff"/><path d="M51 5C54 4 56 5 55 8C54 11 57 13 59 10" fill="none" stroke="#e01818" stroke-width="2"/>
 <path d="M75 3L78 5.5L75 8M79 3L82 5.5L79 8" fill="none" stroke="#dfe8ff" stroke-width="1.2"/>
</svg>
<div class="a" style="left:199px;top:773px;width:78px;height:25px;border-radius:3px;background:linear-gradient(#5a98f8 0px,#3c81f3 3px,#3a7ff0 20px,#2d6de0 27px);box-shadow:inset -1px -1px 1px #2458c8, inset 1px 1px 1px #6aa8ff"></div><svg class="a" style="left:207px;top:778px" width="17" height="15"><path d="M1 3H6L8 5H15V13H1Z" fill="#e8c04a" stroke="#a07818" stroke-width="0.8"/><path d="M1 13L4 7H17L14 13Z" fill="#f8e08a" stroke="#a07818" stroke-width="0.8"/></svg><div class="a t" style="left:227px;top:779px;color:#fff;font-family:&quot;Liberation Mono&quot;,monospace;font-size:10px;letter-spacing:0.1px">data</div><div class="a" style="left:279px;top:773px;width:78px;height:25px;border-radius:3px;background:linear-gradient(#5a98f8 0px,#3c81f3 3px,#3a7ff0 20px,#2d6de0 27px);box-shadow:inset -1px -1px 1px #2458c8, inset 1px 1px 1px #6aa8ff"></div><svg class="a" style="left:287px;top:777px" width="17" height="17"><rect width="16" height="16" fill="#e01818"/><rect x="2" y="2" width="12" height="12" fill="#fff"/><path d="M4 4C7 3 9 4 8 7C7 10 10 12 12 9" fill="none" stroke="#e01818" stroke-width="2"/></svg><div class="a t" style="left:307px;top:779px;color:#fff;font-family:&quot;Liberation Mono&quot;,monospace;font-size:10px;letter-spacing:0.1px"><svg class="g" width="12.1" height="16" style="position:relative;top:0px"><use href="#g129"/></svg>...</div><div class="a" style="left:359px;top:773px;width:78px;height:25px;border-radius:3px;background:linear-gradient(#5a98f8 0px,#3c81f3 3px,#3a7ff0 20px,#2d6de0 27px);box-shadow:inset -1px -1px 1px #2458c8, inset 1px 1px 1px #6aa8ff"></div><svg class="a" style="left:367px;top:778px" width="17" height="15"><path d="M1 3H6L8 5H15V13H1Z" fill="#e8c04a" stroke="#a07818" stroke-width="0.8"/><path d="M1 13L4 7H17L14 13Z" fill="#f8e08a" stroke="#a07818" stroke-width="0.8"/></svg><div class="a t" style="left:387px;top:779px;color:#fff;font-family:&quot;Liberation Mono&quot;,monospace;font-size:10px;letter-spacing:0.1px">new...</div><div class="a" style="left:439px;top:773px;width:78px;height:25px;border-radius:3px;background:linear-gradient(#5a98f8 0px,#3c81f3 3px,#3a7ff0 20px,#2d6de0 27px);box-shadow:inset -1px -1px 1px #2458c8, inset 1px 1px 1px #6aa8ff"></div><svg class="a" style="left:447px;top:777px" width="17" height="17"><rect x="1" y="1" width="15" height="15" rx="2" fill="#e8583a"/><circle cx="8.5" cy="8.5" r="4.5" fill="none" stroke="#fff" stroke-width="1.8"/></svg><div class="a t" style="left:467px;top:779px;color:#fff;font-family:&quot;Liberation Mono&quot;,monospace;font-size:10px;letter-spacing:0.1px">Mic...</div><div class="a" style="left:519px;top:773px;width:78px;height:25px;border-radius:3px;background:linear-gradient(#5a98f8 0px,#3c81f3 3px,#3a7ff0 20px,#2d6de0 27px);box-shadow:inset -1px -1px 1px #2458c8, inset 1px 1px 1px #6aa8ff"></div><svg class="a" style="left:527px;top:778px" width="17" height="15"><path d="M1 3H6L8 5H15V13H1Z" fill="#e8c04a" stroke="#a07818" stroke-width="0.8"/><path d="M1 13L4 7H17L14 13Z" fill="#f8e08a" stroke="#a07818" stroke-width="0.8"/></svg><div class="a t" style="left:547px;top:779px;color:#fff;font-family:&quot;Liberation Mono&quot;,monospace;font-size:10px;letter-spacing:0.1px">hun...</div><div class="a" style="left:599px;top:773px;width:78px;height:25px;border-radius:3px;background:linear-gradient(#5a98f8 0px,#3c81f3 3px,#3a7ff0 20px,#2d6de0 27px);box-shadow:inset -1px -1px 1px #2458c8, inset 1px 1px 1px #6aa8ff"></div><svg class="a" style="left:607px;top:778px" width="17" height="16"><path d="M3 1H13V15H3Z" fill="#f8d838" stroke="#a88810" stroke-width="0.8"/><path d="M5 5H11M5 8H11M5 11H9" stroke="#a88810" stroke-width="1"/></svg><div class="a t" style="left:627px;top:779px;color:#fff;font-family:&quot;Liberation Mono&quot;,monospace;font-size:10px;letter-spacing:0.1px"><svg class="g" width="12.1" height="16" style="position:relative;top:0px"><use href="#g130"/></svg> ...</div><div class="a" style="left:679px;top:773px;width:78px;height:25px;border-radius:3px;background:linear-gradient(#5a98f8 0px,#3c81f3 3px,#3a7ff0 20px,#2d6de0 27px);box-shadow:inset -1px -1px 1px #2458c8, inset 1px 1px 1px #6aa8ff"></div><svg class="a" style="left:687px;top:778px" width="17" height="16"><path d="M3 1H13V15H3Z" fill="#f8d838" stroke="#a88810" stroke-width="0.8"/><path d="M5 5H11M5 8H11M5 11H9" stroke="#a88810" stroke-width="1"/></svg><div class="a t" style="left:707px;top:779px;color:#fff;font-family:&quot;Liberation Mono&quot;,monospace;font-size:10px;letter-spacing:0.1px"><svg class="g" width="12.1" height="16" style="position:relative;top:0px"><use href="#g130"/></svg> ...</div><div class="a" style="left:759px;top:773px;width:78px;height:25px;border-radius:3px;background:linear-gradient(#5a98f8 0px,#3c81f3 3px,#3a7ff0 20px,#2d6de0 27px);box-shadow:inset -1px -1px 1px #2458c8, inset 1px 1px 1px #6aa8ff"></div><svg class="a" style="left:767px;top:778px" width="17" height="15"><path d="M1 3H6L8 5H15V13H1Z" fill="#e8c04a" stroke="#a07818" stroke-width="0.8"/><path d="M1 13L4 7H17L14 13Z" fill="#f8e08a" stroke="#a07818" stroke-width="0.8"/></svg><div class="a t" style="left:787px;top:779px;color:#fff;font-family:&quot;Liberation Mono&quot;,monospace;font-size:10px;letter-spacing:0.1px"><svg class="g" width="12.1" height="16" style="position:relative;top:0px"><use href="#g27"/></svg>...</div><div class="a" style="left:839px;top:773px;width:78px;height:25px;border-radius:3px;background:linear-gradient(#5a98f8 0px,#3c81f3 3px,#3a7ff0 20px,#2d6de0 27px);box-shadow:inset -1px -1px 1px #2458c8, inset 1px 1px 1px #6aa8ff"></div><svg class="a" style="left:847px;top:778px" width="17" height="16"><rect x="3" y="1" width="12" height="14" fill="#f0f4ff" stroke="#4a6ab8"/><rect x="0" y="4" width="9" height="9" fill="#2a4aa8"/><path d="M1.5 6L3 11L4.5 7.5L6 11L7.5 6" fill="none" stroke="#fff" stroke-width="1"/></svg><div class="a t" style="left:867px;top:779px;color:#fff;font-family:&quot;Liberation Mono&quot;,monospace;font-size:10px;letter-spacing:0.1px"><svg class="g" width="12.1" height="16" style="position:relative;top:0px"><use href="#g50"/></svg>...</div><div class="a" style="left:919px;top:773px;width:78px;height:25px;border-radius:3px;background:linear-gradient(#5a98f8 0px,#3c81f3 3px,#3a7ff0 20px,#2d6de0 27px);box-shadow:inset -1px -1px 1px #2458c8, inset 1px 1px 1px #6aa8ff"></div><svg class="a" style="left:927px;top:778px" width="17" height="15"><path d="M1 3H6L8 5H15V13H1Z" fill="#e8c04a" stroke="#a07818" stroke-width="0.8"/><path d="M1 13L4 7H17L14 13Z" fill="#f8e08a" stroke="#a07818" stroke-width="0.8"/></svg><div class="a t" style="left:947px;top:779px;color:#fff;font-family:&quot;Liberation Mono&quot;,monospace;font-size:10px;letter-spacing:0.1px"><svg class="g" width="12.1" height="16" style="position:relative;top:0px"><use href="#g52"/></svg>...</div><div class="a" style="left:999px;top:773px;width:78px;height:25px;border-radius:3px;background:linear-gradient(#1a45a8,#1e4fb8 4px,#2255c2 26px);box-shadow:inset 1px 1px 2px #0d2e80"></div><svg class="a" style="left:1005px;top:779px" width="19" height="14"><path d="M4 12C0 12 0 7 4 7C4 3 9 2 11 5C13 2 18 4 17 8C19 9 19 12 16 12Z" fill="#f4f8ff" stroke="#b8c8e8" stroke-width="0.8"/></svg><div class="a t" style="left:1027px;top:779px;color:#fff;font-family:&quot;Liberation Mono&quot;,monospace;font-size:10px;letter-spacing:0.1px"><svg class="g" width="12.1" height="16" style="position:relative;top:0px"><use href="#g50"/></svg>...</div>
<svg class="a" style="left:1086px;top:777px" width="16" height="16"><rect x="1" y="5" width="14" height="10" rx="1" fill="#f0f0f0" stroke="#444" stroke-width="1"/><path d="M3 8H13M3 10.5H13M4 13H12" stroke="#555" stroke-width="1" stroke-dasharray="1 1"/><path d="M5 5C5 2 10 3 10 1" stroke="#222" fill="none"/></svg>
<div class="a" style="left:1113px;top:770px;width:167px;height:30px;background:linear-gradient(#1a8ae0 0px,#38b0f8 2px,#14a0f0 6px,#0f96ec 20px,#0a80d8 30px);border-left:1px solid #0b5fc8;box-shadow:inset 1px 0 1px #5ac0ff"></div>
<svg class="a" style="left:1100px;top:773px" width="140" height="25">
 <circle cx="13.7" cy="12.5" r="9" fill="#2a6ee0" stroke="#b8d4f4" stroke-width="1.4"/><path d="M16 7.5L11 12.5L16 17.5" fill="none" stroke="#fff" stroke-width="2.6"/>
 <ellipse cx="31" cy="10" rx="6" ry="6.5" fill="#1a1a1a"/><ellipse cx="31" cy="13" rx="4" ry="5" fill="#fff"/><path d="M25.5 14C28 17 34 17 36.5 14L35 19H27Z" fill="#e83898"/><ellipse cx="28" cy="21.5" rx="3.2" ry="1.6" fill="#f8b818"/><ellipse cx="34" cy="21.5" rx="3.2" ry="1.6" fill="#f8b818"/><circle cx="36" cy="5" r="2.5" fill="#e83898"/>
 <rect x="42" y="4" width="16" height="17" fill="#e01818"/><rect x="44" y="6" width="12" height="13" fill="#fff"/><path d="M46 8C49 7 51 8 50 11C49 14 52 16 54 13" fill="none" stroke="#e01818" stroke-width="2"/>
 <rect x="65" y="4" width="9" height="8" fill="#5a6ab8" stroke="#2a3a88" stroke-width="0.8"/><rect x="60" y="10" width="9" height="8" fill="#6a7ac8" stroke="#2a3a88" stroke-width="0.8"/><rect x="61" y="19" width="7" height="2" fill="#aab"/>
 <circle cx="84" cy="11" r="6" fill="#777" stroke="#444"/><circle cx="84" cy="11" r="2.5" fill="#bbb"/><circle cx="89" cy="17" r="4" fill="#fff" stroke="#e02020" stroke-width="1.8"/><path d="M86.5 19.5L91.5 14.5" stroke="#e02020" stroke-width="1.5"/>
 <path d="M96 3H101L104 10L108 3H112L106 12L111 20H107L101 13V20H96Z" fill="#e01818"/><path d="M104 13L110 19" stroke="#000" stroke-width="2.2"/><path d="M110 19H106M110 19V15" stroke="#000" stroke-width="1.5"/>
 <rect x="114" y="3" width="10" height="17" fill="#e8e8e8" stroke="#666"/><path d="M116 7H122M116 10H122M116 13H122" stroke="#888"/><circle cx="125" cy="17" r="5" fill="#fff" stroke="#333" stroke-width="0.8"/><path d="M123 13.5L128 17L123 20.5Z" fill="#18a018"/>
</svg>
<div class="a t" style="left:1237px;top:778px;color:#fff;font-size:12px;letter-spacing:0.5px">16:20</div>



<!-- dialog -->
<div class="a" style="left:0;top:14px;width:442px;height:627px;background:#7b8ede;border-radius:0 8px 0 0"></div>
<div id="dlgtitle" class="a">
  <div class="a t" style="left:-5px;top:8px;color:#dfe6f7;font-weight:bold;font-size:12px"><svg class="g" width="13" height="16"><use href="#g131"/></svg><svg class="g" width="13" height="16"><use href="#g132"/></svg><svg class="g" width="13" height="16"><use href="#g133"/></svg><svg class="g" width="13" height="16"><use href="#g134"/></svg></div>
  <div class="a xpbtn" style="left:369px;top:6px;background:linear-gradient(135deg,#8eaaf2,#5b82e6 60%,#4e73dc);border-color:#c8d4f4"><div class="a" style="left:6px;top:12px;width:8px;height:3px;background:#fff"></div></div>
  <div class="a xpbtn" style="left:392px;top:6px;background:linear-gradient(135deg,#8ea6ea,#6f8ee2);border-color:#a9b9ea"><div class="a" style="left:4px;top:4px;width:11px;height:11px;border:1px solid #9fb2ee;border-top-width:2px"></div></div>
  <div class="a xpbtn" style="left:415px;top:6px;background:linear-gradient(135deg,#c493a8,#b56b7c 55%,#a85c6f);border-color:#d6def6"><svg class="a" style="left:3px;top:3px" width="13" height="13"><path d="M2 2L11 11M11 2L2 11" stroke="#fff" stroke-width="2.2"/></svg></div>
</div>
<div id="dlgbody" class="a">
  <div class="a t" style="left:155px;top:3px"><svg class="g" width="12" height="16"><use href="#g106"/></svg><svg class="g" width="12" height="16"><use href="#g107"/></svg><svg class="g" width="12" height="16"><use href="#g135"/></svg><svg class="g" width="12" height="16"><use href="#g106"/></svg><svg class="g" width="12" height="16"><use href="#g136"/></svg><svg class="g" width="12" height="16"><use href="#g137"/></svg><svg class="g" width="12" height="16"><use href="#g43"/></svg><svg class="g" width="12" height="16"><use href="#g138"/></svg></div>
  <div class="a" style="left:32px;top:21px;width:342px;height:17px;background:#fff;border-top:1px solid #aca899;border-left:1px solid #aca899"></div>
  <div class="a t" style="left:179px;top:20px"><svg class="g" width="12" height="16"><use href="#g139"/></svg><svg class="g" width="12" height="16"><use href="#g140"/></svg><svg class="g" width="12" height="16"><use href="#g54"/></svg><svg class="g" width="12" height="16"><use href="#g141"/></svg></div>
  <!-- tree -->
  <div class="a" style="left:-2px;top:44px;width:194px;height:296px;background:#fff;border-top:1px solid #aca899;border-right:1px solid #fff"></div>
  <div class="a t" style="left:-8px;top:58px"><svg class="g" width="12" height="16"><use href="#g142"/></svg><svg class="g" width="12" height="16"><use href="#g143"/></svg></div><div class="a t" style="left:11px;top:72px"><svg class="g" width="12" height="16"><use href="#g144"/></svg><svg class="g" width="12" height="16"><use href="#g145"/></svg><svg class="g" width="12" height="16"><use href="#g142"/></svg><svg class="g" width="12" height="16"><use href="#g143"/></svg></div><div class="a" style="left:0;top:79px;width:8px;border-top:1px dotted #a0a0a0"></div><div class="a t" style="left:11px;top:86px"><svg class="g" width="12" height="16"><use href="#g90"/></svg><svg class="g" width="12" height="16"><use href="#g146"/></svg><svg class="g" width="12" height="16"><use href="#g142"/></svg><svg class="g" width="12" height="16"><use href="#g143"/></svg></div><div class="a" style="left:0;top:93px;width:8px;border-top:1px dotted #a0a0a0"></div><div class="a t" style="left:11px;top:100px"><svg class="g" width="12" height="16"><use href="#g79"/></svg><svg class="g" width="12" height="16"><use href="#g80"/></svg><svg class="g" width="12" height="16"><use href="#g142"/></svg><svg class="g" width="12" height="16"><use href="#g143"/></svg></div><div class="a" style="left:0;top:107px;width:8px;border-top:1px dotted #a0a0a0"></div><div class="a t" style="left:-8px;top:114px"><svg class="g" width="12" height="16"><use href="#g59"/></svg><svg class="g" width="12" height="16"><use href="#g147"/></svg></div><div class="a t" style="left:11px;top:128px"><svg class="g" width="12" height="16"><use href="#g148"/></svg><svg class="g" width="12" height="16"><use href="#g149"/></svg><svg class="g" width="12" height="16"><use href="#g59"/></svg><svg class="g" width="12" height="16"><use href="#g147"/></svg></div><div class="a" style="left:0;top:135px;width:8px;border-top:1px dotted #a0a0a0"></div><div class="a t" style="left:11px;top:142px"><svg class="g" width="12" height="16"><use href="#g90"/></svg><svg class="g" width="12" height="16"><use href="#g146"/></svg><svg class="g" width="12" height="16"><use href="#g59"/></svg><svg class="g" width="12" height="16"><use href="#g147"/></svg></div><div class="a" style="left:0;top:149px;width:8px;border-top:1px dotted #a0a0a0"></div><div class="a t" style="left:11px;top:156px"><svg class="g" width="12" height="16"><use href="#g79"/></svg><svg class="g" width="12" height="16"><use href="#g80"/></svg><svg class="g" width="12" height="16"><use href="#g59"/></svg><svg class="g" width="12" height="16"><use href="#g147"/></svg></div><div class="a" style="left:0;top:163px;width:8px;border-top:1px dotted #a0a0a0"></div><div class="a t" style="left:-8px;top:170px"><svg class="g" width="12" height="16"><use href="#g37"/></svg><svg class="g" width="12" height="16"><use href="#g150"/></svg></div><div class="a t" style="left:11px;top:184px"><svg class="g" width="12" height="16"><use href="#g79"/></svg><svg class="g" width="12" height="16"><use href="#g80"/></svg><svg class="g" width="12" height="16"><use href="#g37"/></svg><svg class="g" width="12" height="16"><use href="#g150"/></svg></div><div class="a" style="left:0;top:191px;width:8px;border-top:1px dotted #a0a0a0"></div><div class="a t" style="left:-8px;top:198px"><svg class="g" width="12" height="16"><use href="#g151"/></svg><svg class="g" width="12" height="16"><use href="#g152"/></svg></div><div class="a t" style="left:11px;top:212px"><svg class="g" width="12" height="16"><use href="#g153"/></svg><svg class="g" width="12" height="16"><use href="#g154"/></svg></div><div class="a" style="left:0;top:219px;width:8px;border-top:1px dotted #a0a0a0"></div><div class="a t" style="left:11px;top:226px"><svg class="g" width="12" height="16"><use href="#g154"/></svg><svg class="g" width="12" height="16"><use href="#g155"/></svg></div><div class="a" style="left:0;top:233px;width:8px;border-top:1px dotted #a0a0a0"></div>
  <!-- icon list -->
  <div class="a" style="left:209px;top:44px;width:228px;height:533px;background:#fff;border-top:1px solid #aca899;border-left:1px solid #aca899"></div>
  <div class="a t" style="left:198px;top:113px;width:100px;text-align:center"><svg class="g" width="12" height="16"><use href="#g156"/></svg></div><div class="a t" style="left:198px;top:197px;width:100px;text-align:center"><svg class="g" width="12" height="16"><use href="#g157"/></svg></div><div class="a t" style="left:271px;top:197px;width:100px;text-align:center"><svg class="g" width="12" height="16"><use href="#g158"/></svg><svg class="g" width="12" height="16"><use href="#g159"/></svg></div><div class="a t" style="left:198px;top:281px;width:100px;text-align:center"><svg class="g" width="12" height="16"><use href="#g83"/></svg><svg class="g" width="12" height="16"><use href="#g158"/></svg><svg class="g" width="12" height="16"><use href="#g159"/></svg></div><div class="a t" style="left:271px;top:281px;width:100px;text-align:center"><svg class="g" width="12" height="16"><use href="#g83"/></svg><svg class="g" width="12" height="16"><use href="#g158"/></svg><svg class="g" width="12" height="16"><use href="#g159"/></svg><svg class="g" width="12" height="16"><use href="#g160"/></svg><svg class="g" width="12" height="16"><use href="#g161"/></svg><svg class="g" width="12" height="16"><use href="#g162"/></svg><svg class="g" width="12" height="16"><use href="#g163"/></svg></div><div class="a t" style="left:198px;top:365px;width:100px;text-align:center"><svg class="g" width="12" height="16"><use href="#g159"/></svg><svg class="g" width="12" height="16"><use href="#g164"/></svg><svg class="g" width="12" height="16"><use href="#g165"/></svg></div><div class="a t" style="left:271px;top:365px;width:100px;text-align:center"><svg class="g" width="12" height="16"><use href="#g166"/></svg><svg class="g" width="12" height="16"><use href="#g159"/></svg></div><div class="a t" style="left:198px;top:449px;width:100px;text-align:center"><svg class="g" width="12" height="16"><use href="#g167"/></svg><svg class="g" width="12" height="16"><use href="#g159"/></svg></div><div class="a t" style="left:271px;top:449px;width:100px;text-align:center"><svg class="g" width="12" height="16"><use href="#g168"/></svg><svg class="g" width="12" height="16"><use href="#g159"/></svg></div><div class="a t" style="left:198px;top:533px;width:100px;text-align:center"><svg class="g" width="12" height="16"><use href="#g169"/></svg><svg class="g" width="12" height="16"><use href="#g159"/></svg></div><div class="a t" style="left:271px;top:533px;width:100px;text-align:center"><svg class="g" width="12" height="16"><use href="#g168"/></svg><svg class="g" width="12" height="16"><use href="#g169"/></svg><svg class="g" width="12" height="16"><use href="#g159"/></svg></div>
  <!-- scrollbar -->
  <div class="a" style="left:420px;top:45px;width:16px;height:532px;background:#fdfdfb"></div>
  <div class="a sbbtn" style="left:420px;top:46px;width:16px;height:16px"><svg class="a" style="left:3px;top:4px" width="10" height="8"><path d="M1 6L5 2L9 6" stroke="#4d6185" stroke-width="2" fill="none"/></svg></div>
  <div class="a sbbtn" style="left:420px;top:63px;width:16px;height:183px"><div class="a" style="left:4px;top:88px;width:7px;height:8px;background:repeating-linear-gradient(#b8c8f0 0 1px,#eef2fd 1px 2px)"></div></div>
  <div class="a sbbtn" style="left:420px;top:559px;width:16px;height:16px"><svg class="a" style="left:3px;top:4px" width="10" height="8"><path d="M1 2L5 6L9 2" stroke="#4d6185" stroke-width="2" fill="none"/></svg></div>
  <!-- controls -->
  <div class="a" style="left:-2px;top:347px;width:85px;height:21px;background:#ECE9D8;border:1px solid;border-color:#fff #716f64 #716f64 #fff;box-shadow:inset -1px -1px #aca899"></div>
  <div class="a t" style="left:-4px;top:350px"><svg class="g" width="12" height="16"><use href="#g170"/></svg><svg class="g" width="12" height="16"><use href="#g171"/></svg><svg class="g" width="12" height="16"><use href="#g172"/></svg><svg class="g" width="12" height="16"><use href="#g173"/></svg><svg class="g" width="12" height="16"><use href="#g174"/></svg></div>
  <svg class="a" style="left:67px;top:355px" width="9" height="5"><path d="M0 0H7L3.5 4Z" fill="#000"/></svg>
  <div class="a" style="left:90px;top:348px;width:13px;height:13px;border:2px solid #000;background:#fff"></div>
  <div class="a t" style="left:108px;top:349px"><svg class="g" width="12" height="16"><use href="#g175"/></svg><svg class="g" width="12" height="16"><use href="#g59"/></svg></div>
  <div class="a" style="left:-2px;top:377px;width:147px;height:26px;border:1px solid #d0d0bf;border-right-color:#fff;border-bottom-color:#fff;box-shadow:inset -1px -1px #d0d0bf"></div>
  <div class="a t" style="left:-2px;top:383px"><svg class="g" width="12" height="16"><use href="#g176"/></svg><svg class="g" width="12" height="16"><use href="#g177"/></svg><svg class="g" width="12" height="16"><use href="#g123"/></svg><svg class="g" width="12" height="16"><use href="#g124"/></svg></div>
  <div class="a" style="left:63px;top:383px;width:13px;height:13px;border:2px solid #000;background:#fff"><svg class="a" style="left:0;top:0" width="9" height="9"><path d="M1.5 4.5L3.5 6.5L7.5 2" stroke="#000" stroke-width="1.8" fill="none"/></svg></div>
  <div class="a t" style="left:81px;top:383px"><svg class="g" width="12" height="16"><use href="#g48"/></svg><svg class="g" width="12" height="16"><use href="#g178"/></svg><svg class="g" width="12" height="16"><use href="#g179"/></svg></div>
  <div class="a btn" style="left:-30px;top:407px;width:76px;height:21px"></div><div class="a t" style="left:-24px;top:409px;width:60px;text-align:right"><svg class="g" width="12" height="16"><use href="#g180"/></svg><svg class="g" width="12" height="16"><use href="#g181"/></svg><svg class="g" width="12" height="16"><use href="#g150"/></svg></div><div class="a btn" style="left:77px;top:407px;width:68px;height:21px;border-width:1px"><svg class="g" width="12" height="16"><use href="#g182"/></svg><svg class="g" width="12" height="16"><use href="#g183"/></svg><svg class="g" width="12" height="16"><use href="#g181"/></svg><svg class="g" width="12" height="16"><use href="#g150"/></svg></div><div class="a btn" style="left:-30px;top:433px;width:76px;height:21px"></div><div class="a t" style="left:-24px;top:435px;width:60px;text-align:right"><svg class="g" width="12" height="16"><use href="#g184"/></svg><svg class="g" width="12" height="16"><use href="#g181"/></svg><svg class="g" width="12" height="16"><use href="#g150"/></svg></div><div class="a btn" style="left:77px;top:433px;width:68px;height:21px;border-width:1px"><svg class="g" width="12" height="16"><use href="#g185"/></svg><svg class="g" width="12" height="16"><use href="#g184"/></svg><svg class="g" width="12" height="16"><use href="#g181"/></svg><svg class="g" width="12" height="16"><use href="#g150"/></svg></div><div class="a btn" style="left:-30px;top:457px;width:76px;height:21px"></div><div class="a t" style="left:-24px;top:459px;width:60px;text-align:right"><svg class="g" width="12" height="16"><use href="#g186"/></svg><svg class="g" width="12" height="16"><use href="#g181"/></svg><svg class="g" width="12" height="16"><use href="#g150"/></svg></div><div class="a btn" style="left:77px;top:457px;width:68px;height:21px;border-width:1px"><svg class="g" width="12" height="16"><use href="#g187"/></svg><svg class="g" width="12" height="16"><use href="#g188"/></svg><svg class="g" width="12" height="16"><use href="#g181"/></svg><svg class="g" width="12" height="16"><use href="#g150"/></svg></div><div class="a btn" style="left:-30px;top:481px;width:76px;height:21px"></div><div class="a t" style="left:-24px;top:483px;width:60px;text-align:right"><svg class="g" width="12" height="16"><use href="#g170"/></svg><svg class="g" width="12" height="16"><use href="#g189"/></svg><svg class="g" width="12" height="16"><use href="#g38"/></svg></div><div class="a btn" style="left:77px;top:481px;width:68px;height:21px;border-width:1px"><svg class="g" width="12" height="16"><use href="#g173"/></svg><svg class="g" width="12" height="16"><use href="#g174"/></svg><svg class="g" width="12" height="16"><use href="#g190"/></svg><svg class="g" width="12" height="16"><use href="#g191"/></svg></div><div class="a btn" style="left:-30px;top:505px;width:76px;height:21px"></div><div class="a t" style="left:-24px;top:507px;width:60px;text-align:right"><svg class="g" width="12" height="16"><use href="#g170"/></svg><svg class="g" width="12" height="16"><use href="#g173"/></svg><svg class="g" width="12" height="16"><use href="#g174"/></svg></div><div class="a btn" style="left:77px;top:505px;width:68px;height:21px;border-width:2px;padding-top:0px"><svg class="g" width="12" height="16"><use href="#g192"/></svg><svg class="g" width="12" height="16"><use href="#g193"/></svg><svg class="g" width="12" height="16"><use href="#g194"/></svg><svg class="g" width="12" height="16"><use href="#g195"/></svg></div><div class="a btn" style="left:-30px;top:529px;width:76px;height:21px"></div><div class="a t" style="left:-24px;top:531px;width:60px;text-align:right"><svg class="g" width="12" height="16"><use href="#g196"/></svg><svg class="g" width="12" height="16"><use href="#g27"/></svg><svg class="g" width="12" height="16"><use href="#g28"/></svg></div><div class="a btn" style="left:77px;top:529px;width:68px;height:21px;border-width:1px"><svg class="g" width="12" height="16"><use href="#g197"/></svg><svg class="g" width="12" height="16"><use href="#g198"/></svg>AVI</div><div class="a btn" style="left:-30px;top:554px;width:76px;height:21px"></div><div class="a t" style="left:-36px;top:556px;width:60px;text-align:right"><svg class="g" width="12" height="16"><use href="#g199"/></svg><svg class="g" width="12" height="16"><use href="#g200"/></svg></div><div class="a btn" style="left:77px;top:554px;width:68px;height:21px;border-width:1px"><svg class="g" width="12" height="16"><use href="#g201"/></svg><svg class="g" width="12" height="16"><use href="#g202"/></svg></div>
</div>

<svg class="a" style="left:210px;top:89px" width="210" height="532" viewBox="210 89 210 532">
<defs>
 <g id="cl"><path d="M5 21C0 21 0 13 5 12C5 8 8 6 11 7C12 0 23 -1 24 6C30 4 36 10 33 15C36 18 33 21 29 21Z" fill="#fff" stroke="#b8b8b8" stroke-width="1.8"/><path d="M11 8C13 10 13 13 12 15M24 7C22 10 23 13 25 15M14 18C18 17 22 18 24 16" fill="none" stroke="#cfcfcf" stroke-width="1.2"/></g>
 <g id="cld"><path d="M5 21C0 21 0 13 5 12C5 8 8 6 11 7C12 0 23 -1 24 6C30 4 36 10 33 15C36 18 33 21 29 21Z" fill="#eee" stroke="#8a8a8a" stroke-width="2"/><path d="M11 8C13 4 21 3 22 9M8 15C12 11 18 12 20 16C23 13 29 14 29 18M13 19C16 17 20 18 21 20" fill="none" stroke="#777" stroke-width="1.5"/></g>
 <g id="dr"><path d="M-1.2 1V6C-1.2 7.5 1.2 7.5 1.2 6V1" fill="#f4f4f4" stroke="#8a8a8a" stroke-width="1"/></g>
 <g id="bolt"><path d="M10 0L2 15H8L3 30L15 12H9L15 2Z" fill="#ffee00" stroke="#e8281e" stroke-width="1"/></g>
 <g id="sun"><path d="M0-19L4-11L11-16L10-8L19-9L12-3L20 2L11 4L15 12L7 9L5 18L0 11L-5 18L-6 9L-14 12L-11 4L-20 1L-12-3L-17-10L-9-8L-9-17L-4-11Z" fill="#ffee00" stroke="#c8b400" stroke-width="0.4"/><circle r="10.5" fill="#f2200e"/><path d="M-8-4C-6-9 0-10 4-8C0-7 -4-5 -8-4Z" fill="#ffee00"/><circle cx="-3" cy="-4" r="2.6" fill="#fff" stroke="#333" stroke-width="0.8"/><circle cx="4" cy="-4" r="2.6" fill="#fff" stroke="#333" stroke-width="0.8"/><path d="M-5 4C-2 8 4 8 7 3" stroke="#7a3a00" stroke-width="1" fill="none"/></g>
</defs>
<use href="#sun" x="252" y="124"/>
<g transform="translate(317 117) scale(0.62)"><use href="#sun"/></g>
<g transform="translate(306 115) scale(1.08 1.3)"><use href="#cl"/></g>
<g transform="translate(234 197)"><use href="#cl"/></g>
<g transform="translate(307 190)"><use href="#cl"/></g>
<use href="#dr" x="317" y="214"/><use href="#dr" x="323" y="214"/><use href="#dr" x="330" y="214"/>
<g transform="translate(234 274)"><use href="#cl"/></g>
<use href="#dr" x="242" y="296"/><use href="#dr" x="250" y="296"/><use href="#dr" x="257" y="296"/>
<g transform="translate(244 276)"><use href="#bolt"/></g>
<g transform="translate(307 274)"><use href="#cl"/></g>
<use href="#dr" x="316" y="296"/><use href="#dr" x="323" y="296"/><use href="#dr" x="329" y="296"/>
<g transform="translate(317 276)"><use href="#bolt"/></g>
<g transform="translate(234 359)"><use href="#cl"/></g>
<use href="#dr" x="242" y="380"/><use href="#dr" x="250" y="380"/><use href="#dr" x="257" y="380"/>
<g transform="translate(307 359)"><use href="#cl"/></g>
<use href="#dr" x="322" y="381"/>
<g transform="translate(234 442)"><use href="#cl"/></g>
<use href="#dr" x="244" y="464"/><use href="#dr" x="252" y="462"/>
<g transform="translate(307 443)"><use href="#cl"/></g>
<use href="#dr" x="315" y="464"/><use href="#dr" x="322" y="464"/><use href="#dr" x="330" y="464"/>
<g transform="translate(234 526)"><use href="#cld"/></g>
<use href="#dr" x="246" y="548"/><use href="#dr" x="255" y="545"/>
<g transform="translate(307 527)"><use href="#cld"/></g>
<use href="#dr" x="315" y="548"/><use href="#dr" x="323" y="548"/><use href="#dr" x="330" y="548"/>
<g transform="translate(234 610)"><use href="#cld"/></g>
<g transform="translate(307 611)"><use href="#cl"/></g>
</svg>
<div class="a" style="left:307px;top:159px;width:28px;height:13px;background:#ECE9D8"></div><div class="a t" style="left:309px;top:156px"><svg class="g" width="12" height="16"><use href="#g203"/></svg><svg class="g" width="12" height="16"><use href="#g204"/></svg></div>

</body></html>
